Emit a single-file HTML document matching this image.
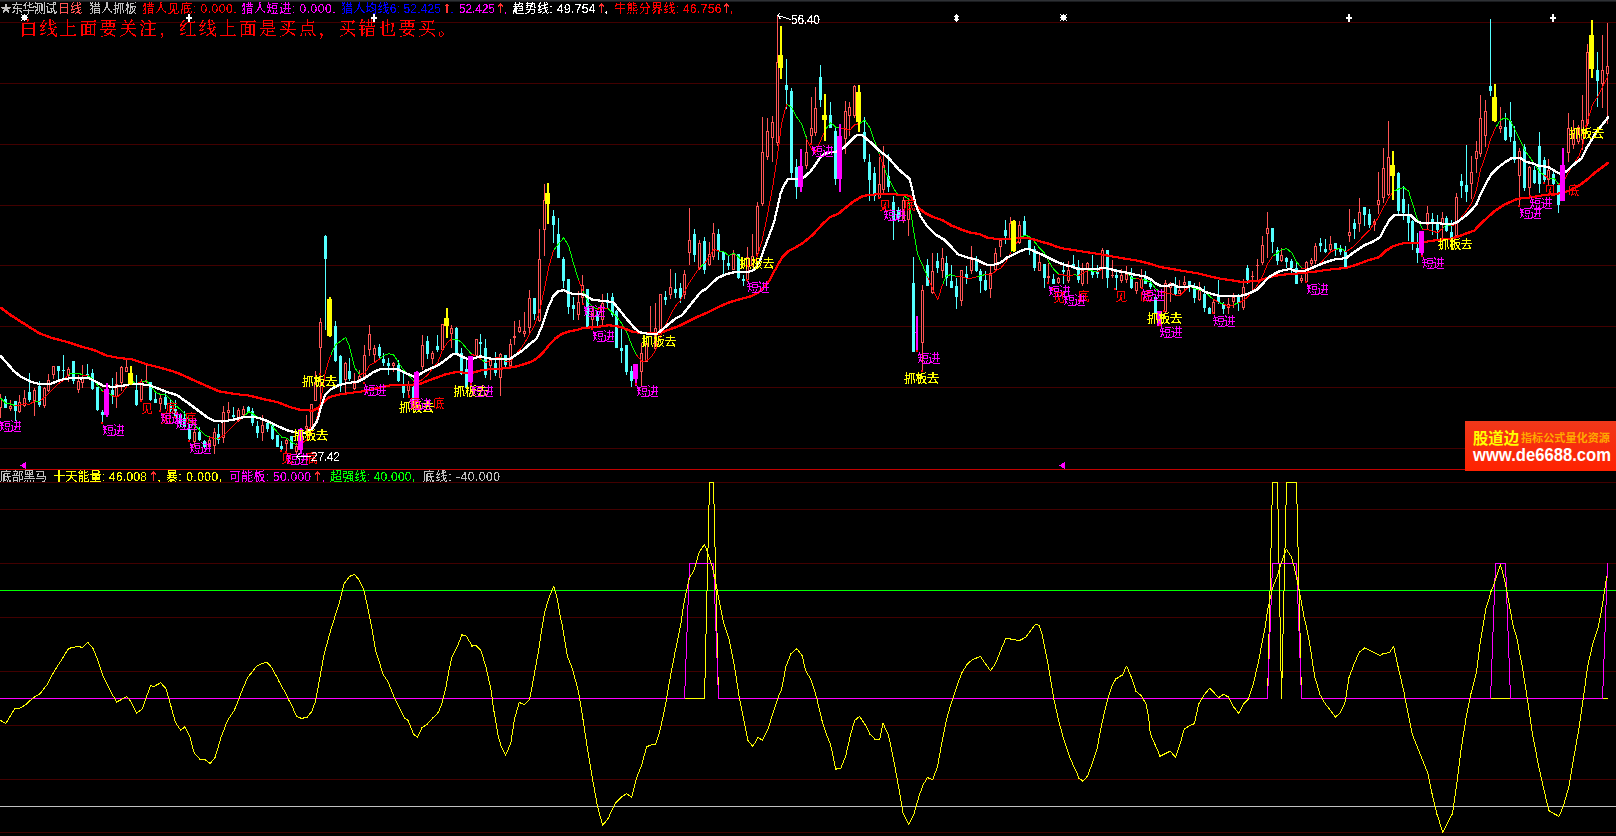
<!DOCTYPE html>
<html lang="zh"><head><meta charset="utf-8"><title>猎人抓板</title>
<style>html,body{margin:0;padding:0;background:#000;overflow:hidden}svg{display:block}</style></head>
<body><svg width="1616" height="836" viewBox="0 0 1616 836">
<rect x="0" y="0" width="1616" height="836" fill="#000"/>
<rect x="0" y="0" width="1616" height="1" fill="#2e3135"/><rect x="0" y="1" width="1616" height="1" fill="#1a1c1f"/>
<g fill="#420000" shape-rendering="crispEdges"><rect x="0" y="22" width="1616" height="1"/><rect x="0" y="83" width="1616" height="1"/><rect x="0" y="144" width="1616" height="1"/><rect x="0" y="205" width="1616" height="1"/><rect x="0" y="265" width="1616" height="1"/><rect x="0" y="326" width="1616" height="1"/><rect x="0" y="387" width="1616" height="1"/><rect x="0" y="448" width="1616" height="1"/><rect x="0" y="482" width="1616" height="1"/><rect x="0" y="509" width="1616" height="1"/><rect x="0" y="563" width="1616" height="1"/><rect x="0" y="617" width="1616" height="1"/><rect x="0" y="671" width="1616" height="1"/><rect x="0" y="725" width="1616" height="1"/><rect x="0" y="779" width="1616" height="1"/><rect x="0" y="832" width="1616" height="1"/></g>
<rect x="0" y="469" width="1616" height="1" fill="#c00000" shape-rendering="crispEdges"/>
<g shape-rendering="crispEdges"><rect x="0" y="394" width="1" height="24" fill="#ff5454"/><rect x="-1" y="398" width="3" height="10" fill="#ff5454"/><rect x="0" y="399" width="1" height="8" fill="#000"/><rect x="5" y="396" width="1" height="12" fill="#54ffff"/><rect x="4" y="399" width="3" height="9" fill="#54ffff"/><rect x="10" y="400" width="1" height="11" fill="#ff5454"/><rect x="9" y="406" width="3" height="3" fill="#ff5454"/><rect x="10" y="407" width="1" height="1" fill="#000"/><rect x="15" y="401" width="1" height="20" fill="#54ffff"/><rect x="14" y="401" width="3" height="10" fill="#54ffff"/><rect x="19" y="395" width="1" height="18" fill="#ff5454"/><rect x="18" y="402" width="3" height="10" fill="#ff5454"/><rect x="19" y="403" width="1" height="8" fill="#000"/><rect x="24" y="390" width="1" height="17" fill="#ff5454"/><rect x="23" y="398" width="3" height="8" fill="#ff5454"/><rect x="24" y="399" width="1" height="6" fill="#000"/><rect x="29" y="373" width="1" height="29" fill="#54ffff"/><rect x="28" y="392" width="3" height="8" fill="#54ffff"/><rect x="34" y="388" width="1" height="28" fill="#ff5454"/><rect x="33" y="390" width="3" height="11" fill="#ff5454"/><rect x="34" y="391" width="1" height="9" fill="#000"/><rect x="39" y="381" width="1" height="26" fill="#54ffff"/><rect x="38" y="386" width="3" height="19" fill="#54ffff"/><rect x="44" y="387" width="1" height="21" fill="#ff5454"/><rect x="43" y="388" width="3" height="18" fill="#ff5454"/><rect x="44" y="389" width="1" height="16" fill="#000"/><rect x="48" y="374" width="1" height="18" fill="#ff5454"/><rect x="47" y="380" width="3" height="11" fill="#ff5454"/><rect x="48" y="381" width="1" height="9" fill="#000"/><rect x="53" y="366" width="1" height="13" fill="#ff5454"/><rect x="52" y="366" width="3" height="9" fill="#ff5454"/><rect x="53" y="367" width="1" height="7" fill="#000"/><rect x="58" y="366" width="1" height="13" fill="#54ffff"/><rect x="57" y="366" width="3" height="5" fill="#54ffff"/><rect x="63" y="355" width="1" height="24" fill="#54ffff"/><rect x="62" y="370" width="3" height="1" fill="#54ffff"/><rect x="68" y="367" width="1" height="15" fill="#ff5454"/><rect x="67" y="369" width="3" height="7" fill="#ff5454"/><rect x="68" y="370" width="1" height="5" fill="#000"/><rect x="73" y="361" width="1" height="23" fill="#54ffff"/><rect x="72" y="361" width="3" height="20" fill="#54ffff"/><rect x="78" y="375" width="1" height="18" fill="#ff5454"/><rect x="77" y="381" width="3" height="9" fill="#ff5454"/><rect x="78" y="382" width="1" height="7" fill="#000"/><rect x="82" y="365" width="1" height="23" fill="#ff5454"/><rect x="81" y="377" width="3" height="6" fill="#ff5454"/><rect x="82" y="378" width="1" height="4" fill="#000"/><rect x="87" y="364" width="1" height="13" fill="#54ffff"/><rect x="86" y="374" width="3" height="1" fill="#54ffff"/><rect x="92" y="369" width="1" height="21" fill="#54ffff"/><rect x="91" y="373" width="3" height="16" fill="#54ffff"/><rect x="97" y="387" width="1" height="24" fill="#54ffff"/><rect x="96" y="387" width="3" height="23" fill="#54ffff"/><rect x="102" y="410" width="1" height="14" fill="#54ffff"/><rect x="101" y="412" width="3" height="3" fill="#54ffff"/><rect x="112" y="378" width="1" height="26" fill="#54ffff"/><rect x="111" y="390" width="3" height="6" fill="#54ffff"/><rect x="116" y="372" width="1" height="36" fill="#ff5454"/><rect x="115" y="384" width="3" height="13" fill="#ff5454"/><rect x="116" y="385" width="1" height="11" fill="#000"/><rect x="121" y="366" width="1" height="25" fill="#ff5454"/><rect x="120" y="367" width="3" height="16" fill="#ff5454"/><rect x="121" y="368" width="1" height="14" fill="#000"/><rect x="126" y="359" width="1" height="13" fill="#ff5454"/><rect x="125" y="367" width="3" height="5" fill="#ff5454"/><rect x="126" y="368" width="1" height="3" fill="#000"/><rect x="136" y="375" width="1" height="31" fill="#54ffff"/><rect x="135" y="390" width="3" height="15" fill="#54ffff"/><rect x="141" y="379" width="1" height="22" fill="#ff5454"/><rect x="140" y="381" width="3" height="19" fill="#ff5454"/><rect x="141" y="382" width="1" height="17" fill="#000"/><rect x="146" y="365" width="1" height="18" fill="#ff5454"/><rect x="145" y="381" width="3" height="1" fill="#ff5454"/><rect x="150" y="382" width="1" height="19" fill="#54ffff"/><rect x="149" y="382" width="3" height="18" fill="#54ffff"/><rect x="155" y="393" width="1" height="10" fill="#54ffff"/><rect x="154" y="399" width="3" height="4" fill="#54ffff"/><rect x="160" y="394" width="1" height="17" fill="#ff5454"/><rect x="159" y="398" width="3" height="6" fill="#ff5454"/><rect x="160" y="399" width="1" height="4" fill="#000"/><rect x="165" y="393" width="1" height="16" fill="#54ffff"/><rect x="164" y="397" width="3" height="8" fill="#54ffff"/><rect x="170" y="400" width="1" height="12" fill="#54ffff"/><rect x="169" y="406" width="3" height="4" fill="#54ffff"/><rect x="175" y="400" width="1" height="18" fill="#54ffff"/><rect x="174" y="409" width="3" height="9" fill="#54ffff"/><rect x="180" y="413" width="1" height="14" fill="#54ffff"/><rect x="179" y="415" width="3" height="9" fill="#54ffff"/><rect x="184" y="411" width="1" height="18" fill="#54ffff"/><rect x="183" y="418" width="3" height="9" fill="#54ffff"/><rect x="189" y="424" width="1" height="18" fill="#54ffff"/><rect x="188" y="429" width="3" height="10" fill="#54ffff"/><rect x="194" y="427" width="1" height="20" fill="#ff5454"/><rect x="193" y="432" width="3" height="10" fill="#ff5454"/><rect x="194" y="433" width="1" height="8" fill="#000"/><rect x="199" y="427" width="1" height="14" fill="#54ffff"/><rect x="198" y="432" width="3" height="8" fill="#54ffff"/><rect x="204" y="440" width="1" height="9" fill="#54ffff"/><rect x="203" y="441" width="3" height="6" fill="#54ffff"/><rect x="209" y="436" width="1" height="16" fill="#ff5454"/><rect x="208" y="440" width="3" height="7" fill="#ff5454"/><rect x="209" y="441" width="1" height="5" fill="#000"/><rect x="214" y="428" width="1" height="26" fill="#ff5454"/><rect x="213" y="432" width="3" height="14" fill="#ff5454"/><rect x="214" y="433" width="1" height="12" fill="#000"/><rect x="218" y="424" width="1" height="20" fill="#54ffff"/><rect x="217" y="434" width="3" height="6" fill="#54ffff"/><rect x="223" y="406" width="1" height="37" fill="#ff5454"/><rect x="222" y="412" width="3" height="26" fill="#ff5454"/><rect x="223" y="413" width="1" height="24" fill="#000"/><rect x="228" y="402" width="1" height="19" fill="#ff5454"/><rect x="227" y="410" width="3" height="3" fill="#ff5454"/><rect x="228" y="411" width="1" height="1" fill="#000"/><rect x="233" y="407" width="1" height="11" fill="#54ffff"/><rect x="232" y="415" width="3" height="2" fill="#54ffff"/><rect x="238" y="408" width="1" height="14" fill="#ff5454"/><rect x="237" y="410" width="3" height="11" fill="#ff5454"/><rect x="238" y="411" width="1" height="9" fill="#000"/><rect x="243" y="406" width="1" height="12" fill="#ff5454"/><rect x="242" y="409" width="3" height="6" fill="#ff5454"/><rect x="243" y="410" width="1" height="4" fill="#000"/><rect x="248" y="406" width="1" height="7" fill="#54ffff"/><rect x="247" y="407" width="3" height="5" fill="#54ffff"/><rect x="252" y="408" width="1" height="18" fill="#54ffff"/><rect x="251" y="411" width="3" height="12" fill="#54ffff"/><rect x="257" y="421" width="1" height="17" fill="#54ffff"/><rect x="256" y="426" width="3" height="7" fill="#54ffff"/><rect x="262" y="415" width="1" height="26" fill="#ff5454"/><rect x="261" y="425" width="3" height="8" fill="#ff5454"/><rect x="262" y="426" width="1" height="6" fill="#000"/><rect x="267" y="423" width="1" height="9" fill="#54ffff"/><rect x="266" y="423" width="3" height="6" fill="#54ffff"/><rect x="272" y="425" width="1" height="15" fill="#54ffff"/><rect x="271" y="425" width="3" height="14" fill="#54ffff"/><rect x="277" y="435" width="1" height="12" fill="#54ffff"/><rect x="276" y="435" width="3" height="12" fill="#54ffff"/><rect x="281" y="441" width="1" height="11" fill="#54ffff"/><rect x="280" y="446" width="3" height="3" fill="#54ffff"/><rect x="286" y="438" width="1" height="16" fill="#ff5454"/><rect x="285" y="440" width="3" height="4" fill="#ff5454"/><rect x="286" y="441" width="1" height="2" fill="#000"/><rect x="291" y="436" width="1" height="13" fill="#54ffff"/><rect x="290" y="436" width="3" height="13" fill="#54ffff"/><rect x="296" y="443" width="1" height="12" fill="#ff5454"/><rect x="295" y="446" width="3" height="6" fill="#ff5454"/><rect x="296" y="447" width="1" height="4" fill="#000"/><rect x="306" y="415" width="1" height="18" fill="#ff5454"/><rect x="305" y="426" width="3" height="3" fill="#ff5454"/><rect x="306" y="427" width="1" height="1" fill="#000"/><rect x="311" y="404" width="1" height="25" fill="#ff5454"/><rect x="310" y="404" width="3" height="25" fill="#ff5454"/><rect x="311" y="405" width="1" height="23" fill="#000"/><rect x="315" y="371" width="1" height="30" fill="#ff5454"/><rect x="314" y="384" width="3" height="17" fill="#ff5454"/><rect x="315" y="385" width="1" height="15" fill="#000"/><rect x="320" y="318" width="1" height="88" fill="#ff5454"/><rect x="319" y="322" width="3" height="26" fill="#ff5454"/><rect x="320" y="323" width="1" height="24" fill="#000"/><rect x="325" y="235" width="1" height="95" fill="#54ffff"/><rect x="324" y="236" width="3" height="23" fill="#54ffff"/><rect x="335" y="321" width="1" height="41" fill="#54ffff"/><rect x="334" y="326" width="3" height="35" fill="#54ffff"/><rect x="340" y="355" width="1" height="37" fill="#54ffff"/><rect x="339" y="356" width="3" height="28" fill="#54ffff"/><rect x="345" y="362" width="1" height="32" fill="#ff5454"/><rect x="344" y="363" width="3" height="17" fill="#ff5454"/><rect x="345" y="364" width="1" height="15" fill="#000"/><rect x="349" y="358" width="1" height="23" fill="#54ffff"/><rect x="348" y="371" width="3" height="8" fill="#54ffff"/><rect x="354" y="373" width="1" height="17" fill="#ff5454"/><rect x="353" y="383" width="3" height="6" fill="#ff5454"/><rect x="354" y="384" width="1" height="4" fill="#000"/><rect x="359" y="370" width="1" height="11" fill="#ff5454"/><rect x="358" y="376" width="3" height="4" fill="#ff5454"/><rect x="359" y="377" width="1" height="2" fill="#000"/><rect x="364" y="345" width="1" height="34" fill="#ff5454"/><rect x="363" y="355" width="3" height="22" fill="#ff5454"/><rect x="364" y="356" width="1" height="20" fill="#000"/><rect x="369" y="325" width="1" height="31" fill="#ff5454"/><rect x="368" y="334" width="3" height="16" fill="#ff5454"/><rect x="369" y="335" width="1" height="14" fill="#000"/><rect x="374" y="345" width="1" height="18" fill="#ff5454"/><rect x="373" y="348" width="3" height="7" fill="#ff5454"/><rect x="374" y="349" width="1" height="5" fill="#000"/><rect x="379" y="344" width="1" height="15" fill="#54ffff"/><rect x="378" y="347" width="3" height="9" fill="#54ffff"/><rect x="383" y="353" width="1" height="13" fill="#54ffff"/><rect x="382" y="359" width="3" height="4" fill="#54ffff"/><rect x="388" y="358" width="1" height="17" fill="#54ffff"/><rect x="387" y="363" width="3" height="3" fill="#54ffff"/><rect x="393" y="362" width="1" height="10" fill="#ff5454"/><rect x="392" y="363" width="3" height="3" fill="#ff5454"/><rect x="393" y="364" width="1" height="1" fill="#000"/><rect x="398" y="360" width="1" height="22" fill="#54ffff"/><rect x="397" y="365" width="3" height="16" fill="#54ffff"/><rect x="403" y="373" width="1" height="25" fill="#54ffff"/><rect x="402" y="385" width="3" height="8" fill="#54ffff"/><rect x="408" y="381" width="1" height="16" fill="#ff5454"/><rect x="407" y="384" width="3" height="7" fill="#ff5454"/><rect x="408" y="385" width="1" height="5" fill="#000"/><rect x="413" y="385" width="1" height="19" fill="#54ffff"/><rect x="412" y="387" width="3" height="13" fill="#54ffff"/><rect x="422" y="335" width="1" height="35" fill="#ff5454"/><rect x="421" y="345" width="3" height="22" fill="#ff5454"/><rect x="422" y="346" width="1" height="20" fill="#000"/><rect x="427" y="336" width="1" height="23" fill="#54ffff"/><rect x="426" y="341" width="3" height="13" fill="#54ffff"/><rect x="432" y="351" width="1" height="13" fill="#ff5454"/><rect x="431" y="353" width="3" height="6" fill="#ff5454"/><rect x="432" y="354" width="1" height="4" fill="#000"/><rect x="437" y="335" width="1" height="17" fill="#54ffff"/><rect x="436" y="346" width="3" height="4" fill="#54ffff"/><rect x="442" y="324" width="1" height="27" fill="#ff5454"/><rect x="441" y="324" width="3" height="26" fill="#ff5454"/><rect x="442" y="325" width="1" height="24" fill="#000"/><rect x="451" y="325" width="1" height="23" fill="#ff5454"/><rect x="450" y="328" width="3" height="6" fill="#ff5454"/><rect x="451" y="329" width="1" height="4" fill="#000"/><rect x="456" y="327" width="1" height="27" fill="#54ffff"/><rect x="455" y="328" width="3" height="25" fill="#54ffff"/><rect x="461" y="348" width="1" height="27" fill="#54ffff"/><rect x="460" y="353" width="3" height="21" fill="#54ffff"/><rect x="466" y="360" width="1" height="29" fill="#54ffff"/><rect x="465" y="369" width="3" height="19" fill="#54ffff"/><rect x="476" y="339" width="1" height="17" fill="#ff5454"/><rect x="475" y="339" width="3" height="17" fill="#ff5454"/><rect x="476" y="340" width="1" height="15" fill="#000"/><rect x="480" y="334" width="1" height="21" fill="#54ffff"/><rect x="479" y="342" width="3" height="2" fill="#54ffff"/><rect x="485" y="339" width="1" height="39" fill="#54ffff"/><rect x="484" y="348" width="3" height="27" fill="#54ffff"/><rect x="490" y="357" width="1" height="23" fill="#ff5454"/><rect x="489" y="359" width="3" height="7" fill="#ff5454"/><rect x="490" y="360" width="1" height="5" fill="#000"/><rect x="495" y="352" width="1" height="24" fill="#54ffff"/><rect x="494" y="363" width="3" height="10" fill="#54ffff"/><rect x="500" y="353" width="1" height="43" fill="#ff5454"/><rect x="499" y="354" width="3" height="24" fill="#ff5454"/><rect x="500" y="355" width="1" height="22" fill="#000"/><rect x="505" y="355" width="1" height="13" fill="#54ffff"/><rect x="504" y="355" width="3" height="10" fill="#54ffff"/><rect x="510" y="339" width="1" height="28" fill="#ff5454"/><rect x="509" y="344" width="3" height="22" fill="#ff5454"/><rect x="510" y="345" width="1" height="20" fill="#000"/><rect x="514" y="321" width="1" height="24" fill="#ff5454"/><rect x="513" y="336" width="3" height="2" fill="#ff5454"/><rect x="519" y="320" width="1" height="13" fill="#ff5454"/><rect x="518" y="327" width="3" height="5" fill="#ff5454"/><rect x="519" y="328" width="1" height="3" fill="#000"/><rect x="524" y="312" width="1" height="25" fill="#ff5454"/><rect x="523" y="331" width="3" height="3" fill="#ff5454"/><rect x="524" y="332" width="1" height="1" fill="#000"/><rect x="529" y="290" width="1" height="43" fill="#ff5454"/><rect x="528" y="298" width="3" height="30" fill="#ff5454"/><rect x="529" y="299" width="1" height="28" fill="#000"/><rect x="534" y="298" width="1" height="22" fill="#54ffff"/><rect x="533" y="298" width="3" height="16" fill="#54ffff"/><rect x="539" y="229" width="1" height="93" fill="#ff5454"/><rect x="538" y="259" width="3" height="62" fill="#ff5454"/><rect x="539" y="260" width="1" height="60" fill="#000"/><rect x="544" y="184" width="1" height="72" fill="#ff5454"/><rect x="543" y="200" width="3" height="30" fill="#ff5454"/><rect x="544" y="201" width="1" height="28" fill="#000"/><rect x="553" y="210" width="1" height="33" fill="#54ffff"/><rect x="552" y="216" width="3" height="9" fill="#54ffff"/><rect x="558" y="218" width="1" height="40" fill="#54ffff"/><rect x="557" y="234" width="3" height="24" fill="#54ffff"/><rect x="563" y="257" width="1" height="31" fill="#54ffff"/><rect x="562" y="259" width="3" height="22" fill="#54ffff"/><rect x="568" y="279" width="1" height="35" fill="#54ffff"/><rect x="567" y="279" width="3" height="28" fill="#54ffff"/><rect x="573" y="297" width="1" height="23" fill="#54ffff"/><rect x="572" y="305" width="3" height="4" fill="#54ffff"/><rect x="578" y="291" width="1" height="29" fill="#ff5454"/><rect x="577" y="302" width="3" height="13" fill="#ff5454"/><rect x="578" y="303" width="1" height="11" fill="#000"/><rect x="582" y="275" width="1" height="28" fill="#ff5454"/><rect x="581" y="285" width="3" height="13" fill="#ff5454"/><rect x="582" y="286" width="1" height="11" fill="#000"/><rect x="587" y="289" width="1" height="38" fill="#54ffff"/><rect x="586" y="289" width="3" height="38" fill="#54ffff"/><rect x="592" y="306" width="1" height="21" fill="#ff5454"/><rect x="591" y="311" width="3" height="9" fill="#ff5454"/><rect x="592" y="312" width="1" height="7" fill="#000"/><rect x="597" y="311" width="1" height="15" fill="#54ffff"/><rect x="596" y="314" width="3" height="7" fill="#54ffff"/><rect x="602" y="294" width="1" height="31" fill="#ff5454"/><rect x="601" y="303" width="3" height="17" fill="#ff5454"/><rect x="602" y="304" width="1" height="15" fill="#000"/><rect x="607" y="293" width="1" height="15" fill="#54ffff"/><rect x="606" y="301" width="3" height="2" fill="#54ffff"/><rect x="612" y="293" width="1" height="24" fill="#54ffff"/><rect x="611" y="297" width="3" height="18" fill="#54ffff"/><rect x="616" y="310" width="1" height="38" fill="#54ffff"/><rect x="615" y="311" width="3" height="37" fill="#54ffff"/><rect x="621" y="329" width="1" height="34" fill="#54ffff"/><rect x="620" y="348" width="3" height="3" fill="#54ffff"/><rect x="626" y="345" width="1" height="30" fill="#54ffff"/><rect x="625" y="345" width="3" height="27" fill="#54ffff"/><rect x="631" y="366" width="1" height="21" fill="#54ffff"/><rect x="630" y="371" width="3" height="10" fill="#54ffff"/><rect x="641" y="343" width="1" height="44" fill="#ff5454"/><rect x="640" y="353" width="3" height="19" fill="#ff5454"/><rect x="641" y="354" width="1" height="17" fill="#000"/><rect x="646" y="341" width="1" height="21" fill="#ff5454"/><rect x="645" y="343" width="3" height="19" fill="#ff5454"/><rect x="646" y="344" width="1" height="17" fill="#000"/><rect x="650" y="306" width="1" height="29" fill="#ff5454"/><rect x="649" y="332" width="3" height="2" fill="#ff5454"/><rect x="655" y="303" width="1" height="48" fill="#ff5454"/><rect x="654" y="328" width="3" height="21" fill="#ff5454"/><rect x="655" y="329" width="1" height="19" fill="#000"/><rect x="660" y="294" width="1" height="38" fill="#ff5454"/><rect x="659" y="294" width="3" height="37" fill="#ff5454"/><rect x="660" y="295" width="1" height="35" fill="#000"/><rect x="665" y="291" width="1" height="14" fill="#54ffff"/><rect x="664" y="297" width="3" height="3" fill="#54ffff"/><rect x="670" y="269" width="1" height="30" fill="#ff5454"/><rect x="669" y="287" width="3" height="8" fill="#ff5454"/><rect x="670" y="288" width="1" height="6" fill="#000"/><rect x="675" y="273" width="1" height="25" fill="#54ffff"/><rect x="674" y="289" width="3" height="4" fill="#54ffff"/><rect x="680" y="283" width="1" height="20" fill="#54ffff"/><rect x="679" y="288" width="3" height="10" fill="#54ffff"/><rect x="684" y="270" width="1" height="29" fill="#ff5454"/><rect x="683" y="274" width="3" height="21" fill="#ff5454"/><rect x="684" y="275" width="1" height="19" fill="#000"/><rect x="689" y="208" width="1" height="57" fill="#ff5454"/><rect x="688" y="240" width="3" height="13" fill="#ff5454"/><rect x="689" y="241" width="1" height="11" fill="#000"/><rect x="694" y="229" width="1" height="33" fill="#54ffff"/><rect x="693" y="234" width="3" height="21" fill="#54ffff"/><rect x="699" y="240" width="1" height="30" fill="#ff5454"/><rect x="698" y="243" width="3" height="26" fill="#ff5454"/><rect x="699" y="244" width="1" height="24" fill="#000"/><rect x="704" y="237" width="1" height="37" fill="#54ffff"/><rect x="703" y="241" width="3" height="29" fill="#54ffff"/><rect x="709" y="242" width="1" height="24" fill="#ff5454"/><rect x="708" y="254" width="3" height="11" fill="#ff5454"/><rect x="709" y="255" width="1" height="9" fill="#000"/><rect x="713" y="223" width="1" height="37" fill="#ff5454"/><rect x="712" y="233" width="3" height="24" fill="#ff5454"/><rect x="713" y="234" width="1" height="22" fill="#000"/><rect x="718" y="229" width="1" height="31" fill="#54ffff"/><rect x="717" y="234" width="3" height="17" fill="#54ffff"/><rect x="723" y="252" width="1" height="23" fill="#54ffff"/><rect x="722" y="252" width="3" height="8" fill="#54ffff"/><rect x="728" y="256" width="1" height="14" fill="#54ffff"/><rect x="727" y="263" width="3" height="3" fill="#54ffff"/><rect x="733" y="250" width="1" height="20" fill="#ff5454"/><rect x="732" y="254" width="3" height="16" fill="#ff5454"/><rect x="733" y="255" width="1" height="14" fill="#000"/><rect x="738" y="254" width="1" height="25" fill="#54ffff"/><rect x="737" y="254" width="3" height="24" fill="#54ffff"/><rect x="743" y="275" width="1" height="11" fill="#54ffff"/><rect x="742" y="279" width="3" height="2" fill="#54ffff"/><rect x="747" y="247" width="1" height="35" fill="#ff5454"/><rect x="746" y="257" width="3" height="23" fill="#ff5454"/><rect x="747" y="258" width="1" height="21" fill="#000"/><rect x="752" y="234" width="1" height="33" fill="#ff5454"/><rect x="751" y="256" width="3" height="10" fill="#ff5454"/><rect x="752" y="257" width="1" height="8" fill="#000"/><rect x="757" y="202" width="1" height="54" fill="#ff5454"/><rect x="756" y="206" width="3" height="48" fill="#ff5454"/><rect x="757" y="207" width="1" height="46" fill="#000"/><rect x="762" y="117" width="1" height="89" fill="#ff5454"/><rect x="761" y="152" width="3" height="52" fill="#ff5454"/><rect x="762" y="153" width="1" height="50" fill="#000"/><rect x="767" y="118" width="1" height="42" fill="#ff5454"/><rect x="766" y="131" width="3" height="26" fill="#ff5454"/><rect x="767" y="132" width="1" height="24" fill="#000"/><rect x="772" y="116" width="1" height="46" fill="#ff5454"/><rect x="771" y="122" width="3" height="16" fill="#ff5454"/><rect x="772" y="123" width="1" height="14" fill="#000"/><rect x="777" y="15" width="1" height="131" fill="#ff5454"/><rect x="776" y="62" width="3" height="81" fill="#ff5454"/><rect x="777" y="63" width="1" height="79" fill="#000"/><rect x="786" y="59" width="1" height="50" fill="#54ffff"/><rect x="785" y="85" width="3" height="5" fill="#54ffff"/><rect x="791" y="88" width="1" height="91" fill="#54ffff"/><rect x="790" y="91" width="3" height="82" fill="#54ffff"/><rect x="796" y="159" width="1" height="40" fill="#54ffff"/><rect x="795" y="167" width="3" height="20" fill="#54ffff"/><rect x="806" y="136" width="1" height="33" fill="#ff5454"/><rect x="805" y="152" width="3" height="14" fill="#ff5454"/><rect x="806" y="153" width="1" height="12" fill="#000"/><rect x="811" y="97" width="1" height="47" fill="#ff5454"/><rect x="810" y="128" width="3" height="8" fill="#ff5454"/><rect x="811" y="129" width="1" height="6" fill="#000"/><rect x="815" y="87" width="1" height="49" fill="#ff5454"/><rect x="814" y="108" width="3" height="25" fill="#ff5454"/><rect x="815" y="109" width="1" height="23" fill="#000"/><rect x="820" y="65" width="1" height="42" fill="#54ffff"/><rect x="819" y="77" width="3" height="23" fill="#54ffff"/><rect x="830" y="102" width="1" height="26" fill="#54ffff"/><rect x="829" y="115" width="3" height="13" fill="#54ffff"/><rect x="835" y="128" width="1" height="57" fill="#54ffff"/><rect x="834" y="131" width="3" height="48" fill="#54ffff"/><rect x="845" y="101" width="1" height="53" fill="#ff5454"/><rect x="844" y="111" width="3" height="28" fill="#ff5454"/><rect x="845" y="112" width="1" height="26" fill="#000"/><rect x="849" y="102" width="1" height="34" fill="#ff5454"/><rect x="848" y="107" width="3" height="9" fill="#ff5454"/><rect x="849" y="108" width="1" height="7" fill="#000"/><rect x="854" y="85" width="1" height="33" fill="#ff5454"/><rect x="853" y="86" width="3" height="30" fill="#ff5454"/><rect x="854" y="87" width="1" height="28" fill="#000"/><rect x="864" y="117" width="1" height="45" fill="#54ffff"/><rect x="863" y="132" width="3" height="27" fill="#54ffff"/><rect x="869" y="154" width="1" height="47" fill="#54ffff"/><rect x="868" y="162" width="3" height="18" fill="#54ffff"/><rect x="874" y="167" width="1" height="34" fill="#54ffff"/><rect x="873" y="173" width="3" height="23" fill="#54ffff"/><rect x="879" y="157" width="1" height="41" fill="#ff5454"/><rect x="878" y="184" width="3" height="14" fill="#ff5454"/><rect x="879" y="185" width="1" height="12" fill="#000"/><rect x="883" y="146" width="1" height="47" fill="#ff5454"/><rect x="882" y="165" width="3" height="25" fill="#ff5454"/><rect x="883" y="166" width="1" height="23" fill="#000"/><rect x="888" y="154" width="1" height="38" fill="#54ffff"/><rect x="887" y="176" width="3" height="11" fill="#54ffff"/><rect x="893" y="196" width="1" height="44" fill="#54ffff"/><rect x="892" y="202" width="3" height="19" fill="#54ffff"/><rect x="898" y="207" width="1" height="15" fill="#54ffff"/><rect x="897" y="210" width="3" height="8" fill="#54ffff"/><rect x="903" y="197" width="1" height="26" fill="#ff5454"/><rect x="902" y="200" width="3" height="21" fill="#ff5454"/><rect x="903" y="201" width="1" height="19" fill="#000"/><rect x="908" y="199" width="1" height="37" fill="#ff5454"/><rect x="907" y="203" width="3" height="17" fill="#ff5454"/><rect x="908" y="204" width="1" height="15" fill="#000"/><rect x="913" y="257" width="1" height="95" fill="#54ffff"/><rect x="912" y="283" width="3" height="69" fill="#54ffff"/><rect x="922" y="285" width="1" height="86" fill="#ff5454"/><rect x="921" y="290" width="3" height="53" fill="#ff5454"/><rect x="922" y="291" width="1" height="51" fill="#000"/><rect x="927" y="259" width="1" height="27" fill="#54ffff"/><rect x="926" y="265" width="3" height="21" fill="#54ffff"/><rect x="932" y="253" width="1" height="41" fill="#ff5454"/><rect x="931" y="271" width="3" height="22" fill="#ff5454"/><rect x="932" y="272" width="1" height="20" fill="#000"/><rect x="937" y="253" width="1" height="20" fill="#54ffff"/><rect x="936" y="261" width="3" height="7" fill="#54ffff"/><rect x="942" y="248" width="1" height="30" fill="#ff5454"/><rect x="941" y="258" width="3" height="13" fill="#ff5454"/><rect x="942" y="259" width="1" height="11" fill="#000"/><rect x="946" y="256" width="1" height="30" fill="#54ffff"/><rect x="945" y="263" width="3" height="15" fill="#54ffff"/><rect x="951" y="265" width="1" height="23" fill="#54ffff"/><rect x="950" y="281" width="3" height="7" fill="#54ffff"/><rect x="956" y="278" width="1" height="31" fill="#54ffff"/><rect x="955" y="286" width="3" height="11" fill="#54ffff"/><rect x="961" y="270" width="1" height="36" fill="#ff5454"/><rect x="960" y="270" width="3" height="31" fill="#ff5454"/><rect x="961" y="271" width="1" height="29" fill="#000"/><rect x="966" y="266" width="1" height="18" fill="#54ffff"/><rect x="965" y="274" width="3" height="4" fill="#54ffff"/><rect x="971" y="246" width="1" height="28" fill="#ff5454"/><rect x="970" y="257" width="3" height="14" fill="#ff5454"/><rect x="971" y="258" width="1" height="12" fill="#000"/><rect x="976" y="256" width="1" height="16" fill="#54ffff"/><rect x="975" y="261" width="3" height="10" fill="#54ffff"/><rect x="980" y="269" width="1" height="24" fill="#54ffff"/><rect x="979" y="271" width="3" height="10" fill="#54ffff"/><rect x="985" y="271" width="1" height="20" fill="#54ffff"/><rect x="984" y="280" width="3" height="10" fill="#54ffff"/><rect x="990" y="264" width="1" height="34" fill="#ff5454"/><rect x="989" y="273" width="3" height="16" fill="#ff5454"/><rect x="990" y="274" width="1" height="14" fill="#000"/><rect x="995" y="248" width="1" height="23" fill="#ff5454"/><rect x="994" y="253" width="3" height="17" fill="#ff5454"/><rect x="995" y="254" width="1" height="15" fill="#000"/><rect x="1000" y="240" width="1" height="17" fill="#ff5454"/><rect x="999" y="240" width="3" height="7" fill="#ff5454"/><rect x="1000" y="241" width="1" height="5" fill="#000"/><rect x="1005" y="220" width="1" height="24" fill="#54ffff"/><rect x="1004" y="230" width="3" height="6" fill="#54ffff"/><rect x="1010" y="217" width="1" height="23" fill="#ff5454"/><rect x="1009" y="223" width="3" height="17" fill="#ff5454"/><rect x="1010" y="224" width="1" height="15" fill="#000"/><rect x="1019" y="221" width="1" height="23" fill="#ff5454"/><rect x="1018" y="225" width="3" height="18" fill="#ff5454"/><rect x="1019" y="226" width="1" height="16" fill="#000"/><rect x="1024" y="216" width="1" height="20" fill="#54ffff"/><rect x="1023" y="221" width="3" height="15" fill="#54ffff"/><rect x="1029" y="237" width="1" height="18" fill="#54ffff"/><rect x="1028" y="240" width="3" height="9" fill="#54ffff"/><rect x="1034" y="246" width="1" height="25" fill="#54ffff"/><rect x="1033" y="249" width="3" height="19" fill="#54ffff"/><rect x="1039" y="252" width="1" height="19" fill="#ff5454"/><rect x="1038" y="262" width="3" height="9" fill="#ff5454"/><rect x="1039" y="263" width="1" height="7" fill="#000"/><rect x="1044" y="264" width="1" height="24" fill="#54ffff"/><rect x="1043" y="264" width="3" height="14" fill="#54ffff"/><rect x="1048" y="263" width="1" height="21" fill="#ff5454"/><rect x="1047" y="276" width="3" height="2" fill="#ff5454"/><rect x="1053" y="274" width="1" height="10" fill="#54ffff"/><rect x="1052" y="279" width="3" height="5" fill="#54ffff"/><rect x="1058" y="277" width="1" height="7" fill="#ff5454"/><rect x="1057" y="278" width="3" height="5" fill="#ff5454"/><rect x="1058" y="279" width="1" height="3" fill="#000"/><rect x="1063" y="262" width="1" height="22" fill="#54ffff"/><rect x="1062" y="270" width="3" height="2" fill="#54ffff"/><rect x="1068" y="261" width="1" height="22" fill="#ff5454"/><rect x="1067" y="270" width="3" height="11" fill="#ff5454"/><rect x="1068" y="271" width="1" height="9" fill="#000"/><rect x="1073" y="255" width="1" height="14" fill="#54ffff"/><rect x="1072" y="264" width="3" height="4" fill="#54ffff"/><rect x="1078" y="260" width="1" height="23" fill="#54ffff"/><rect x="1077" y="267" width="3" height="13" fill="#54ffff"/><rect x="1082" y="263" width="1" height="23" fill="#ff5454"/><rect x="1081" y="270" width="3" height="14" fill="#ff5454"/><rect x="1082" y="271" width="1" height="12" fill="#000"/><rect x="1087" y="262" width="1" height="22" fill="#ff5454"/><rect x="1086" y="263" width="3" height="7" fill="#ff5454"/><rect x="1087" y="264" width="1" height="5" fill="#000"/><rect x="1092" y="255" width="1" height="23" fill="#54ffff"/><rect x="1091" y="271" width="3" height="4" fill="#54ffff"/><rect x="1097" y="265" width="1" height="13" fill="#54ffff"/><rect x="1096" y="272" width="3" height="2" fill="#54ffff"/><rect x="1102" y="248" width="1" height="31" fill="#ff5454"/><rect x="1101" y="250" width="3" height="19" fill="#ff5454"/><rect x="1102" y="251" width="1" height="17" fill="#000"/><rect x="1107" y="250" width="1" height="38" fill="#54ffff"/><rect x="1106" y="250" width="3" height="28" fill="#54ffff"/><rect x="1112" y="260" width="1" height="18" fill="#ff5454"/><rect x="1111" y="275" width="3" height="1" fill="#ff5454"/><rect x="1116" y="269" width="1" height="21" fill="#54ffff"/><rect x="1115" y="275" width="3" height="3" fill="#54ffff"/><rect x="1121" y="269" width="1" height="14" fill="#ff5454"/><rect x="1120" y="275" width="3" height="6" fill="#ff5454"/><rect x="1121" y="276" width="1" height="4" fill="#000"/><rect x="1126" y="266" width="1" height="17" fill="#ff5454"/><rect x="1125" y="274" width="3" height="6" fill="#ff5454"/><rect x="1126" y="275" width="1" height="4" fill="#000"/><rect x="1131" y="268" width="1" height="21" fill="#54ffff"/><rect x="1130" y="276" width="3" height="12" fill="#54ffff"/><rect x="1136" y="282" width="1" height="12" fill="#ff5454"/><rect x="1135" y="282" width="3" height="9" fill="#ff5454"/><rect x="1136" y="283" width="1" height="7" fill="#000"/><rect x="1141" y="269" width="1" height="19" fill="#ff5454"/><rect x="1140" y="279" width="3" height="9" fill="#ff5454"/><rect x="1141" y="280" width="1" height="7" fill="#000"/><rect x="1145" y="271" width="1" height="13" fill="#54ffff"/><rect x="1144" y="278" width="3" height="6" fill="#54ffff"/><rect x="1150" y="280" width="1" height="9" fill="#54ffff"/><rect x="1149" y="283" width="3" height="4" fill="#54ffff"/><rect x="1155" y="294" width="1" height="20" fill="#54ffff"/><rect x="1154" y="297" width="3" height="16" fill="#54ffff"/><rect x="1165" y="280" width="1" height="33" fill="#ff5454"/><rect x="1164" y="283" width="3" height="29" fill="#ff5454"/><rect x="1165" y="284" width="1" height="27" fill="#000"/><rect x="1170" y="282" width="1" height="20" fill="#ff5454"/><rect x="1169" y="283" width="3" height="5" fill="#ff5454"/><rect x="1170" y="284" width="1" height="3" fill="#000"/><rect x="1175" y="277" width="1" height="19" fill="#54ffff"/><rect x="1174" y="286" width="3" height="8" fill="#54ffff"/><rect x="1179" y="280" width="1" height="14" fill="#ff5454"/><rect x="1178" y="290" width="3" height="4" fill="#ff5454"/><rect x="1179" y="291" width="1" height="2" fill="#000"/><rect x="1184" y="276" width="1" height="15" fill="#ff5454"/><rect x="1183" y="282" width="3" height="3" fill="#ff5454"/><rect x="1184" y="283" width="1" height="1" fill="#000"/><rect x="1189" y="281" width="1" height="11" fill="#54ffff"/><rect x="1188" y="281" width="3" height="4" fill="#54ffff"/><rect x="1194" y="283" width="1" height="20" fill="#54ffff"/><rect x="1193" y="288" width="3" height="10" fill="#54ffff"/><rect x="1199" y="282" width="1" height="19" fill="#ff5454"/><rect x="1198" y="290" width="3" height="10" fill="#ff5454"/><rect x="1199" y="291" width="1" height="8" fill="#000"/><rect x="1204" y="286" width="1" height="26" fill="#54ffff"/><rect x="1203" y="294" width="3" height="14" fill="#54ffff"/><rect x="1209" y="307" width="1" height="7" fill="#54ffff"/><rect x="1208" y="308" width="3" height="6" fill="#54ffff"/><rect x="1213" y="299" width="1" height="15" fill="#ff5454"/><rect x="1212" y="302" width="3" height="12" fill="#ff5454"/><rect x="1213" y="303" width="1" height="10" fill="#000"/><rect x="1218" y="280" width="1" height="24" fill="#54ffff"/><rect x="1217" y="296" width="3" height="6" fill="#54ffff"/><rect x="1223" y="302" width="1" height="12" fill="#54ffff"/><rect x="1222" y="304" width="3" height="5" fill="#54ffff"/><rect x="1228" y="298" width="1" height="16" fill="#ff5454"/><rect x="1227" y="304" width="3" height="4" fill="#ff5454"/><rect x="1228" y="305" width="1" height="2" fill="#000"/><rect x="1233" y="293" width="1" height="15" fill="#ff5454"/><rect x="1232" y="297" width="3" height="5" fill="#ff5454"/><rect x="1233" y="298" width="1" height="3" fill="#000"/><rect x="1238" y="294" width="1" height="17" fill="#54ffff"/><rect x="1237" y="295" width="3" height="8" fill="#54ffff"/><rect x="1243" y="279" width="1" height="31" fill="#ff5454"/><rect x="1242" y="287" width="3" height="21" fill="#ff5454"/><rect x="1243" y="288" width="1" height="19" fill="#000"/><rect x="1247" y="265" width="1" height="19" fill="#54ffff"/><rect x="1246" y="268" width="3" height="12" fill="#54ffff"/><rect x="1252" y="271" width="1" height="19" fill="#ff5454"/><rect x="1251" y="276" width="3" height="1" fill="#ff5454"/><rect x="1257" y="259" width="1" height="21" fill="#ff5454"/><rect x="1256" y="265" width="3" height="1" fill="#ff5454"/><rect x="1262" y="236" width="1" height="29" fill="#ff5454"/><rect x="1261" y="245" width="3" height="18" fill="#ff5454"/><rect x="1262" y="246" width="1" height="16" fill="#000"/><rect x="1267" y="212" width="1" height="46" fill="#ff5454"/><rect x="1266" y="228" width="3" height="6" fill="#ff5454"/><rect x="1267" y="229" width="1" height="4" fill="#000"/><rect x="1272" y="228" width="1" height="25" fill="#54ffff"/><rect x="1271" y="228" width="3" height="14" fill="#54ffff"/><rect x="1277" y="247" width="1" height="18" fill="#54ffff"/><rect x="1276" y="250" width="3" height="11" fill="#54ffff"/><rect x="1281" y="248" width="1" height="14" fill="#ff5454"/><rect x="1280" y="255" width="3" height="6" fill="#ff5454"/><rect x="1281" y="256" width="1" height="4" fill="#000"/><rect x="1286" y="257" width="1" height="11" fill="#54ffff"/><rect x="1285" y="258" width="3" height="4" fill="#54ffff"/><rect x="1291" y="259" width="1" height="14" fill="#54ffff"/><rect x="1290" y="261" width="3" height="7" fill="#54ffff"/><rect x="1296" y="263" width="1" height="21" fill="#54ffff"/><rect x="1295" y="268" width="3" height="16" fill="#54ffff"/><rect x="1301" y="275" width="1" height="8" fill="#ff5454"/><rect x="1300" y="278" width="3" height="3" fill="#ff5454"/><rect x="1301" y="279" width="1" height="1" fill="#000"/><rect x="1306" y="261" width="1" height="21" fill="#ff5454"/><rect x="1305" y="262" width="3" height="20" fill="#ff5454"/><rect x="1306" y="263" width="1" height="18" fill="#000"/><rect x="1311" y="258" width="1" height="8" fill="#ff5454"/><rect x="1310" y="260" width="3" height="4" fill="#ff5454"/><rect x="1311" y="261" width="1" height="2" fill="#000"/><rect x="1315" y="243" width="1" height="21" fill="#ff5454"/><rect x="1314" y="246" width="3" height="15" fill="#ff5454"/><rect x="1315" y="247" width="1" height="13" fill="#000"/><rect x="1320" y="238" width="1" height="14" fill="#54ffff"/><rect x="1319" y="243" width="3" height="3" fill="#54ffff"/><rect x="1325" y="239" width="1" height="14" fill="#54ffff"/><rect x="1324" y="249" width="3" height="3" fill="#54ffff"/><rect x="1330" y="236" width="1" height="15" fill="#ff5454"/><rect x="1329" y="244" width="3" height="6" fill="#ff5454"/><rect x="1330" y="245" width="1" height="4" fill="#000"/><rect x="1335" y="243" width="1" height="13" fill="#54ffff"/><rect x="1334" y="243" width="3" height="6" fill="#54ffff"/><rect x="1340" y="245" width="1" height="10" fill="#54ffff"/><rect x="1339" y="249" width="3" height="3" fill="#54ffff"/><rect x="1345" y="246" width="1" height="21" fill="#54ffff"/><rect x="1344" y="251" width="3" height="16" fill="#54ffff"/><rect x="1349" y="209" width="1" height="33" fill="#ff5454"/><rect x="1348" y="232" width="3" height="4" fill="#ff5454"/><rect x="1349" y="233" width="1" height="2" fill="#000"/><rect x="1354" y="219" width="1" height="20" fill="#54ffff"/><rect x="1353" y="223" width="3" height="6" fill="#54ffff"/><rect x="1359" y="198" width="1" height="34" fill="#ff5454"/><rect x="1358" y="212" width="3" height="12" fill="#ff5454"/><rect x="1359" y="213" width="1" height="10" fill="#000"/><rect x="1364" y="207" width="1" height="19" fill="#54ffff"/><rect x="1363" y="207" width="3" height="8" fill="#54ffff"/><rect x="1369" y="209" width="1" height="19" fill="#54ffff"/><rect x="1368" y="214" width="3" height="11" fill="#54ffff"/><rect x="1374" y="219" width="1" height="12" fill="#ff5454"/><rect x="1373" y="221" width="3" height="4" fill="#ff5454"/><rect x="1374" y="222" width="1" height="2" fill="#000"/><rect x="1378" y="172" width="1" height="42" fill="#ff5454"/><rect x="1377" y="200" width="3" height="5" fill="#ff5454"/><rect x="1378" y="201" width="1" height="3" fill="#000"/><rect x="1383" y="148" width="1" height="55" fill="#ff5454"/><rect x="1382" y="168" width="3" height="30" fill="#ff5454"/><rect x="1383" y="169" width="1" height="28" fill="#000"/><rect x="1388" y="121" width="1" height="75" fill="#ff5454"/><rect x="1387" y="157" width="3" height="38" fill="#ff5454"/><rect x="1388" y="158" width="1" height="36" fill="#000"/><rect x="1398" y="172" width="1" height="42" fill="#54ffff"/><rect x="1397" y="173" width="3" height="38" fill="#54ffff"/><rect x="1403" y="186" width="1" height="34" fill="#54ffff"/><rect x="1402" y="199" width="3" height="14" fill="#54ffff"/><rect x="1408" y="204" width="1" height="37" fill="#54ffff"/><rect x="1407" y="215" width="3" height="8" fill="#54ffff"/><rect x="1412" y="220" width="1" height="30" fill="#54ffff"/><rect x="1411" y="221" width="3" height="23" fill="#54ffff"/><rect x="1417" y="233" width="1" height="30" fill="#54ffff"/><rect x="1416" y="248" width="3" height="5" fill="#54ffff"/><rect x="1427" y="206" width="1" height="23" fill="#ff5454"/><rect x="1426" y="213" width="3" height="12" fill="#ff5454"/><rect x="1427" y="214" width="1" height="10" fill="#000"/><rect x="1432" y="213" width="1" height="22" fill="#54ffff"/><rect x="1431" y="219" width="3" height="5" fill="#54ffff"/><rect x="1437" y="215" width="1" height="24" fill="#54ffff"/><rect x="1436" y="224" width="3" height="6" fill="#54ffff"/><rect x="1442" y="212" width="1" height="27" fill="#ff5454"/><rect x="1441" y="218" width="3" height="6" fill="#ff5454"/><rect x="1442" y="219" width="1" height="4" fill="#000"/><rect x="1446" y="216" width="1" height="16" fill="#54ffff"/><rect x="1445" y="218" width="3" height="13" fill="#54ffff"/><rect x="1451" y="220" width="1" height="19" fill="#54ffff"/><rect x="1450" y="232" width="3" height="7" fill="#54ffff"/><rect x="1456" y="193" width="1" height="44" fill="#ff5454"/><rect x="1455" y="197" width="3" height="39" fill="#ff5454"/><rect x="1456" y="198" width="1" height="37" fill="#000"/><rect x="1461" y="174" width="1" height="24" fill="#54ffff"/><rect x="1460" y="181" width="3" height="5" fill="#54ffff"/><rect x="1466" y="145" width="1" height="57" fill="#54ffff"/><rect x="1465" y="185" width="3" height="7" fill="#54ffff"/><rect x="1471" y="156" width="1" height="43" fill="#ff5454"/><rect x="1470" y="172" width="3" height="12" fill="#ff5454"/><rect x="1471" y="173" width="1" height="10" fill="#000"/><rect x="1476" y="141" width="1" height="32" fill="#ff5454"/><rect x="1475" y="151" width="3" height="8" fill="#ff5454"/><rect x="1476" y="152" width="1" height="6" fill="#000"/><rect x="1480" y="95" width="1" height="62" fill="#ff5454"/><rect x="1479" y="118" width="3" height="36" fill="#ff5454"/><rect x="1480" y="119" width="1" height="34" fill="#000"/><rect x="1485" y="100" width="1" height="47" fill="#ff5454"/><rect x="1484" y="111" width="3" height="25" fill="#ff5454"/><rect x="1485" y="112" width="1" height="23" fill="#000"/><rect x="1490" y="19" width="1" height="77" fill="#54ffff"/><rect x="1489" y="86" width="3" height="5" fill="#54ffff"/><rect x="1500" y="107" width="1" height="26" fill="#ff5454"/><rect x="1499" y="126" width="3" height="3" fill="#ff5454"/><rect x="1500" y="127" width="1" height="1" fill="#000"/><rect x="1505" y="113" width="1" height="28" fill="#54ffff"/><rect x="1504" y="127" width="3" height="13" fill="#54ffff"/><rect x="1510" y="102" width="1" height="40" fill="#54ffff"/><rect x="1509" y="121" width="3" height="16" fill="#54ffff"/><rect x="1514" y="126" width="1" height="37" fill="#54ffff"/><rect x="1513" y="141" width="3" height="19" fill="#54ffff"/><rect x="1519" y="148" width="1" height="58" fill="#ff5454"/><rect x="1518" y="151" width="3" height="25" fill="#ff5454"/><rect x="1519" y="152" width="1" height="23" fill="#000"/><rect x="1524" y="144" width="1" height="47" fill="#54ffff"/><rect x="1523" y="147" width="3" height="41" fill="#54ffff"/><rect x="1529" y="166" width="1" height="30" fill="#ff5454"/><rect x="1528" y="167" width="3" height="21" fill="#ff5454"/><rect x="1529" y="168" width="1" height="19" fill="#000"/><rect x="1534" y="166" width="1" height="18" fill="#54ffff"/><rect x="1533" y="170" width="3" height="13" fill="#54ffff"/><rect x="1539" y="132" width="1" height="61" fill="#54ffff"/><rect x="1538" y="146" width="3" height="38" fill="#54ffff"/><rect x="1544" y="157" width="1" height="27" fill="#54ffff"/><rect x="1543" y="160" width="3" height="20" fill="#54ffff"/><rect x="1548" y="159" width="1" height="26" fill="#ff5454"/><rect x="1547" y="170" width="3" height="10" fill="#ff5454"/><rect x="1548" y="171" width="1" height="8" fill="#000"/><rect x="1553" y="172" width="1" height="13" fill="#54ffff"/><rect x="1552" y="174" width="3" height="10" fill="#54ffff"/><rect x="1558" y="184" width="1" height="29" fill="#54ffff"/><rect x="1557" y="185" width="3" height="20" fill="#54ffff"/><rect x="1568" y="113" width="1" height="49" fill="#ff5454"/><rect x="1567" y="128" width="3" height="25" fill="#ff5454"/><rect x="1568" y="129" width="1" height="23" fill="#000"/><rect x="1573" y="120" width="1" height="29" fill="#ff5454"/><rect x="1572" y="130" width="3" height="15" fill="#ff5454"/><rect x="1573" y="131" width="1" height="13" fill="#000"/><rect x="1578" y="125" width="1" height="19" fill="#ff5454"/><rect x="1577" y="127" width="3" height="15" fill="#ff5454"/><rect x="1578" y="128" width="1" height="13" fill="#000"/><rect x="1582" y="95" width="1" height="55" fill="#ff5454"/><rect x="1581" y="120" width="3" height="20" fill="#ff5454"/><rect x="1582" y="121" width="1" height="18" fill="#000"/><rect x="1587" y="44" width="1" height="82" fill="#ff5454"/><rect x="1586" y="52" width="3" height="72" fill="#ff5454"/><rect x="1587" y="53" width="1" height="70" fill="#000"/><rect x="1597" y="52" width="1" height="55" fill="#54ffff"/><rect x="1596" y="70" width="3" height="11" fill="#54ffff"/><rect x="1602" y="35" width="1" height="73" fill="#ff5454"/><rect x="1601" y="70" width="3" height="14" fill="#ff5454"/><rect x="1602" y="71" width="1" height="12" fill="#000"/><rect x="1607" y="23" width="1" height="101" fill="#ff5454"/><rect x="1606" y="66" width="3" height="8" fill="#ff5454"/><rect x="1607" y="67" width="1" height="6" fill="#000"/></g>
<g shape-rendering="crispEdges"><path fill="#00ff00" d="M0 398h1v1h-1zM1 398h1v2h-1zM2 399h1v2h-1zM3 400h1v2h-1zM4 401h1v2h-1zM5 402h1v2h-1zM6 403h1v1h-1zM7 403h1v1h-1zM8 403h1v1h-1zM9 403h1v1h-1zM10 403h1v2h-1zM11 404h1v1h-1zM12 404h1v1h-1zM13 404h1v2h-1zM14 405h1v1h-1zM15 405h1v1h-1zM34 401h1v1h-1zM35 401h1v1h-1zM36 401h1v1h-1zM37 401h1v1h-1zM38 401h1v1h-1zM39 401h1v1h-1zM68 374h1v1h-1zM69 373h1v2h-1zM70 373h1v1h-1zM71 373h1v1h-1zM72 373h1v1h-1zM73 373h1v1h-1zM74 373h1v1h-1zM75 373h1v1h-1zM76 373h1v1h-1zM77 373h1v1h-1zM78 373h1v1h-1zM79 373h1v1h-1zM80 373h1v2h-1zM81 374h1v1h-1zM82 374h1v2h-1zM87 375h1v1h-1zM88 375h1v2h-1zM89 376h1v1h-1zM90 377h1v1h-1zM91 377h1v2h-1zM92 378h1v1h-1zM93 379h1v2h-1zM94 380h1v2h-1zM95 382h1v1h-1zM96 383h1v2h-1zM97 384h1v2h-1zM98 386h1v1h-1zM99 387h1v1h-1zM100 388h1v1h-1zM101 389h1v2h-1zM102 390h1v2h-1zM107 392h1v1h-1zM108 392h1v2h-1zM109 393h1v1h-1zM110 394h1v1h-1zM111 394h1v2h-1zM112 395h1v1h-1zM126 386h1v1h-1zM127 385h1v1h-1zM128 384h1v1h-1zM129 383h1v1h-1zM130 382h1v1h-1zM131 381h1v1h-1zM132 381h1v1h-1zM133 381h1v2h-1zM134 382h1v1h-1zM135 383h1v1h-1zM136 383h1v1h-1zM141 381h1v1h-1zM142 381h1v1h-1zM143 381h1v1h-1zM144 381h1v1h-1zM145 380h1v1h-1zM146 380h1v1h-1zM147 381h1v2h-1zM148 382h1v2h-1zM149 384h1v1h-1zM150 385h1v2h-1zM151 386h1v2h-1zM152 388h1v1h-1zM153 389h1v1h-1zM154 390h1v2h-1zM155 391h1v2h-1zM156 392h1v1h-1zM157 393h1v1h-1zM158 393h1v1h-1zM159 393h1v2h-1zM160 394h1v1h-1zM161 394h1v1h-1zM162 394h1v1h-1zM163 394h1v1h-1zM164 394h1v1h-1zM165 394h1v1h-1zM166 395h1v1h-1zM167 396h1v1h-1zM168 397h1v1h-1zM169 398h1v1h-1zM170 399h1v1h-1zM171 400h1v1h-1zM172 401h1v1h-1zM173 402h1v2h-1zM174 403h1v2h-1zM175 405h1v1h-1zM176 406h1v1h-1zM177 406h1v2h-1zM178 407h1v2h-1zM179 408h1v1h-1zM180 409h1v1h-1zM181 410h1v1h-1zM182 411h1v1h-1zM183 412h1v1h-1zM184 413h1v1h-1zM185 414h1v2h-1zM186 415h1v2h-1zM187 417h1v1h-1zM188 418h1v2h-1zM189 419h1v2h-1zM190 420h1v2h-1zM191 421h1v2h-1zM192 422h1v2h-1zM193 423h1v2h-1zM194 424h1v2h-1zM195 425h1v2h-1zM196 426h1v2h-1zM197 427h1v2h-1zM198 428h1v2h-1zM199 429h1v2h-1zM200 430h1v1h-1zM201 431h1v1h-1zM202 432h1v1h-1zM203 433h1v1h-1zM204 434h1v1h-1zM205 435h1v1h-1zM206 435h1v1h-1zM207 436h1v1h-1zM208 436h1v1h-1zM209 437h1v1h-1zM214 438h1v1h-1zM215 438h1v1h-1zM216 438h1v1h-1zM217 438h1v1h-1zM218 438h1v1h-1zM243 416h1v1h-1zM244 415h1v1h-1zM245 414h1v1h-1zM246 413h1v2h-1zM247 412h1v2h-1zM248 411h1v2h-1zM249 411h1v2h-1zM250 412h1v1h-1zM251 412h1v2h-1zM252 413h1v1h-1zM253 413h1v2h-1zM254 414h1v2h-1zM255 415h1v1h-1zM256 416h1v1h-1zM257 416h1v2h-1zM258 417h1v1h-1zM259 417h1v1h-1zM260 418h1v1h-1zM261 418h1v1h-1zM262 418h1v1h-1zM263 418h1v2h-1zM264 419h1v1h-1zM265 420h1v1h-1zM266 420h1v2h-1zM267 421h1v1h-1zM268 422h1v1h-1zM269 423h1v1h-1zM270 424h1v1h-1zM271 425h1v1h-1zM272 426h1v1h-1zM273 427h1v2h-1zM274 428h1v2h-1zM275 429h1v2h-1zM276 430h1v2h-1zM277 432h1v1h-1zM278 433h1v1h-1zM279 434h1v1h-1zM280 435h1v1h-1zM281 436h1v2h-1zM282 437h1v1h-1zM283 437h1v1h-1zM284 437h1v1h-1zM285 437h1v1h-1zM286 438h1v1h-1zM287 438h1v1h-1zM288 439h1v1h-1zM289 440h1v1h-1zM290 440h1v2h-1zM291 441h1v2h-1zM292 442h1v1h-1zM293 443h1v1h-1zM294 443h1v1h-1zM295 444h1v1h-1zM296 444h1v2h-1zM330 355h1v1h-1zM331 352h1v3h-1zM332 350h1v2h-1zM333 348h1v2h-1zM334 346h1v2h-1zM335 344h1v2h-1zM336 343h1v2h-1zM337 343h1v1h-1zM338 342h1v1h-1zM339 341h1v2h-1zM340 341h1v1h-1zM341 340h1v1h-1zM342 339h1v1h-1zM343 338h1v2h-1zM344 338h1v1h-1zM345 337h1v1h-1zM346 338h1v3h-1zM347 341h1v2h-1zM348 343h1v2h-1zM349 345h1v4h-1zM350 349h1v4h-1zM351 353h1v4h-1zM352 357h1v4h-1zM353 361h1v4h-1zM354 365h1v3h-1zM355 368h1v2h-1zM356 369h1v2h-1zM357 371h1v1h-1zM358 372h1v2h-1zM359 373h1v2h-1zM379 358h1v1h-1zM380 357h1v2h-1zM381 357h1v1h-1zM382 356h1v1h-1zM383 355h1v1h-1zM384 355h1v1h-1zM385 354h1v1h-1zM386 354h1v1h-1zM387 354h1v1h-1zM388 353h1v1h-1zM389 353h1v1h-1zM390 354h1v1h-1zM391 354h1v1h-1zM392 354h1v1h-1zM393 354h1v2h-1zM394 355h1v2h-1zM395 357h1v2h-1zM396 358h1v2h-1zM397 360h1v2h-1zM398 362h1v1h-1zM399 363h1v2h-1zM400 365h1v1h-1zM401 366h1v2h-1zM402 368h1v1h-1zM403 369h1v2h-1zM404 370h1v2h-1zM405 371h1v2h-1zM406 372h1v2h-1zM407 373h1v2h-1zM408 374h1v2h-1zM409 375h1v2h-1zM410 376h1v2h-1zM411 378h1v1h-1zM412 379h1v1h-1zM413 380h1v2h-1zM451 339h1v1h-1zM452 339h1v1h-1zM453 339h1v1h-1zM454 339h1v1h-1zM455 339h1v1h-1zM456 339h1v1h-1zM457 339h1v1h-1zM458 340h1v1h-1zM459 340h1v2h-1zM460 341h1v1h-1zM461 342h1v1h-1zM462 343h1v1h-1zM463 344h1v2h-1zM464 345h1v2h-1zM465 346h1v2h-1zM466 348h1v1h-1zM467 349h1v1h-1zM468 350h1v1h-1zM469 351h1v2h-1zM470 352h1v2h-1zM471 353h1v2h-1zM480 359h1v1h-1zM481 359h1v1h-1zM482 360h1v1h-1zM483 360h1v2h-1zM484 361h1v1h-1zM485 362h1v1h-1zM490 360h1v1h-1zM491 359h1v1h-1zM492 359h1v1h-1zM493 358h1v1h-1zM494 358h1v1h-1zM495 357h1v1h-1zM500 357h1v1h-1zM501 357h1v2h-1zM502 358h1v2h-1zM503 359h1v1h-1zM504 360h1v1h-1zM505 361h1v1h-1zM553 250h1v1h-1zM554 248h1v2h-1zM555 247h1v2h-1zM556 246h1v1h-1zM557 244h1v2h-1zM558 243h1v2h-1zM559 242h1v1h-1zM560 241h1v1h-1zM561 240h1v1h-1zM562 238h1v2h-1zM563 237h1v2h-1zM564 238h1v2h-1zM565 240h1v2h-1zM566 241h1v2h-1zM567 243h1v2h-1zM568 245h1v2h-1zM569 247h1v4h-1zM570 251h1v3h-1zM571 254h1v4h-1zM572 258h1v4h-1zM573 262h1v3h-1zM574 265h1v3h-1zM575 268h1v4h-1zM576 272h1v3h-1zM577 275h1v3h-1zM578 278h1v3h-1zM582 290h1v1h-1zM583 291h1v2h-1zM584 293h1v3h-1zM585 296h1v2h-1zM586 298h1v2h-1zM587 300h1v2h-1zM588 302h1v1h-1zM589 303h1v1h-1zM590 304h1v1h-1zM591 305h1v1h-1zM592 306h1v1h-1zM593 307h1v1h-1zM594 307h1v1h-1zM595 308h1v1h-1zM596 308h1v1h-1zM597 308h1v2h-1zM607 308h1v1h-1zM608 308h1v2h-1zM609 309h1v2h-1zM610 310h1v2h-1zM611 311h1v2h-1zM612 312h1v2h-1zM613 313h1v2h-1zM614 314h1v2h-1zM615 315h1v1h-1zM616 316h1v1h-1zM617 317h1v2h-1zM618 318h1v2h-1zM619 320h1v1h-1zM620 321h1v2h-1zM621 322h1v2h-1zM622 324h1v2h-1zM623 326h1v1h-1zM624 327h1v2h-1zM625 329h1v2h-1zM626 331h1v2h-1zM627 333h1v2h-1zM628 335h1v3h-1zM629 338h1v3h-1zM630 341h1v2h-1zM631 343h1v3h-1zM632 346h1v2h-1zM633 348h1v2h-1zM634 350h1v2h-1zM635 352h1v2h-1zM636 354h1v2h-1zM699 267h1v1h-1zM700 266h1v1h-1zM701 265h1v2h-1zM702 264h1v2h-1zM703 264h1v1h-1zM704 263h1v1h-1zM718 251h1v1h-1zM719 251h1v1h-1zM720 251h1v1h-1zM721 251h1v1h-1zM722 251h1v1h-1zM723 251h1v1h-1zM724 252h1v1h-1zM725 252h1v2h-1zM726 253h1v2h-1zM727 254h1v1h-1zM728 255h1v1h-1zM729 255h1v1h-1zM730 254h1v1h-1zM731 254h1v1h-1zM732 253h1v1h-1zM733 253h1v1h-1zM734 253h1v1h-1zM735 254h1v1h-1zM736 255h1v1h-1zM737 255h1v2h-1zM738 256h1v2h-1zM739 257h1v2h-1zM740 259h1v2h-1zM741 261h1v1h-1zM742 262h1v2h-1zM743 264h1v2h-1zM786 104h1v1h-1zM787 104h1v1h-1zM788 105h1v1h-1zM789 105h1v2h-1zM790 106h1v1h-1zM791 107h1v1h-1zM792 108h1v2h-1zM793 110h1v2h-1zM794 112h1v2h-1zM795 114h1v2h-1zM796 116h1v2h-1zM797 117h1v2h-1zM798 119h1v1h-1zM799 120h1v2h-1zM800 122h1v1h-1zM801 123h1v2h-1zM802 125h1v3h-1zM803 128h1v3h-1zM804 131h1v3h-1zM805 134h1v3h-1zM806 137h1v3h-1zM825 129h1v1h-1zM826 127h1v2h-1zM827 126h1v2h-1zM828 125h1v1h-1zM829 123h1v2h-1zM830 122h1v2h-1zM831 123h1v1h-1zM832 124h1v1h-1zM833 124h1v2h-1zM834 125h1v2h-1zM835 126h1v2h-1zM836 127h1v1h-1zM837 127h1v1h-1zM838 127h1v1h-1zM839 128h1v1h-1zM840 128h1v1h-1zM859 123h1v1h-1zM860 122h1v2h-1zM861 122h1v1h-1zM862 121h1v1h-1zM863 120h1v2h-1zM864 120h1v1h-1zM865 120h1v2h-1zM866 122h1v2h-1zM867 123h1v2h-1zM868 125h1v2h-1zM869 126h1v2h-1zM870 128h1v3h-1zM871 131h1v3h-1zM872 134h1v3h-1zM873 137h1v3h-1zM874 140h1v2h-1zM875 142h1v3h-1zM876 145h1v3h-1zM877 148h1v2h-1zM878 150h1v3h-1zM879 153h1v2h-1zM883 167h1v1h-1zM884 168h1v2h-1zM885 170h1v3h-1zM886 173h1v2h-1zM887 175h1v2h-1zM888 177h1v2h-1zM889 179h1v2h-1zM890 181h1v2h-1zM891 183h1v2h-1zM892 185h1v2h-1zM893 187h1v2h-1zM894 189h1v2h-1zM895 190h1v2h-1zM896 192h1v1h-1zM897 193h1v1h-1zM898 194h1v2h-1zM899 195h1v1h-1zM900 195h1v1h-1zM901 195h1v1h-1zM902 195h1v1h-1zM903 195h1v1h-1zM904 196h1v1h-1zM905 196h1v2h-1zM906 197h1v1h-1zM907 198h1v1h-1zM908 198h1v4h-1zM909 202h1v6h-1zM910 208h1v6h-1zM911 214h1v6h-1zM912 220h1v7h-1zM913 227h1v6h-1zM914 233h1v6h-1zM915 239h1v6h-1zM916 245h1v6h-1zM917 251h1v4h-1zM918 255h1v2h-1zM919 257h1v3h-1zM920 260h1v2h-1zM921 262h1v2h-1zM922 264h1v2h-1zM923 266h1v3h-1zM924 269h1v2h-1zM925 271h1v2h-1zM926 273h1v3h-1zM927 276h1v2h-1zM942 284h1v1h-1zM943 281h1v3h-1zM944 279h1v2h-1zM945 277h1v2h-1zM946 275h1v2h-1zM947 275h1v1h-1zM948 275h1v1h-1zM949 274h1v2h-1zM950 274h1v1h-1zM951 274h1v1h-1zM952 275h1v1h-1zM953 275h1v1h-1zM954 275h1v1h-1zM955 276h1v1h-1zM956 276h1v1h-1zM976 276h1v1h-1zM977 276h1v1h-1zM978 276h1v1h-1zM979 275h1v2h-1zM980 275h1v1h-1zM981 275h1v1h-1zM982 275h1v1h-1zM983 274h1v2h-1zM984 274h1v1h-1zM985 274h1v1h-1zM1010 252h1v1h-1zM1011 250h1v2h-1zM1012 249h1v2h-1zM1013 247h1v2h-1zM1014 246h1v1h-1zM1019 238h1v1h-1zM1020 237h1v1h-1zM1021 236h1v2h-1zM1022 236h1v1h-1zM1023 235h1v2h-1zM1024 235h1v1h-1zM1025 235h1v1h-1zM1026 235h1v1h-1zM1027 235h1v2h-1zM1028 236h1v1h-1zM1029 236h1v1h-1zM1030 237h1v1h-1zM1031 238h1v1h-1zM1032 239h1v1h-1zM1033 240h1v1h-1zM1034 241h1v2h-1zM1035 242h1v2h-1zM1036 243h1v2h-1zM1037 245h1v1h-1zM1038 246h1v2h-1zM1039 247h1v2h-1zM1040 248h1v2h-1zM1041 249h1v2h-1zM1042 250h1v2h-1zM1043 251h1v2h-1zM1044 252h1v2h-1zM1045 254h1v2h-1zM1046 256h1v2h-1zM1047 258h1v2h-1zM1048 260h1v2h-1zM1049 262h1v2h-1zM1050 263h1v2h-1zM1051 265h1v2h-1zM1052 267h1v1h-1zM1053 268h1v2h-1zM1054 269h1v2h-1zM1055 270h1v2h-1zM1056 271h1v2h-1zM1057 272h1v2h-1zM1058 273h1v2h-1zM1073 274h1v1h-1zM1074 274h1v1h-1zM1075 274h1v1h-1zM1076 275h1v1h-1zM1077 275h1v1h-1zM1078 275h1v1h-1zM1087 270h1v1h-1zM1088 270h1v1h-1zM1089 270h1v1h-1zM1090 270h1v1h-1zM1091 270h1v1h-1zM1092 270h1v2h-1zM1093 271h1v1h-1zM1094 271h1v1h-1zM1095 271h1v1h-1zM1096 271h1v1h-1zM1097 271h1v1h-1zM1102 268h1v1h-1zM1103 268h1v1h-1zM1104 268h1v1h-1zM1105 268h1v1h-1zM1106 268h1v1h-1zM1107 268h1v1h-1zM1108 268h1v1h-1zM1109 268h1v1h-1zM1110 268h1v1h-1zM1111 268h1v2h-1zM1112 269h1v1h-1zM1113 269h1v1h-1zM1114 270h1v1h-1zM1115 270h1v2h-1zM1116 271h1v1h-1zM1117 271h1v1h-1zM1118 271h1v1h-1zM1119 271h1v1h-1zM1120 271h1v1h-1zM1121 271h1v1h-1zM1122 271h1v1h-1zM1123 271h1v1h-1zM1124 271h1v1h-1zM1125 271h1v1h-1zM1126 271h1v1h-1zM1127 272h1v1h-1zM1128 273h1v2h-1zM1129 274h1v2h-1zM1130 276h1v1h-1zM1131 277h1v2h-1zM1132 278h1v1h-1zM1133 278h1v1h-1zM1134 278h1v1h-1zM1135 278h1v1h-1zM1136 278h1v1h-1zM1141 279h1v1h-1zM1142 279h1v1h-1zM1143 279h1v1h-1zM1144 279h1v2h-1zM1145 280h1v1h-1zM1146 280h1v1h-1zM1147 280h1v2h-1zM1148 281h1v1h-1zM1149 281h1v1h-1zM1150 282h1v1h-1zM1151 282h1v2h-1zM1152 284h1v1h-1zM1153 285h1v2h-1zM1154 286h1v2h-1zM1155 288h1v1h-1zM1156 289h1v1h-1zM1157 289h1v2h-1zM1158 290h1v2h-1zM1159 291h1v1h-1zM1160 292h1v1h-1zM1189 286h1v1h-1zM1190 286h1v1h-1zM1191 286h1v2h-1zM1192 287h1v1h-1zM1193 287h1v2h-1zM1194 288h1v1h-1zM1195 288h1v1h-1zM1196 289h1v1h-1zM1197 289h1v1h-1zM1198 289h1v1h-1zM1199 289h1v1h-1zM1200 290h1v1h-1zM1201 290h1v1h-1zM1202 291h1v1h-1zM1203 291h1v1h-1zM1204 291h1v2h-1zM1205 292h1v1h-1zM1206 293h1v1h-1zM1207 294h1v1h-1zM1208 294h1v2h-1zM1209 295h1v2h-1zM1210 296h1v2h-1zM1211 297h1v1h-1zM1212 298h1v1h-1zM1213 299h1v1h-1zM1218 302h1v1h-1zM1219 302h1v1h-1zM1220 302h1v2h-1zM1221 303h1v1h-1zM1222 303h1v1h-1zM1223 303h1v2h-1zM1233 304h1v1h-1zM1234 304h1v1h-1zM1235 303h1v2h-1zM1236 303h1v1h-1zM1237 303h1v1h-1zM1238 302h1v2h-1zM1272 256h1v1h-1zM1273 255h1v1h-1zM1274 254h1v2h-1zM1275 254h1v1h-1zM1276 253h1v1h-1zM1277 252h1v2h-1zM1278 251h1v2h-1zM1279 251h1v1h-1zM1280 250h1v1h-1zM1281 249h1v1h-1zM1282 249h1v1h-1zM1283 249h1v1h-1zM1284 249h1v1h-1zM1285 248h1v1h-1zM1286 248h1v1h-1zM1287 249h1v1h-1zM1288 249h1v2h-1zM1289 250h1v2h-1zM1290 251h1v1h-1zM1291 252h1v1h-1zM1292 253h1v2h-1zM1293 255h1v2h-1zM1294 257h1v2h-1zM1295 259h1v2h-1zM1296 261h1v2h-1zM1297 262h1v2h-1zM1298 263h1v2h-1zM1299 265h1v1h-1zM1300 266h1v1h-1zM1301 267h1v2h-1zM1335 249h1v1h-1zM1336 249h1v1h-1zM1337 248h1v2h-1zM1338 248h1v1h-1zM1339 248h1v1h-1zM1340 248h1v1h-1zM1341 248h1v1h-1zM1342 249h1v1h-1zM1343 249h1v2h-1zM1344 250h1v1h-1zM1345 251h1v1h-1zM1393 191h1v1h-1zM1394 190h1v1h-1zM1395 190h1v1h-1zM1396 189h1v2h-1zM1397 189h1v1h-1zM1398 188h1v2h-1zM1399 188h1v1h-1zM1400 188h1v1h-1zM1401 188h1v1h-1zM1402 187h1v1h-1zM1403 187h1v1h-1zM1404 187h1v2h-1zM1405 188h1v2h-1zM1406 189h1v1h-1zM1407 190h1v1h-1zM1408 190h1v2h-1zM1409 192h1v4h-1zM1410 196h1v3h-1zM1411 199h1v3h-1zM1412 202h1v3h-1zM1413 205h1v3h-1zM1414 208h1v4h-1zM1415 212h1v3h-1zM1416 215h1v3h-1zM1417 218h1v3h-1zM1418 220h1v2h-1zM1419 222h1v2h-1zM1420 224h1v2h-1zM1421 226h1v2h-1zM1422 228h1v2h-1zM1442 228h1v1h-1zM1443 227h1v1h-1zM1444 226h1v1h-1zM1445 225h1v1h-1zM1446 224h1v1h-1zM1447 224h1v1h-1zM1448 224h1v2h-1zM1449 225h1v1h-1zM1450 225h1v1h-1zM1451 225h1v1h-1zM1495 127h1v1h-1zM1496 125h1v2h-1zM1497 124h1v2h-1zM1498 122h1v2h-1zM1499 121h1v1h-1zM1500 119h1v2h-1zM1501 119h1v1h-1zM1502 118h1v2h-1zM1503 118h1v1h-1zM1504 118h1v1h-1zM1505 117h1v2h-1zM1506 118h1v1h-1zM1507 118h1v2h-1zM1508 119h1v1h-1zM1509 120h1v1h-1zM1510 120h1v2h-1zM1511 122h1v2h-1zM1512 124h1v2h-1zM1513 126h1v2h-1zM1514 128h1v2h-1zM1515 130h1v2h-1zM1516 132h1v2h-1zM1517 134h1v2h-1zM1518 136h1v2h-1zM1519 138h1v2h-1zM1520 140h1v2h-1zM1521 142h1v2h-1zM1522 144h1v2h-1zM1523 146h1v3h-1zM1524 149h1v2h-1zM1525 151h1v1h-1zM1526 152h1v2h-1zM1527 153h1v2h-1zM1528 155h1v1h-1zM1529 156h1v2h-1zM1530 157h1v2h-1zM1531 159h1v2h-1zM1532 160h1v2h-1zM1533 162h1v1h-1zM1534 163h1v2h-1zM1535 165h1v1h-1zM1536 166h1v2h-1zM1537 168h1v2h-1zM1538 169h1v2h-1zM1539 171h1v2h-1zM1540 172h1v1h-1zM1541 173h1v1h-1zM1542 173h1v2h-1zM1543 174h1v1h-1zM1544 175h1v1h-1zM1548 178h1v1h-1zM1549 178h1v1h-1zM1550 178h1v1h-1zM1551 178h1v1h-1zM1552 178h1v1h-1zM1553 178h1v1h-1zM1554 178h1v2h-1zM1555 179h1v2h-1zM1556 181h1v1h-1zM1557 182h1v2h-1zM1558 183h1v2h-1z"/><path fill="#ff0000" d="M15 405h1v1h-1zM16 405h1v1h-1zM17 405h1v1h-1zM18 405h1v1h-1zM19 405h1v1h-1zM20 404h1v1h-1zM21 404h1v1h-1zM22 404h1v1h-1zM23 404h1v1h-1zM24 403h1v1h-1zM25 403h1v1h-1zM26 403h1v1h-1zM27 404h1v1h-1zM28 404h1v1h-1zM29 404h1v1h-1zM30 403h1v1h-1zM31 402h1v2h-1zM32 402h1v1h-1zM33 401h1v2h-1zM34 401h1v1h-1zM39 401h1v1h-1zM40 400h1v1h-1zM41 399h1v1h-1zM42 398h1v2h-1zM43 397h1v2h-1zM44 397h1v1h-1zM45 396h1v1h-1zM46 395h1v1h-1zM47 394h1v1h-1zM48 393h1v1h-1zM49 392h1v1h-1zM50 391h1v1h-1zM51 390h1v1h-1zM52 389h1v1h-1zM53 388h1v1h-1zM54 387h1v1h-1zM55 386h1v1h-1zM56 385h1v1h-1zM57 384h1v1h-1zM58 383h1v1h-1zM59 382h1v2h-1zM60 382h1v1h-1zM61 381h1v1h-1zM62 380h1v2h-1zM63 380h1v1h-1zM64 378h1v2h-1zM65 377h1v2h-1zM66 376h1v2h-1zM67 375h1v1h-1zM68 374h1v1h-1zM82 375h1v1h-1zM83 375h1v1h-1zM84 375h1v1h-1zM85 375h1v1h-1zM86 375h1v1h-1zM87 375h1v1h-1zM102 391h1v1h-1zM103 391h1v1h-1zM104 391h1v1h-1zM105 391h1v1h-1zM106 392h1v1h-1zM107 392h1v1h-1zM112 395h1v1h-1zM113 395h1v2h-1zM114 396h1v1h-1zM115 396h1v1h-1zM116 396h1v2h-1zM117 396h1v1h-1zM118 395h1v2h-1zM119 394h1v2h-1zM120 394h1v1h-1zM121 393h1v1h-1zM122 392h1v1h-1zM123 390h1v2h-1zM124 389h1v1h-1zM125 387h1v2h-1zM126 386h1v2h-1zM136 383h1v1h-1zM137 383h1v1h-1zM138 382h1v2h-1zM139 382h1v1h-1zM140 381h1v2h-1zM141 381h1v1h-1zM209 437h1v1h-1zM210 437h1v1h-1zM211 437h1v1h-1zM212 437h1v2h-1zM213 438h1v1h-1zM214 438h1v1h-1zM218 438h1v1h-1zM219 437h1v2h-1zM220 437h1v1h-1zM221 436h1v1h-1zM222 435h1v2h-1zM223 435h1v1h-1zM224 434h1v1h-1zM225 433h1v1h-1zM226 432h1v1h-1zM227 431h1v1h-1zM228 430h1v1h-1zM229 429h1v1h-1zM230 428h1v1h-1zM231 427h1v1h-1zM232 426h1v1h-1zM233 425h1v1h-1zM234 424h1v1h-1zM235 423h1v1h-1zM236 422h1v1h-1zM237 421h1v1h-1zM238 420h1v1h-1zM239 419h1v1h-1zM240 418h1v2h-1zM241 417h1v2h-1zM242 417h1v1h-1zM243 416h1v1h-1zM296 445h1v1h-1zM297 444h1v1h-1zM298 444h1v1h-1zM299 444h1v1h-1zM300 443h1v1h-1zM301 443h1v1h-1zM302 442h1v1h-1zM303 441h1v2h-1zM304 441h1v1h-1zM305 440h1v1h-1zM306 439h1v2h-1zM307 438h1v2h-1zM308 436h1v2h-1zM309 435h1v2h-1zM310 433h1v2h-1zM311 432h1v2h-1zM312 429h1v3h-1zM313 427h1v2h-1zM314 425h1v2h-1zM315 421h1v4h-1zM316 417h1v4h-1zM317 413h1v4h-1zM318 409h1v4h-1zM319 404h1v5h-1zM320 399h1v5h-1zM321 393h1v6h-1zM322 387h1v6h-1zM323 381h1v6h-1zM324 374h1v7h-1zM325 370h1v4h-1zM326 367h1v3h-1zM327 363h1v4h-1zM328 360h1v3h-1zM329 357h1v3h-1zM330 355h1v2h-1zM359 374h1v1h-1zM360 374h1v1h-1zM361 373h1v2h-1zM362 373h1v1h-1zM363 373h1v1h-1zM364 373h1v1h-1zM365 371h1v2h-1zM366 370h1v1h-1zM367 368h1v2h-1zM368 366h1v2h-1zM369 365h1v1h-1zM370 364h1v1h-1zM371 364h1v1h-1zM372 363h1v1h-1zM373 363h1v1h-1zM374 362h1v1h-1zM375 361h1v2h-1zM376 360h1v2h-1zM377 360h1v1h-1zM378 359h1v1h-1zM379 358h1v2h-1zM413 381h1v1h-1zM414 381h1v1h-1zM415 381h1v1h-1zM416 381h1v1h-1zM417 382h1v1h-1zM418 381h1v1h-1zM419 380h1v2h-1zM420 380h1v1h-1zM421 379h1v2h-1zM422 379h1v1h-1zM423 378h1v1h-1zM424 377h1v1h-1zM425 376h1v1h-1zM426 375h1v2h-1zM427 374h1v2h-1zM428 373h1v2h-1zM429 372h1v1h-1zM430 370h1v2h-1zM431 369h1v2h-1zM432 368h1v1h-1zM433 366h1v2h-1zM434 365h1v2h-1zM435 364h1v2h-1zM436 363h1v2h-1zM437 362h1v1h-1zM438 359h1v3h-1zM439 357h1v2h-1zM440 354h1v3h-1zM441 351h1v3h-1zM442 349h1v2h-1zM443 348h1v1h-1zM444 346h1v2h-1zM445 345h1v1h-1zM446 343h1v2h-1zM447 342h1v1h-1zM448 341h1v1h-1zM449 340h1v1h-1zM450 339h1v2h-1zM451 339h1v1h-1zM471 354h1v1h-1zM472 354h1v1h-1zM473 354h1v2h-1zM474 355h1v1h-1zM475 355h1v1h-1zM476 356h1v1h-1zM477 356h1v2h-1zM478 357h1v1h-1zM479 358h1v1h-1zM480 358h1v2h-1zM485 362h1v1h-1zM486 362h1v1h-1zM487 361h1v1h-1zM488 361h1v1h-1zM489 360h1v1h-1zM490 360h1v1h-1zM495 357h1v1h-1zM496 357h1v1h-1zM497 357h1v1h-1zM498 357h1v1h-1zM499 357h1v1h-1zM500 357h1v1h-1zM505 361h1v1h-1zM506 361h1v1h-1zM507 361h1v1h-1zM508 361h1v1h-1zM509 361h1v1h-1zM510 361h1v1h-1zM511 360h1v1h-1zM512 358h1v2h-1zM513 356h1v2h-1zM514 355h1v1h-1zM515 354h1v1h-1zM516 353h1v1h-1zM517 351h1v2h-1zM518 350h1v2h-1zM519 349h1v2h-1zM520 348h1v2h-1zM521 347h1v1h-1zM522 345h1v2h-1zM523 344h1v1h-1zM524 342h1v2h-1zM525 340h1v2h-1zM526 339h1v2h-1zM527 337h1v2h-1zM528 335h1v2h-1zM529 333h1v2h-1zM530 331h1v2h-1zM531 330h1v1h-1zM532 328h1v2h-1zM533 326h1v2h-1zM534 324h1v2h-1zM535 321h1v3h-1zM536 318h1v3h-1zM537 316h1v2h-1zM538 313h1v3h-1zM539 309h1v4h-1zM540 305h1v4h-1zM541 300h1v5h-1zM542 295h1v5h-1zM543 291h1v4h-1zM544 286h1v5h-1zM545 281h1v5h-1zM546 276h1v5h-1zM547 271h1v5h-1zM548 266h1v5h-1zM549 263h1v3h-1zM550 259h1v4h-1zM551 256h1v3h-1zM552 252h1v4h-1zM553 250h1v2h-1zM578 280h1v1h-1zM579 281h1v3h-1zM580 284h1v2h-1zM581 286h1v3h-1zM582 289h1v2h-1zM597 309h1v1h-1zM598 308h1v2h-1zM599 308h1v1h-1zM600 308h1v1h-1zM601 308h1v1h-1zM602 308h1v1h-1zM603 308h1v1h-1zM604 308h1v1h-1zM605 308h1v1h-1zM606 308h1v1h-1zM607 308h1v1h-1zM636 355h1v1h-1zM637 355h1v2h-1zM638 357h1v1h-1zM639 358h1v1h-1zM640 359h1v2h-1zM641 360h1v2h-1zM642 361h1v1h-1zM643 361h1v1h-1zM644 361h1v1h-1zM645 360h1v1h-1zM646 360h1v1h-1zM647 359h1v2h-1zM648 359h1v1h-1zM649 358h1v1h-1zM650 357h1v1h-1zM651 356h1v1h-1zM652 354h1v2h-1zM653 353h1v1h-1zM654 351h1v2h-1zM655 349h1v2h-1zM656 346h1v3h-1zM657 343h1v3h-1zM658 341h1v2h-1zM659 338h1v3h-1zM660 335h1v3h-1zM661 333h1v2h-1zM662 331h1v2h-1zM663 329h1v2h-1zM664 327h1v2h-1zM665 324h1v3h-1zM666 322h1v2h-1zM667 320h1v2h-1zM668 318h1v2h-1zM669 316h1v2h-1zM670 314h1v2h-1zM671 312h1v2h-1zM672 310h1v2h-1zM673 309h1v1h-1zM674 307h1v2h-1zM675 305h1v2h-1zM676 304h1v2h-1zM677 303h1v1h-1zM678 302h1v1h-1zM679 301h1v1h-1zM680 299h1v2h-1zM681 297h1v2h-1zM682 295h1v2h-1zM683 293h1v2h-1zM684 291h1v2h-1zM685 289h1v2h-1zM686 287h1v2h-1zM687 285h1v2h-1zM688 283h1v2h-1zM689 282h1v1h-1zM690 280h1v2h-1zM691 279h1v1h-1zM692 277h1v2h-1zM693 276h1v1h-1zM694 274h1v2h-1zM695 273h1v1h-1zM696 271h1v2h-1zM697 270h1v1h-1zM698 268h1v2h-1zM699 267h1v1h-1zM704 263h1v1h-1zM705 261h1v2h-1zM706 260h1v2h-1zM707 258h1v2h-1zM708 257h1v2h-1zM709 256h1v1h-1zM710 254h1v2h-1zM711 252h1v2h-1zM712 250h1v2h-1zM713 249h1v2h-1zM714 249h1v1h-1zM715 249h1v1h-1zM716 250h1v1h-1zM717 250h1v1h-1zM718 250h1v2h-1zM743 265h1v1h-1zM744 265h1v1h-1zM745 265h1v1h-1zM746 265h1v1h-1zM747 265h1v2h-1zM748 265h1v1h-1zM749 265h1v1h-1zM750 265h1v1h-1zM751 265h1v1h-1zM752 265h1v1h-1zM753 263h1v2h-1zM754 261h1v2h-1zM755 259h1v2h-1zM756 257h1v2h-1zM757 254h1v3h-1zM758 251h1v3h-1zM759 247h1v4h-1zM760 244h1v3h-1zM761 241h1v3h-1zM762 236h1v5h-1zM763 231h1v5h-1zM764 227h1v4h-1zM765 222h1v5h-1zM766 217h1v5h-1zM767 212h1v5h-1zM768 206h1v6h-1zM769 201h1v5h-1zM770 196h1v5h-1zM771 190h1v6h-1zM772 185h1v5h-1zM773 178h1v7h-1zM774 172h1v6h-1zM775 165h1v7h-1zM776 159h1v6h-1zM777 151h1v8h-1zM778 144h1v7h-1zM779 136h1v8h-1zM780 128h1v8h-1zM781 122h1v6h-1zM782 118h1v4h-1zM783 114h1v4h-1zM784 110h1v4h-1zM785 107h1v3h-1zM786 104h1v3h-1zM806 139h1v1h-1zM807 140h1v2h-1zM808 142h1v2h-1zM809 144h1v2h-1zM810 146h1v2h-1zM811 148h1v2h-1zM812 149h1v2h-1zM813 150h1v1h-1zM814 151h1v1h-1zM815 151h1v2h-1zM816 149h1v3h-1zM817 147h1v2h-1zM818 144h1v3h-1zM819 142h1v2h-1zM820 140h1v2h-1zM821 137h1v3h-1zM822 135h1v2h-1zM823 133h1v2h-1zM824 131h1v2h-1zM825 129h1v2h-1zM840 128h1v1h-1zM841 128h1v1h-1zM842 128h1v1h-1zM843 128h1v1h-1zM844 128h1v1h-1zM845 128h1v2h-1zM846 129h1v1h-1zM847 129h1v1h-1zM848 129h1v1h-1zM849 130h1v1h-1zM850 129h1v1h-1zM851 127h1v2h-1zM852 126h1v2h-1zM853 125h1v2h-1zM854 124h1v2h-1zM855 124h1v1h-1zM856 124h1v1h-1zM857 123h1v2h-1zM858 123h1v1h-1zM859 123h1v1h-1zM879 154h1v2h-1zM880 156h1v3h-1zM881 159h1v3h-1zM882 162h1v4h-1zM883 166h1v2h-1zM927 277h1v1h-1zM928 278h1v2h-1zM929 280h1v3h-1zM930 283h1v2h-1zM931 285h1v2h-1zM932 287h1v3h-1zM933 290h1v2h-1zM934 292h1v2h-1zM935 294h1v2h-1zM936 296h1v2h-1zM937 298h1v2h-1zM938 296h1v3h-1zM939 293h1v3h-1zM940 289h1v4h-1zM941 286h1v3h-1zM942 284h1v2h-1zM956 276h1v1h-1zM957 276h1v1h-1zM958 276h1v1h-1zM959 276h1v1h-1zM960 276h1v1h-1zM961 276h1v1h-1zM962 276h1v1h-1zM963 277h1v1h-1zM964 277h1v1h-1zM965 277h1v1h-1zM966 278h1v1h-1zM967 278h1v1h-1zM968 278h1v1h-1zM969 278h1v1h-1zM970 278h1v1h-1zM971 278h1v1h-1zM972 277h1v1h-1zM973 277h1v1h-1zM974 277h1v1h-1zM975 277h1v1h-1zM976 276h1v1h-1zM985 274h1v1h-1zM986 274h1v1h-1zM987 274h1v1h-1zM988 274h1v1h-1zM989 274h1v1h-1zM990 274h1v2h-1zM991 274h1v1h-1zM992 273h1v1h-1zM993 272h1v1h-1zM994 271h1v2h-1zM995 270h1v2h-1zM996 270h1v1h-1zM997 269h1v1h-1zM998 269h1v1h-1zM999 268h1v1h-1zM1000 268h1v1h-1zM1001 266h1v2h-1zM1002 265h1v2h-1zM1003 264h1v2h-1zM1004 263h1v1h-1zM1005 262h1v1h-1zM1006 260h1v2h-1zM1007 258h1v2h-1zM1008 256h1v2h-1zM1009 254h1v2h-1zM1010 252h1v2h-1zM1014 246h1v1h-1zM1015 244h1v2h-1zM1016 242h1v2h-1zM1017 241h1v2h-1zM1018 239h1v2h-1zM1019 238h1v1h-1zM1058 274h1v1h-1zM1059 274h1v1h-1zM1060 274h1v1h-1zM1061 274h1v1h-1zM1062 274h1v1h-1zM1063 274h1v2h-1zM1064 275h1v1h-1zM1065 275h1v1h-1zM1066 275h1v1h-1zM1067 275h1v2h-1zM1068 276h1v1h-1zM1069 276h1v1h-1zM1070 275h1v1h-1zM1071 275h1v1h-1zM1072 275h1v1h-1zM1073 274h1v1h-1zM1078 275h1v1h-1zM1079 274h1v2h-1zM1080 274h1v1h-1zM1081 273h1v1h-1zM1082 273h1v1h-1zM1083 272h1v1h-1zM1084 272h1v1h-1zM1085 271h1v1h-1zM1086 271h1v1h-1zM1087 270h1v1h-1zM1097 271h1v1h-1zM1098 271h1v1h-1zM1099 270h1v1h-1zM1100 269h1v2h-1zM1101 269h1v1h-1zM1102 268h1v1h-1zM1136 278h1v1h-1zM1137 278h1v1h-1zM1138 278h1v1h-1zM1139 279h1v1h-1zM1140 279h1v1h-1zM1141 279h1v1h-1zM1160 292h1v1h-1zM1161 292h1v1h-1zM1162 292h1v1h-1zM1163 292h1v1h-1zM1164 292h1v1h-1zM1165 292h1v1h-1zM1166 292h1v1h-1zM1167 293h1v1h-1zM1168 293h1v1h-1zM1169 293h1v1h-1zM1170 293h1v1h-1zM1171 293h1v1h-1zM1172 294h1v1h-1zM1173 294h1v1h-1zM1174 294h1v1h-1zM1175 295h1v1h-1zM1176 295h1v1h-1zM1177 295h1v1h-1zM1178 295h1v1h-1zM1179 295h1v1h-1zM1180 294h1v2h-1zM1181 293h1v2h-1zM1182 292h1v2h-1zM1183 291h1v2h-1zM1184 290h1v2h-1zM1185 289h1v2h-1zM1186 288h1v2h-1zM1187 287h1v2h-1zM1188 287h1v1h-1zM1189 286h1v1h-1zM1213 299h1v1h-1zM1214 299h1v2h-1zM1215 300h1v1h-1zM1216 300h1v2h-1zM1217 301h1v1h-1zM1218 302h1v1h-1zM1223 304h1v1h-1zM1224 304h1v1h-1zM1225 304h1v2h-1zM1226 305h1v1h-1zM1227 305h1v2h-1zM1228 306h1v1h-1zM1229 306h1v1h-1zM1230 305h1v1h-1zM1231 305h1v1h-1zM1232 305h1v1h-1zM1233 304h1v1h-1zM1238 302h1v1h-1zM1239 302h1v1h-1zM1240 301h1v2h-1zM1241 301h1v1h-1zM1242 300h1v2h-1zM1243 300h1v1h-1zM1244 299h1v1h-1zM1245 298h1v1h-1zM1246 297h1v2h-1zM1247 296h1v2h-1zM1248 295h1v2h-1zM1249 294h1v2h-1zM1250 293h1v1h-1zM1251 292h1v1h-1zM1252 291h1v1h-1zM1253 289h1v2h-1zM1254 288h1v2h-1zM1255 287h1v1h-1zM1256 285h1v2h-1zM1257 284h1v2h-1zM1258 282h1v2h-1zM1259 281h1v2h-1zM1260 279h1v2h-1zM1261 277h1v2h-1zM1262 275h1v2h-1zM1263 273h1v2h-1zM1264 270h1v3h-1zM1265 268h1v2h-1zM1266 265h1v3h-1zM1267 263h1v2h-1zM1268 262h1v1h-1zM1269 260h1v2h-1zM1270 259h1v1h-1zM1271 257h1v2h-1zM1272 256h1v1h-1zM1301 268h1v1h-1zM1302 268h1v1h-1zM1303 268h1v1h-1zM1304 268h1v1h-1zM1305 268h1v1h-1zM1306 268h1v1h-1zM1307 268h1v1h-1zM1308 268h1v1h-1zM1309 268h1v1h-1zM1310 268h1v1h-1zM1311 268h1v2h-1zM1312 268h1v1h-1zM1313 267h1v2h-1zM1314 267h1v1h-1zM1315 266h1v1h-1zM1316 265h1v1h-1zM1317 264h1v2h-1zM1318 264h1v1h-1zM1319 263h1v1h-1zM1320 262h1v2h-1zM1321 261h1v2h-1zM1322 260h1v2h-1zM1323 259h1v2h-1zM1324 258h1v1h-1zM1325 257h1v1h-1zM1326 256h1v1h-1zM1327 255h1v1h-1zM1328 253h1v2h-1zM1329 252h1v2h-1zM1330 251h1v2h-1zM1331 251h1v1h-1zM1332 250h1v2h-1zM1333 250h1v1h-1zM1334 249h1v2h-1zM1335 249h1v1h-1zM1345 251h1v1h-1zM1346 251h1v1h-1zM1347 250h1v1h-1zM1348 249h1v2h-1zM1349 249h1v1h-1zM1350 248h1v1h-1zM1351 247h1v2h-1zM1352 247h1v1h-1zM1353 246h1v1h-1zM1354 245h1v1h-1zM1355 244h1v1h-1zM1356 243h1v1h-1zM1357 242h1v1h-1zM1358 241h1v1h-1zM1359 240h1v1h-1zM1360 239h1v1h-1zM1361 237h1v2h-1zM1362 236h1v2h-1zM1363 235h1v2h-1zM1364 234h1v2h-1zM1365 233h1v2h-1zM1366 232h1v2h-1zM1367 231h1v2h-1zM1368 230h1v2h-1zM1369 230h1v1h-1zM1370 228h1v2h-1zM1371 226h1v2h-1zM1372 225h1v2h-1zM1373 223h1v2h-1zM1374 222h1v2h-1zM1375 221h1v1h-1zM1376 219h1v2h-1zM1377 218h1v2h-1zM1378 216h1v2h-1zM1379 214h1v2h-1zM1380 212h1v2h-1zM1381 210h1v2h-1zM1382 208h1v2h-1zM1383 206h1v2h-1zM1384 205h1v1h-1zM1385 203h1v2h-1zM1386 201h1v2h-1zM1387 199h1v2h-1zM1388 197h1v2h-1zM1389 196h1v2h-1zM1390 195h1v1h-1zM1391 193h1v2h-1zM1392 192h1v2h-1zM1393 191h1v1h-1zM1422 229h1v1h-1zM1423 229h1v1h-1zM1424 229h1v1h-1zM1425 229h1v1h-1zM1426 229h1v1h-1zM1427 229h1v1h-1zM1428 229h1v1h-1zM1429 230h1v1h-1zM1430 230h1v1h-1zM1431 230h1v1h-1zM1432 231h1v1h-1zM1433 231h1v1h-1zM1434 231h1v1h-1zM1435 231h1v2h-1zM1436 232h1v1h-1zM1437 232h1v1h-1zM1438 231h1v2h-1zM1439 230h1v2h-1zM1440 229h1v2h-1zM1441 229h1v1h-1zM1442 228h1v1h-1zM1451 225h1v1h-1zM1452 225h1v1h-1zM1453 224h1v2h-1zM1454 224h1v1h-1zM1455 223h1v1h-1zM1456 223h1v1h-1zM1457 221h1v2h-1zM1458 220h1v2h-1zM1459 219h1v2h-1zM1460 218h1v1h-1zM1461 216h1v2h-1zM1462 215h1v2h-1zM1463 214h1v1h-1zM1464 213h1v1h-1zM1465 211h1v2h-1zM1466 210h1v2h-1zM1467 208h1v2h-1zM1468 207h1v2h-1zM1469 205h1v2h-1zM1470 204h1v2h-1zM1471 202h1v2h-1zM1472 199h1v3h-1zM1473 197h1v2h-1zM1474 194h1v3h-1zM1475 191h1v3h-1zM1476 187h1v4h-1zM1477 182h1v5h-1zM1478 177h1v5h-1zM1479 172h1v5h-1zM1480 168h1v4h-1zM1481 166h1v2h-1zM1482 163h1v3h-1zM1483 160h1v3h-1zM1484 157h1v3h-1zM1485 154h1v3h-1zM1486 151h1v3h-1zM1487 148h1v3h-1zM1488 144h1v4h-1zM1489 141h1v3h-1zM1490 138h1v3h-1zM1491 136h1v2h-1zM1492 134h1v2h-1zM1493 131h1v3h-1zM1494 129h1v2h-1zM1495 127h1v2h-1zM1544 175h1v1h-1zM1545 175h1v2h-1zM1546 176h1v2h-1zM1547 177h1v1h-1zM1548 178h1v1h-1zM1558 184h1v1h-1zM1559 183h1v2h-1zM1560 183h1v1h-1zM1561 182h1v1h-1zM1562 181h1v2h-1zM1563 181h1v1h-1zM1564 179h1v2h-1zM1565 177h1v2h-1zM1566 175h1v2h-1zM1567 173h1v2h-1zM1568 172h1v1h-1zM1569 170h1v2h-1zM1570 168h1v2h-1zM1571 167h1v1h-1zM1572 165h1v2h-1zM1573 163h1v2h-1zM1574 162h1v1h-1zM1575 160h1v2h-1zM1576 159h1v2h-1zM1577 157h1v2h-1zM1578 156h1v2h-1zM1579 153h1v3h-1zM1580 150h1v3h-1zM1581 148h1v2h-1zM1582 144h1v4h-1zM1583 139h1v5h-1zM1584 134h1v5h-1zM1585 128h1v6h-1zM1586 123h1v5h-1zM1587 119h1v4h-1zM1588 116h1v3h-1zM1589 113h1v3h-1zM1590 110h1v3h-1zM1591 106h1v4h-1zM1592 104h1v2h-1zM1593 102h1v2h-1zM1594 101h1v1h-1zM1595 99h1v2h-1zM1596 98h1v1h-1zM1597 96h1v2h-1zM1598 94h1v2h-1zM1599 92h1v2h-1zM1600 90h1v2h-1zM1601 88h1v2h-1zM1602 86h1v2h-1zM1603 84h1v2h-1zM1604 82h1v2h-1zM1605 80h1v2h-1zM1606 78h1v2h-1zM1607 76h1v2h-1z"/></g>
<g shape-rendering="crispEdges"><path fill="#ff0000" d="M0 307h2v2h-2zM1 307h2v3h-2zM2 308h2v3h-2zM3 309h2v2h-2zM4 310h2v2h-2zM5 310h2v3h-2zM6 311h2v3h-2zM7 312h2v2h-2zM8 313h2v2h-2zM9 313h2v3h-2zM10 314h2v3h-2zM11 315h2v2h-2zM12 315h2v3h-2zM13 316h2v2h-2zM14 317h2v2h-2zM15 317h2v3h-2zM16 318h2v2h-2zM17 319h2v2h-2zM18 319h2v3h-2zM19 320h2v2h-2zM20 321h2v2h-2zM21 321h2v3h-2zM22 322h2v2h-2zM23 322h2v3h-2zM24 323h2v2h-2zM25 324h2v2h-2zM26 324h2v3h-2zM27 325h2v2h-2zM28 326h2v2h-2zM29 326h2v3h-2zM30 327h2v2h-2zM31 328h2v2h-2zM32 328h2v2h-2zM33 329h2v2h-2zM34 329h2v3h-2zM35 330h2v2h-2zM36 331h2v2h-2zM37 331h2v3h-2zM38 332h2v2h-2zM39 332h2v3h-2zM40 333h2v2h-2zM41 333h2v2h-2zM42 334h2v2h-2zM43 334h2v2h-2zM44 334h2v2h-2zM45 335h2v2h-2zM46 335h2v2h-2zM47 335h2v3h-2zM48 336h2v2h-2zM49 336h2v2h-2zM50 337h2v2h-2zM51 337h2v2h-2zM52 337h2v2h-2zM53 337h2v3h-2zM54 338h2v2h-2zM55 338h2v2h-2zM56 338h2v2h-2zM57 338h2v3h-2zM58 339h2v2h-2zM59 339h2v2h-2zM60 339h2v2h-2zM61 340h2v2h-2zM62 340h2v2h-2zM63 340h2v2h-2zM64 340h2v2h-2zM65 341h2v2h-2zM66 341h2v2h-2zM67 341h2v2h-2zM68 341h2v3h-2zM69 342h2v2h-2zM70 342h2v2h-2zM71 342h2v3h-2zM72 343h2v2h-2zM73 343h2v2h-2zM74 343h2v3h-2zM75 344h2v2h-2zM76 344h2v2h-2zM77 344h2v3h-2zM78 345h2v2h-2zM79 345h2v2h-2zM80 345h2v3h-2zM81 346h2v2h-2zM82 346h2v2h-2zM83 346h2v2h-2zM84 347h2v2h-2zM85 347h2v2h-2zM86 347h2v2h-2zM87 347h2v2h-2zM88 348h2v2h-2zM89 348h2v2h-2zM90 348h2v2h-2zM91 348h2v3h-2zM92 349h2v2h-2zM93 349h2v2h-2zM94 349h2v3h-2zM95 350h2v2h-2zM96 350h2v2h-2zM97 351h2v2h-2zM98 351h2v2h-2zM99 352h2v2h-2zM100 352h2v2h-2zM101 352h2v3h-2zM102 353h2v2h-2zM103 353h2v3h-2zM104 354h2v2h-2zM105 354h2v2h-2zM106 355h2v2h-2zM107 355h2v2h-2zM108 355h2v2h-2zM109 355h2v2h-2zM110 355h2v2h-2zM111 356h2v2h-2zM112 356h2v2h-2zM113 356h2v2h-2zM114 356h2v2h-2zM115 356h2v2h-2zM116 357h2v2h-2zM117 357h2v2h-2zM118 357h2v2h-2zM119 357h2v2h-2zM120 357h2v2h-2zM121 357h2v2h-2zM122 357h2v2h-2zM123 357h2v3h-2zM124 358h2v2h-2zM125 358h2v2h-2zM126 358h2v2h-2zM127 358h2v2h-2zM128 358h2v2h-2zM129 358h2v2h-2zM130 358h2v2h-2zM131 358h2v2h-2zM132 359h2v2h-2zM133 359h2v2h-2zM134 359h2v2h-2zM135 360h2v2h-2zM136 360h2v2h-2zM137 360h2v2h-2zM138 361h2v2h-2zM139 361h2v2h-2zM140 361h2v2h-2zM141 362h2v2h-2zM142 362h2v2h-2zM143 362h2v2h-2zM144 363h2v2h-2zM145 363h2v2h-2zM146 363h2v2h-2zM147 364h2v2h-2zM148 364h2v2h-2zM149 364h2v2h-2zM150 364h2v2h-2zM151 365h2v2h-2zM152 365h2v2h-2zM153 365h2v2h-2zM154 365h2v2h-2zM155 366h2v2h-2zM156 366h2v2h-2zM157 366h2v2h-2zM158 366h2v2h-2zM159 367h2v2h-2zM160 367h2v2h-2zM161 367h2v2h-2zM162 367h2v3h-2zM163 368h2v2h-2zM164 368h2v2h-2zM165 368h2v2h-2zM166 369h2v2h-2zM167 369h2v2h-2zM168 369h2v2h-2zM169 369h2v3h-2zM170 370h2v2h-2zM171 370h2v2h-2zM172 370h2v2h-2zM173 371h2v2h-2zM174 371h2v2h-2zM175 371h2v3h-2zM176 372h2v2h-2zM177 372h2v2h-2zM178 372h2v3h-2zM179 373h2v2h-2zM180 373h2v3h-2zM181 374h2v2h-2zM182 374h2v2h-2zM183 375h2v2h-2zM184 375h2v2h-2zM185 376h2v2h-2zM186 376h2v2h-2zM187 376h2v3h-2zM188 377h2v2h-2zM189 377h2v3h-2zM190 378h2v2h-2zM191 378h2v3h-2zM192 379h2v2h-2zM193 379h2v2h-2zM194 380h2v2h-2zM195 380h2v2h-2zM196 381h2v2h-2zM197 381h2v2h-2zM198 381h2v3h-2zM199 382h2v2h-2zM200 382h2v3h-2zM201 383h2v2h-2zM202 383h2v2h-2zM203 384h2v2h-2zM204 384h2v2h-2zM205 385h2v2h-2zM206 385h2v2h-2zM207 385h2v3h-2zM208 386h2v2h-2zM209 386h2v3h-2zM210 387h2v2h-2zM211 387h2v2h-2zM212 388h2v2h-2zM213 388h2v2h-2zM214 388h2v3h-2zM215 389h2v2h-2zM216 389h2v3h-2zM217 390h2v2h-2zM218 390h2v2h-2zM219 390h2v3h-2zM220 391h2v2h-2zM221 391h2v2h-2zM222 391h2v2h-2zM223 391h2v2h-2zM224 391h2v2h-2zM225 391h2v3h-2zM226 392h2v2h-2zM227 392h2v2h-2zM228 392h2v2h-2zM229 392h2v2h-2zM230 392h2v2h-2zM231 392h2v3h-2zM232 393h2v2h-2zM233 393h2v2h-2zM234 393h2v2h-2zM235 393h2v2h-2zM236 393h2v2h-2zM237 393h2v2h-2zM238 393h2v2h-2zM239 394h2v2h-2zM240 394h2v2h-2zM241 394h2v2h-2zM242 394h2v2h-2zM243 394h2v2h-2zM244 394h2v2h-2zM245 394h2v2h-2zM246 394h2v2h-2zM247 394h2v2h-2zM248 395h2v2h-2zM249 395h2v2h-2zM250 395h2v2h-2zM251 395h2v2h-2zM252 395h2v3h-2zM253 396h2v2h-2zM254 396h2v2h-2zM255 396h2v2h-2zM256 396h2v3h-2zM257 397h2v2h-2zM258 397h2v2h-2zM259 397h2v2h-2zM260 397h2v3h-2zM261 398h2v2h-2zM262 398h2v2h-2zM263 398h2v2h-2zM264 398h2v3h-2zM265 399h2v2h-2zM266 399h2v2h-2zM267 399h2v2h-2zM268 399h2v2h-2zM269 399h2v3h-2zM270 400h2v2h-2zM271 400h2v2h-2zM272 400h2v2h-2zM273 400h2v2h-2zM274 401h2v2h-2zM275 401h2v2h-2zM276 401h2v2h-2zM277 401h2v2h-2zM278 402h2v2h-2zM279 402h2v2h-2zM280 402h2v3h-2zM281 403h2v2h-2zM282 403h2v2h-2zM283 404h2v2h-2zM284 404h2v2h-2zM285 404h2v3h-2zM286 405h2v2h-2zM287 405h2v2h-2zM288 406h2v2h-2zM289 406h2v2h-2zM290 406h2v2h-2zM291 407h2v2h-2zM292 407h2v2h-2zM293 407h2v2h-2zM294 407h2v2h-2zM295 408h2v2h-2zM296 408h2v2h-2zM297 408h2v2h-2zM298 408h2v3h-2zM299 409h2v2h-2zM300 409h2v2h-2zM301 409h2v2h-2zM302 409h2v2h-2zM303 409h2v2h-2zM304 409h2v2h-2zM305 409h2v2h-2zM306 409h2v2h-2zM307 409h2v2h-2zM308 409h2v2h-2zM309 409h2v3h-2zM310 410h2v2h-2zM311 410h2v2h-2zM312 409h2v3h-2zM313 409h2v2h-2zM314 408h2v3h-2zM315 408h2v2h-2zM316 407h2v3h-2zM317 407h2v2h-2zM318 406h2v3h-2zM319 405h2v3h-2zM320 404h2v3h-2zM321 403h2v2h-2zM322 402h2v2h-2zM323 400h2v3h-2zM324 399h2v3h-2zM325 399h2v2h-2zM326 398h2v2h-2zM327 397h2v2h-2zM328 396h2v3h-2zM329 396h2v2h-2zM330 396h2v2h-2zM331 395h2v2h-2zM332 395h2v2h-2zM333 395h2v2h-2zM334 395h2v2h-2zM335 394h2v2h-2zM336 394h2v2h-2zM337 394h2v2h-2zM338 394h2v2h-2zM339 393h2v2h-2zM340 393h2v2h-2zM341 393h2v2h-2zM342 393h2v2h-2zM343 393h2v2h-2zM344 393h2v2h-2zM345 393h2v2h-2zM346 392h2v2h-2zM347 392h2v2h-2zM348 392h2v2h-2zM349 392h2v2h-2zM350 392h2v2h-2zM351 392h2v2h-2zM352 392h2v2h-2zM353 391h2v2h-2zM354 391h2v2h-2zM355 391h2v2h-2zM356 391h2v2h-2zM357 391h2v2h-2zM358 391h2v2h-2zM359 391h2v2h-2zM360 391h2v2h-2zM361 390h2v2h-2zM362 390h2v2h-2zM363 390h2v2h-2zM364 390h2v2h-2zM365 390h2v2h-2zM366 390h2v2h-2zM367 389h2v2h-2zM368 389h2v2h-2zM369 389h2v2h-2zM370 389h2v2h-2zM371 388h2v2h-2zM372 388h2v2h-2zM373 388h2v2h-2zM374 388h2v2h-2zM375 387h2v2h-2zM376 387h2v2h-2zM377 387h2v2h-2zM378 387h2v2h-2zM379 386h2v3h-2zM380 386h2v2h-2zM381 386h2v2h-2zM382 386h2v2h-2zM383 386h2v2h-2zM384 385h2v3h-2zM385 385h2v2h-2zM386 385h2v2h-2zM387 385h2v2h-2zM388 385h2v2h-2zM389 384h2v2h-2zM390 384h2v2h-2zM391 384h2v2h-2zM392 384h2v2h-2zM393 384h2v2h-2zM394 384h2v2h-2zM395 384h2v2h-2zM396 384h2v2h-2zM397 384h2v2h-2zM398 384h2v2h-2zM399 384h2v2h-2zM400 384h2v2h-2zM401 384h2v2h-2zM402 384h2v2h-2zM403 384h2v2h-2zM404 384h2v2h-2zM405 384h2v2h-2zM406 384h2v2h-2zM407 384h2v2h-2zM408 384h2v2h-2zM409 384h2v2h-2zM410 384h2v2h-2zM411 384h2v2h-2zM412 384h2v2h-2zM413 383h2v3h-2zM414 383h2v2h-2zM415 383h2v2h-2zM416 383h2v2h-2zM417 383h2v2h-2zM418 383h2v2h-2zM419 383h2v2h-2zM420 382h2v3h-2zM421 382h2v2h-2zM422 382h2v2h-2zM423 381h2v2h-2zM424 381h2v2h-2zM425 380h2v3h-2zM426 380h2v2h-2zM427 380h2v2h-2zM428 379h2v2h-2zM429 379h2v2h-2zM430 379h2v2h-2zM431 378h2v2h-2zM432 378h2v2h-2zM433 377h2v3h-2zM434 377h2v2h-2zM435 377h2v2h-2zM436 376h2v3h-2zM437 376h2v2h-2zM438 376h2v2h-2zM439 375h2v2h-2zM440 375h2v2h-2zM441 375h2v2h-2zM442 374h2v2h-2zM443 374h2v2h-2zM444 373h2v3h-2zM445 373h2v2h-2zM446 373h2v2h-2zM447 373h2v2h-2zM448 373h2v2h-2zM449 372h2v2h-2zM450 372h2v2h-2zM451 372h2v2h-2zM452 372h2v2h-2zM453 371h2v3h-2zM454 371h2v2h-2zM455 371h2v2h-2zM456 371h2v2h-2zM457 371h2v2h-2zM458 371h2v2h-2zM459 371h2v2h-2zM460 371h2v2h-2zM461 371h2v2h-2zM462 372h2v2h-2zM463 372h2v2h-2zM464 372h2v2h-2zM465 372h2v2h-2zM466 372h2v2h-2zM467 372h2v2h-2zM468 372h2v2h-2zM469 372h2v2h-2zM470 372h2v2h-2zM471 372h2v2h-2zM472 372h2v2h-2zM473 371h2v2h-2zM474 371h2v2h-2zM475 371h2v2h-2zM476 370h2v3h-2zM477 370h2v2h-2zM478 370h2v2h-2zM479 370h2v2h-2zM480 369h2v2h-2zM481 369h2v2h-2zM482 369h2v2h-2zM483 369h2v2h-2zM484 369h2v2h-2zM485 369h2v2h-2zM486 369h2v2h-2zM487 368h2v2h-2zM488 368h2v2h-2zM489 368h2v2h-2zM490 368h2v2h-2zM491 368h2v2h-2zM492 368h2v2h-2zM493 368h2v2h-2zM494 368h2v2h-2zM495 368h2v2h-2zM496 368h2v2h-2zM497 368h2v2h-2zM498 368h2v2h-2zM499 368h2v2h-2zM500 368h2v2h-2zM501 367h2v3h-2zM502 367h2v2h-2zM503 367h2v2h-2zM504 367h2v2h-2zM505 367h2v2h-2zM506 367h2v2h-2zM507 367h2v2h-2zM508 367h2v2h-2zM509 366h2v3h-2zM510 366h2v2h-2zM511 366h2v2h-2zM512 366h2v2h-2zM513 366h2v2h-2zM514 366h2v2h-2zM515 365h2v3h-2zM516 365h2v2h-2zM517 365h2v2h-2zM518 365h2v2h-2zM519 364h2v2h-2zM520 364h2v2h-2zM521 364h2v2h-2zM522 363h2v3h-2zM523 363h2v2h-2zM524 363h2v2h-2zM525 362h2v3h-2zM526 362h2v2h-2zM527 362h2v2h-2zM528 361h2v3h-2zM529 361h2v2h-2zM530 361h2v2h-2zM531 360h2v2h-2zM532 360h2v2h-2zM533 359h2v2h-2zM534 358h2v3h-2zM535 358h2v2h-2zM536 357h2v2h-2zM537 356h2v2h-2zM538 355h2v3h-2zM539 354h2v3h-2zM540 353h2v3h-2zM541 352h2v3h-2zM542 351h2v3h-2zM543 350h2v3h-2zM544 349h2v2h-2zM545 348h2v2h-2zM546 346h2v3h-2zM547 345h2v3h-2zM548 344h2v2h-2zM549 343h2v2h-2zM550 342h2v2h-2zM551 341h2v2h-2zM552 340h2v2h-2zM553 339h2v2h-2zM554 337h2v3h-2zM555 337h2v2h-2zM556 336h2v3h-2zM557 335h2v3h-2zM558 335h2v2h-2zM559 334h2v2h-2zM560 333h2v3h-2zM561 333h2v2h-2zM562 332h2v3h-2zM563 332h2v2h-2zM564 332h2v2h-2zM565 331h2v3h-2zM566 331h2v2h-2zM567 331h2v2h-2zM568 330h2v3h-2zM569 330h2v2h-2zM570 330h2v2h-2zM571 330h2v2h-2zM572 330h2v2h-2zM573 329h2v3h-2zM574 329h2v2h-2zM575 329h2v2h-2zM576 329h2v2h-2zM577 329h2v2h-2zM578 328h2v2h-2zM579 328h2v2h-2zM580 328h2v2h-2zM581 327h2v2h-2zM582 327h2v2h-2zM583 327h2v2h-2zM584 327h2v2h-2zM585 327h2v2h-2zM586 327h2v2h-2zM587 327h2v2h-2zM588 326h2v3h-2zM589 326h2v2h-2zM590 326h2v2h-2zM591 326h2v2h-2zM592 326h2v2h-2zM593 326h2v2h-2zM594 326h2v2h-2zM595 326h2v2h-2zM596 326h2v2h-2zM597 326h2v2h-2zM598 326h2v2h-2zM599 325h2v3h-2zM600 325h2v2h-2zM601 325h2v2h-2zM602 325h2v2h-2zM603 325h2v2h-2zM604 325h2v2h-2zM605 325h2v2h-2zM606 324h2v3h-2zM607 324h2v2h-2zM608 324h2v2h-2zM609 324h2v2h-2zM610 324h2v3h-2zM611 325h2v2h-2zM612 325h2v2h-2zM613 325h2v2h-2zM614 325h2v2h-2zM615 325h2v2h-2zM616 325h2v2h-2zM617 325h2v3h-2zM618 326h2v2h-2zM619 326h2v2h-2zM620 326h2v2h-2zM621 326h2v3h-2zM622 327h2v2h-2zM623 327h2v2h-2zM624 328h2v2h-2zM625 328h2v2h-2zM626 328h2v3h-2zM627 329h2v2h-2zM628 329h2v2h-2zM629 330h2v2h-2zM630 330h2v2h-2zM631 330h2v3h-2zM632 331h2v2h-2zM633 331h2v2h-2zM634 331h2v2h-2zM635 331h2v2h-2zM636 331h2v2h-2zM637 331h2v3h-2zM638 332h2v2h-2zM639 332h2v2h-2zM640 332h2v2h-2zM641 332h2v2h-2zM642 332h2v2h-2zM643 332h2v2h-2zM644 332h2v2h-2zM645 332h2v2h-2zM646 332h2v2h-2zM647 332h2v2h-2zM648 332h2v2h-2zM649 332h2v2h-2zM650 332h2v2h-2zM651 332h2v2h-2zM652 332h2v2h-2zM653 332h2v2h-2zM654 332h2v2h-2zM655 332h2v2h-2zM656 332h2v2h-2zM657 332h2v2h-2zM658 332h2v2h-2zM659 332h2v2h-2zM660 332h2v2h-2zM661 331h2v2h-2zM662 331h2v2h-2zM663 330h2v3h-2zM664 330h2v2h-2zM665 330h2v2h-2zM666 329h2v2h-2zM667 329h2v2h-2zM668 329h2v2h-2zM669 328h2v2h-2zM670 328h2v2h-2zM671 327h2v3h-2zM672 327h2v2h-2zM673 327h2v2h-2zM674 326h2v3h-2zM675 326h2v2h-2zM676 326h2v2h-2zM677 325h2v2h-2zM678 325h2v2h-2zM679 324h2v3h-2zM680 324h2v2h-2zM681 323h2v3h-2zM682 323h2v2h-2zM683 322h2v3h-2zM684 322h2v2h-2zM685 321h2v3h-2zM686 321h2v2h-2zM687 320h2v3h-2zM688 320h2v2h-2zM689 319h2v3h-2zM690 319h2v2h-2zM691 318h2v3h-2zM692 318h2v2h-2zM693 317h2v3h-2zM694 317h2v2h-2zM695 316h2v3h-2zM696 316h2v2h-2zM697 315h2v3h-2zM698 315h2v2h-2zM699 315h2v2h-2zM700 314h2v2h-2zM701 314h2v2h-2zM702 313h2v3h-2zM703 313h2v2h-2zM704 312h2v3h-2zM705 312h2v2h-2zM706 312h2v2h-2zM707 311h2v2h-2zM708 311h2v2h-2zM709 310h2v2h-2zM710 310h2v2h-2zM711 309h2v2h-2zM712 309h2v2h-2zM713 308h2v2h-2zM714 308h2v2h-2zM715 307h2v2h-2zM716 307h2v2h-2zM717 306h2v2h-2zM718 306h2v2h-2zM719 305h2v2h-2zM720 305h2v2h-2zM721 304h2v3h-2zM722 304h2v2h-2zM723 303h2v3h-2zM724 303h2v2h-2zM725 303h2v2h-2zM726 302h2v2h-2zM727 302h2v2h-2zM728 301h2v3h-2zM729 301h2v2h-2zM730 301h2v2h-2zM731 300h2v3h-2zM732 300h2v2h-2zM733 300h2v2h-2zM734 300h2v2h-2zM735 299h2v2h-2zM736 299h2v2h-2zM737 299h2v2h-2zM738 298h2v3h-2zM739 298h2v2h-2zM740 298h2v2h-2zM741 298h2v2h-2zM742 297h2v2h-2zM743 297h2v2h-2zM744 297h2v2h-2zM745 297h2v2h-2zM746 296h2v2h-2zM747 296h2v2h-2zM748 296h2v2h-2zM749 295h2v3h-2zM750 295h2v2h-2zM751 295h2v2h-2zM752 294h2v2h-2zM753 294h2v2h-2zM754 293h2v2h-2zM755 293h2v2h-2zM756 292h2v2h-2zM757 292h2v2h-2zM758 291h2v2h-2zM759 290h2v2h-2zM760 289h2v2h-2zM761 288h2v2h-2zM762 287h2v2h-2zM763 286h2v2h-2zM764 285h2v2h-2zM765 284h2v2h-2zM766 282h2v3h-2zM767 281h2v3h-2zM768 280h2v2h-2zM769 278h2v3h-2zM770 276h2v3h-2zM771 274h2v3h-2zM772 272h2v3h-2zM773 270h2v3h-2zM774 269h2v2h-2zM775 267h2v3h-2zM776 265h2v3h-2zM777 263h2v3h-2zM778 261h2v3h-2zM779 260h2v3h-2zM780 258h2v3h-2zM781 256h2v3h-2zM782 255h2v3h-2zM783 254h2v3h-2zM784 253h2v3h-2zM785 252h2v3h-2zM786 251h2v3h-2zM787 250h2v3h-2zM788 250h2v2h-2zM789 249h2v2h-2zM790 249h2v2h-2zM791 248h2v2h-2zM792 248h2v2h-2zM793 247h2v2h-2zM794 247h2v2h-2zM795 246h2v2h-2zM796 245h2v3h-2zM797 245h2v2h-2zM798 244h2v2h-2zM799 244h2v2h-2zM800 243h2v2h-2zM801 242h2v3h-2zM802 242h2v2h-2zM803 241h2v2h-2zM804 240h2v2h-2zM805 239h2v3h-2zM806 238h2v3h-2zM807 238h2v2h-2zM808 237h2v2h-2zM809 236h2v2h-2zM810 235h2v2h-2zM811 234h2v3h-2zM812 233h2v3h-2zM813 232h2v3h-2zM814 231h2v3h-2zM815 230h2v2h-2zM816 229h2v2h-2zM817 228h2v2h-2zM818 227h2v2h-2zM819 226h2v2h-2zM820 224h2v3h-2zM821 223h2v3h-2zM822 222h2v3h-2zM823 221h2v3h-2zM824 221h2v2h-2zM825 220h2v2h-2zM826 219h2v2h-2zM827 218h2v2h-2zM828 217h2v2h-2zM829 216h2v2h-2zM830 216h2v2h-2zM831 215h2v2h-2zM832 215h2v2h-2zM833 214h2v3h-2zM834 214h2v2h-2zM835 214h2v2h-2zM836 213h2v2h-2zM837 213h2v2h-2zM838 212h2v2h-2zM839 211h2v3h-2zM840 210h2v3h-2zM841 209h2v3h-2zM842 209h2v2h-2zM843 208h2v2h-2zM844 207h2v2h-2zM845 206h2v3h-2zM846 205h2v3h-2zM847 205h2v2h-2zM848 204h2v2h-2zM849 203h2v2h-2zM850 202h2v3h-2zM851 201h2v3h-2zM852 201h2v2h-2zM853 200h2v2h-2zM854 199h2v3h-2zM855 199h2v2h-2zM856 198h2v3h-2zM857 198h2v2h-2zM858 197h2v2h-2zM859 196h2v3h-2zM860 196h2v2h-2zM861 195h2v3h-2zM862 195h2v2h-2zM863 195h2v2h-2zM864 195h2v2h-2zM865 194h2v3h-2zM866 194h2v2h-2zM867 194h2v2h-2zM868 194h2v2h-2zM869 194h2v2h-2zM870 194h2v2h-2zM871 194h2v2h-2zM872 194h2v2h-2zM873 194h2v2h-2zM874 193h2v2h-2zM875 193h2v2h-2zM876 193h2v2h-2zM877 193h2v2h-2zM878 193h2v2h-2zM879 193h2v2h-2zM880 193h2v2h-2zM881 193h2v2h-2zM882 193h2v2h-2zM883 193h2v2h-2zM884 193h2v2h-2zM885 193h2v2h-2zM886 193h2v2h-2zM887 193h2v2h-2zM888 193h2v2h-2zM889 193h2v2h-2zM890 193h2v2h-2zM891 193h2v2h-2zM892 193h2v2h-2zM893 193h2v2h-2zM894 193h2v2h-2zM895 193h2v2h-2zM896 194h2v2h-2zM897 194h2v2h-2zM898 194h2v2h-2zM899 194h2v2h-2zM900 194h2v2h-2zM901 194h2v2h-2zM902 194h2v2h-2zM903 194h2v2h-2zM904 194h2v2h-2zM905 194h2v2h-2zM906 194h2v2h-2zM907 195h2v2h-2zM908 195h2v2h-2zM909 195h2v2h-2zM910 196h2v2h-2zM911 197h2v3h-2zM912 198h2v3h-2zM913 199h2v3h-2zM914 201h2v3h-2zM915 203h2v3h-2zM916 205h2v3h-2zM917 206h2v3h-2zM918 207h2v2h-2zM919 208h2v2h-2zM920 209h2v2h-2zM921 209h2v3h-2zM922 210h2v3h-2zM923 211h2v2h-2zM924 212h2v2h-2zM925 212h2v3h-2zM926 213h2v2h-2zM927 213h2v3h-2zM928 214h2v2h-2zM929 214h2v3h-2zM930 215h2v2h-2zM931 215h2v3h-2zM932 216h2v2h-2zM933 216h2v2h-2zM934 217h2v2h-2zM935 217h2v2h-2zM936 217h2v2h-2zM937 218h2v2h-2zM938 218h2v2h-2zM939 218h2v2h-2zM940 219h2v2h-2zM941 219h2v2h-2zM942 219h2v3h-2zM943 220h2v2h-2zM944 221h2v2h-2zM945 221h2v2h-2zM946 222h2v2h-2zM947 222h2v3h-2zM948 223h2v2h-2zM949 223h2v3h-2zM950 224h2v3h-2zM951 225h2v2h-2zM952 225h2v2h-2zM953 225h2v3h-2zM954 226h2v2h-2zM955 226h2v2h-2zM956 227h2v2h-2zM957 227h2v2h-2zM958 227h2v3h-2zM959 228h2v2h-2zM960 228h2v3h-2zM961 229h2v2h-2zM962 229h2v2h-2zM963 229h2v3h-2zM964 230h2v2h-2zM965 230h2v2h-2zM966 230h2v3h-2zM967 231h2v2h-2zM968 231h2v2h-2zM969 231h2v3h-2zM970 232h2v2h-2zM971 232h2v2h-2zM972 232h2v2h-2zM973 232h2v2h-2zM974 232h2v2h-2zM975 232h2v3h-2zM976 233h2v2h-2zM977 233h2v2h-2zM978 233h2v2h-2zM979 233h2v2h-2zM980 234h2v2h-2zM981 234h2v2h-2zM982 235h2v2h-2zM983 235h2v2h-2zM984 235h2v3h-2zM985 236h2v2h-2zM986 236h2v3h-2zM987 237h2v2h-2zM988 237h2v2h-2zM989 237h2v2h-2zM990 237h2v2h-2zM991 237h2v2h-2zM992 237h2v2h-2zM993 238h2v2h-2zM994 238h2v2h-2zM995 238h2v2h-2zM996 238h2v2h-2zM997 238h2v2h-2zM998 238h2v2h-2zM999 238h2v2h-2zM1000 238h2v2h-2zM1001 238h2v2h-2zM1002 238h2v2h-2zM1003 238h2v2h-2zM1004 238h2v2h-2zM1005 238h2v2h-2zM1006 238h2v2h-2zM1007 238h2v2h-2zM1008 238h2v2h-2zM1009 238h2v2h-2zM1010 238h2v2h-2zM1011 238h2v2h-2zM1012 238h2v2h-2zM1013 237h2v3h-2zM1014 237h2v2h-2zM1015 237h2v2h-2zM1016 237h2v2h-2zM1017 237h2v2h-2zM1018 237h2v2h-2zM1019 237h2v2h-2zM1020 237h2v2h-2zM1021 237h2v2h-2zM1022 237h2v2h-2zM1023 237h2v2h-2zM1024 237h2v2h-2zM1025 237h2v2h-2zM1026 237h2v2h-2zM1027 237h2v2h-2zM1028 237h2v2h-2zM1029 238h2v2h-2zM1030 238h2v2h-2zM1031 238h2v2h-2zM1032 238h2v2h-2zM1033 238h2v3h-2zM1034 239h2v2h-2zM1035 239h2v2h-2zM1036 239h2v2h-2zM1037 240h2v2h-2zM1038 240h2v2h-2zM1039 240h2v2h-2zM1040 241h2v2h-2zM1041 241h2v2h-2zM1042 241h2v2h-2zM1043 241h2v3h-2zM1044 242h2v2h-2zM1045 242h2v2h-2zM1046 242h2v2h-2zM1047 242h2v3h-2zM1048 243h2v2h-2zM1049 243h2v2h-2zM1050 243h2v3h-2zM1051 244h2v2h-2zM1052 244h2v2h-2zM1053 245h2v2h-2zM1054 245h2v2h-2zM1055 245h2v3h-2zM1056 246h2v2h-2zM1057 246h2v2h-2zM1058 246h2v2h-2zM1059 247h2v2h-2zM1060 247h2v2h-2zM1061 247h2v2h-2zM1062 247h2v2h-2zM1063 248h2v2h-2zM1064 248h2v2h-2zM1065 248h2v2h-2zM1066 248h2v2h-2zM1067 248h2v2h-2zM1068 248h2v2h-2zM1069 248h2v3h-2zM1070 249h2v2h-2zM1071 249h2v2h-2zM1072 249h2v2h-2zM1073 249h2v2h-2zM1074 249h2v2h-2zM1075 249h2v2h-2zM1076 250h2v2h-2zM1077 250h2v2h-2zM1078 250h2v2h-2zM1079 250h2v2h-2zM1080 250h2v2h-2zM1081 250h2v2h-2zM1082 251h2v2h-2zM1083 251h2v2h-2zM1084 251h2v2h-2zM1085 251h2v2h-2zM1086 251h2v2h-2zM1087 251h2v2h-2zM1088 251h2v3h-2zM1089 252h2v2h-2zM1090 252h2v2h-2zM1091 252h2v2h-2zM1092 252h2v2h-2zM1093 252h2v2h-2zM1094 252h2v2h-2zM1095 253h2v2h-2zM1096 253h2v2h-2zM1097 253h2v2h-2zM1098 253h2v2h-2zM1099 253h2v2h-2zM1100 253h2v2h-2zM1101 254h2v2h-2zM1102 254h2v2h-2zM1103 254h2v2h-2zM1104 254h2v2h-2zM1105 254h2v2h-2zM1106 254h2v3h-2zM1107 255h2v2h-2zM1108 255h2v2h-2zM1109 255h2v2h-2zM1110 255h2v2h-2zM1111 255h2v2h-2zM1112 256h2v2h-2zM1113 256h2v2h-2zM1114 256h2v2h-2zM1115 256h2v2h-2zM1116 256h2v2h-2zM1117 256h2v2h-2zM1118 257h2v2h-2zM1119 257h2v2h-2zM1120 257h2v2h-2zM1121 257h2v2h-2zM1122 257h2v2h-2zM1123 257h2v3h-2zM1124 258h2v2h-2zM1125 258h2v2h-2zM1126 258h2v2h-2zM1127 258h2v2h-2zM1128 258h2v2h-2zM1129 258h2v2h-2zM1130 259h2v2h-2zM1131 259h2v2h-2zM1132 259h2v2h-2zM1133 259h2v2h-2zM1134 259h2v2h-2zM1135 259h2v2h-2zM1136 260h2v2h-2zM1137 260h2v2h-2zM1138 260h2v2h-2zM1139 260h2v2h-2zM1140 260h2v3h-2zM1141 261h2v2h-2zM1142 261h2v2h-2zM1143 261h2v2h-2zM1144 261h2v3h-2zM1145 262h2v2h-2zM1146 262h2v2h-2zM1147 262h2v2h-2zM1148 262h2v3h-2zM1149 263h2v2h-2zM1150 263h2v2h-2zM1151 263h2v2h-2zM1152 264h2v2h-2zM1153 264h2v2h-2zM1154 264h2v2h-2zM1155 265h2v2h-2zM1156 265h2v2h-2zM1157 265h2v2h-2zM1158 266h2v2h-2zM1159 266h2v2h-2zM1160 266h2v2h-2zM1161 266h2v2h-2zM1162 266h2v3h-2zM1163 267h2v2h-2zM1164 267h2v2h-2zM1165 267h2v2h-2zM1166 267h2v2h-2zM1167 267h2v2h-2zM1168 267h2v3h-2zM1169 268h2v2h-2zM1170 268h2v2h-2zM1171 268h2v2h-2zM1172 268h2v2h-2zM1173 268h2v2h-2zM1174 268h2v3h-2zM1175 269h2v2h-2zM1176 269h2v2h-2zM1177 269h2v2h-2zM1178 269h2v2h-2zM1179 269h2v2h-2zM1180 270h2v2h-2zM1181 270h2v2h-2zM1182 270h2v2h-2zM1183 270h2v2h-2zM1184 270h2v2h-2zM1185 270h2v2h-2zM1186 271h2v2h-2zM1187 271h2v2h-2zM1188 271h2v2h-2zM1189 271h2v2h-2zM1190 271h2v2h-2zM1191 271h2v2h-2zM1192 272h2v2h-2zM1193 272h2v2h-2zM1194 272h2v2h-2zM1195 272h2v2h-2zM1196 272h2v2h-2zM1197 272h2v2h-2zM1198 273h2v2h-2zM1199 273h2v2h-2zM1200 273h2v2h-2zM1201 273h2v2h-2zM1202 274h2v2h-2zM1203 274h2v2h-2zM1204 274h2v2h-2zM1205 274h2v2h-2zM1206 275h2v2h-2zM1207 275h2v2h-2zM1208 275h2v2h-2zM1209 275h2v2h-2zM1210 276h2v2h-2zM1211 276h2v2h-2zM1212 276h2v2h-2zM1213 276h2v2h-2zM1214 276h2v3h-2zM1215 277h2v2h-2zM1216 277h2v2h-2zM1217 277h2v2h-2zM1218 277h2v2h-2zM1219 278h2v2h-2zM1220 278h2v2h-2zM1221 278h2v2h-2zM1222 278h2v2h-2zM1223 278h2v2h-2zM1224 278h2v2h-2zM1225 278h2v3h-2zM1226 279h2v2h-2zM1227 279h2v2h-2zM1228 279h2v2h-2zM1229 279h2v2h-2zM1230 279h2v2h-2zM1231 279h2v2h-2zM1232 279h2v3h-2zM1233 280h2v2h-2zM1234 280h2v2h-2zM1235 280h2v2h-2zM1236 280h2v2h-2zM1237 280h2v2h-2zM1238 280h2v3h-2zM1239 281h2v2h-2zM1240 281h2v2h-2zM1241 281h2v2h-2zM1242 281h2v2h-2zM1243 281h2v2h-2zM1244 281h2v2h-2zM1245 281h2v2h-2zM1246 281h2v2h-2zM1247 281h2v2h-2zM1248 280h2v3h-2zM1249 280h2v2h-2zM1250 280h2v2h-2zM1251 280h2v2h-2zM1252 280h2v2h-2zM1253 280h2v2h-2zM1254 280h2v2h-2zM1255 280h2v2h-2zM1256 280h2v2h-2zM1257 280h2v2h-2zM1258 280h2v2h-2zM1259 279h2v3h-2zM1260 279h2v2h-2zM1261 279h2v2h-2zM1262 278h2v2h-2zM1263 278h2v2h-2zM1264 278h2v2h-2zM1265 277h2v2h-2zM1266 277h2v2h-2zM1267 277h2v2h-2zM1268 276h2v3h-2zM1269 276h2v2h-2zM1270 276h2v2h-2zM1271 275h2v3h-2zM1272 275h2v2h-2zM1273 275h2v2h-2zM1274 275h2v2h-2zM1275 275h2v2h-2zM1276 274h2v3h-2zM1277 274h2v2h-2zM1278 274h2v2h-2zM1279 274h2v2h-2zM1280 274h2v2h-2zM1281 274h2v2h-2zM1282 274h2v2h-2zM1283 274h2v2h-2zM1284 273h2v3h-2zM1285 273h2v2h-2zM1286 273h2v2h-2zM1287 273h2v2h-2zM1288 273h2v2h-2zM1289 273h2v2h-2zM1290 273h2v2h-2zM1291 273h2v2h-2zM1292 273h2v2h-2zM1293 273h2v2h-2zM1294 273h2v2h-2zM1295 273h2v2h-2zM1296 273h2v2h-2zM1297 272h2v2h-2zM1298 272h2v2h-2zM1299 272h2v2h-2zM1300 272h2v2h-2zM1301 272h2v2h-2zM1302 272h2v2h-2zM1303 272h2v2h-2zM1304 272h2v2h-2zM1305 272h2v2h-2zM1306 272h2v2h-2zM1307 271h2v2h-2zM1308 271h2v2h-2zM1309 271h2v2h-2zM1310 271h2v2h-2zM1311 271h2v2h-2zM1312 271h2v2h-2zM1313 271h2v2h-2zM1314 271h2v2h-2zM1315 270h2v3h-2zM1316 270h2v2h-2zM1317 270h2v2h-2zM1318 270h2v2h-2zM1319 270h2v2h-2zM1320 270h2v2h-2zM1321 270h2v2h-2zM1322 269h2v2h-2zM1323 269h2v2h-2zM1324 269h2v2h-2zM1325 269h2v2h-2zM1326 269h2v2h-2zM1327 269h2v2h-2zM1328 269h2v2h-2zM1329 269h2v2h-2zM1330 268h2v2h-2zM1331 268h2v2h-2zM1332 268h2v2h-2zM1333 268h2v2h-2zM1334 268h2v2h-2zM1335 268h2v2h-2zM1336 268h2v2h-2zM1337 268h2v2h-2zM1338 268h2v2h-2zM1339 267h2v3h-2zM1340 267h2v2h-2zM1341 267h2v2h-2zM1342 267h2v2h-2zM1343 267h2v2h-2zM1344 267h2v2h-2zM1345 267h2v2h-2zM1346 267h2v2h-2zM1347 266h2v2h-2zM1348 266h2v2h-2zM1349 266h2v2h-2zM1350 265h2v2h-2zM1351 265h2v2h-2zM1352 265h2v2h-2zM1353 264h2v3h-2zM1354 264h2v2h-2zM1355 264h2v2h-2zM1356 263h2v3h-2zM1357 263h2v2h-2zM1358 263h2v2h-2zM1359 262h2v2h-2zM1360 262h2v2h-2zM1361 262h2v2h-2zM1362 261h2v2h-2zM1363 261h2v2h-2zM1364 260h2v3h-2zM1365 260h2v2h-2zM1366 260h2v2h-2zM1367 259h2v2h-2zM1368 259h2v2h-2zM1369 259h2v2h-2zM1370 258h2v3h-2zM1371 258h2v2h-2zM1372 258h2v2h-2zM1373 258h2v2h-2zM1374 257h2v2h-2zM1375 257h2v2h-2zM1376 257h2v2h-2zM1377 256h2v3h-2zM1378 256h2v2h-2zM1379 255h2v2h-2zM1380 254h2v3h-2zM1381 253h2v3h-2zM1382 252h2v3h-2zM1383 251h2v3h-2zM1384 250h2v3h-2zM1385 249h2v3h-2zM1386 249h2v2h-2zM1387 248h2v3h-2zM1388 248h2v2h-2zM1389 247h2v2h-2zM1390 246h2v3h-2zM1391 246h2v2h-2zM1392 245h2v2h-2zM1393 245h2v2h-2zM1394 245h2v2h-2zM1395 244h2v2h-2zM1396 244h2v2h-2zM1397 244h2v2h-2zM1398 243h2v2h-2zM1399 243h2v2h-2zM1400 243h2v2h-2zM1401 243h2v2h-2zM1402 242h2v2h-2zM1403 242h2v2h-2zM1404 242h2v2h-2zM1405 242h2v2h-2zM1406 242h2v2h-2zM1407 242h2v2h-2zM1408 242h2v2h-2zM1409 242h2v2h-2zM1410 242h2v2h-2zM1411 242h2v2h-2zM1412 242h2v2h-2zM1413 242h2v2h-2zM1414 242h2v2h-2zM1415 242h2v2h-2zM1416 242h2v2h-2zM1417 242h2v2h-2zM1418 242h2v2h-2zM1419 242h2v2h-2zM1420 242h2v2h-2zM1421 242h2v2h-2zM1422 241h2v2h-2zM1423 241h2v2h-2zM1424 241h2v2h-2zM1425 241h2v2h-2zM1426 241h2v2h-2zM1427 240h2v2h-2zM1428 240h2v2h-2zM1429 240h2v2h-2zM1430 240h2v2h-2zM1431 240h2v2h-2zM1432 240h2v2h-2zM1433 239h2v3h-2zM1434 239h2v2h-2zM1435 239h2v2h-2zM1436 239h2v2h-2zM1437 239h2v2h-2zM1438 239h2v2h-2zM1439 239h2v2h-2zM1440 239h2v2h-2zM1441 238h2v2h-2zM1442 238h2v2h-2zM1443 238h2v2h-2zM1444 238h2v2h-2zM1445 238h2v2h-2zM1446 238h2v2h-2zM1447 238h2v2h-2zM1448 238h2v2h-2zM1449 238h2v2h-2zM1450 238h2v2h-2zM1451 237h2v3h-2zM1452 237h2v2h-2zM1453 237h2v2h-2zM1454 236h2v3h-2zM1455 236h2v2h-2zM1456 236h2v2h-2zM1457 235h2v3h-2zM1458 235h2v2h-2zM1459 235h2v2h-2zM1460 234h2v3h-2zM1461 234h2v2h-2zM1462 234h2v2h-2zM1463 233h2v2h-2zM1464 233h2v2h-2zM1465 232h2v3h-2zM1466 232h2v2h-2zM1467 232h2v2h-2zM1468 231h2v3h-2zM1469 231h2v2h-2zM1470 231h2v2h-2zM1471 230h2v2h-2zM1472 230h2v2h-2zM1473 230h2v2h-2zM1474 229h2v2h-2zM1475 227h2v3h-2zM1476 226h2v3h-2zM1477 225h2v3h-2zM1478 224h2v3h-2zM1479 223h2v3h-2zM1480 222h2v3h-2zM1481 221h2v3h-2zM1482 220h2v3h-2zM1483 219h2v3h-2zM1484 219h2v2h-2zM1485 218h2v2h-2zM1486 217h2v2h-2zM1487 216h2v2h-2zM1488 215h2v2h-2zM1489 214h2v2h-2zM1490 213h2v3h-2zM1491 212h2v3h-2zM1492 211h2v3h-2zM1493 210h2v3h-2zM1494 210h2v2h-2zM1495 209h2v2h-2zM1496 208h2v3h-2zM1497 208h2v2h-2zM1498 207h2v2h-2zM1499 206h2v3h-2zM1500 206h2v2h-2zM1501 205h2v2h-2zM1502 204h2v3h-2zM1503 204h2v2h-2zM1504 203h2v2h-2zM1505 203h2v2h-2zM1506 202h2v3h-2zM1507 202h2v2h-2zM1508 201h2v3h-2zM1509 201h2v2h-2zM1510 201h2v2h-2zM1511 200h2v2h-2zM1512 200h2v2h-2zM1513 199h2v2h-2zM1514 199h2v2h-2zM1515 198h2v3h-2zM1516 198h2v2h-2zM1517 198h2v2h-2zM1518 198h2v2h-2zM1519 197h2v3h-2zM1520 197h2v2h-2zM1521 197h2v2h-2zM1522 197h2v2h-2zM1523 197h2v2h-2zM1524 197h2v2h-2zM1525 197h2v2h-2zM1526 197h2v2h-2zM1527 197h2v2h-2zM1528 197h2v2h-2zM1529 196h2v2h-2zM1530 196h2v2h-2zM1531 196h2v2h-2zM1532 196h2v2h-2zM1533 196h2v2h-2zM1534 196h2v2h-2zM1535 195h2v3h-2zM1536 195h2v2h-2zM1537 195h2v2h-2zM1538 195h2v2h-2zM1539 195h2v2h-2zM1540 195h2v2h-2zM1541 194h2v2h-2zM1542 194h2v2h-2zM1543 194h2v2h-2zM1544 194h2v2h-2zM1545 194h2v2h-2zM1546 194h2v2h-2zM1547 194h2v2h-2zM1548 194h2v2h-2zM1549 193h2v2h-2zM1550 193h2v2h-2zM1551 193h2v2h-2zM1552 193h2v2h-2zM1553 193h2v2h-2zM1554 193h2v2h-2zM1555 193h2v2h-2zM1556 193h2v2h-2zM1557 193h2v2h-2zM1558 192h2v2h-2zM1559 192h2v2h-2zM1560 192h2v2h-2zM1561 192h2v2h-2zM1562 191h2v2h-2zM1563 191h2v2h-2zM1564 191h2v2h-2zM1565 191h2v2h-2zM1566 190h2v2h-2zM1567 190h2v2h-2zM1568 190h2v2h-2zM1569 189h2v2h-2zM1570 189h2v2h-2zM1571 188h2v2h-2zM1572 188h2v2h-2zM1573 187h2v2h-2zM1574 187h2v2h-2zM1575 186h2v2h-2zM1576 186h2v2h-2zM1577 185h2v2h-2zM1578 184h2v3h-2zM1579 184h2v2h-2zM1580 183h2v2h-2zM1581 182h2v3h-2zM1582 181h2v3h-2zM1583 181h2v2h-2zM1584 180h2v2h-2zM1585 179h2v3h-2zM1586 178h2v3h-2zM1587 178h2v2h-2zM1588 177h2v2h-2zM1589 176h2v2h-2zM1590 175h2v2h-2zM1591 174h2v2h-2zM1592 173h2v3h-2zM1593 172h2v3h-2zM1594 171h2v3h-2zM1595 171h2v2h-2zM1596 170h2v2h-2zM1597 169h2v3h-2zM1598 168h2v3h-2zM1599 168h2v2h-2zM1600 167h2v2h-2zM1601 166h2v3h-2zM1602 165h2v3h-2zM1603 165h2v2h-2zM1604 164h2v2h-2zM1605 163h2v3h-2zM1606 162h2v3h-2zM1607 162h2v2h-2z"/><path fill="#ffffff" d="M0 355h2v3h-2zM1 356h2v3h-2zM2 357h2v3h-2zM3 359h2v2h-2zM4 360h2v2h-2zM5 361h2v2h-2zM6 362h2v2h-2zM7 363h2v3h-2zM8 364h2v3h-2zM9 365h2v3h-2zM10 366h2v3h-2zM11 368h2v2h-2zM12 369h2v3h-2zM13 370h2v2h-2zM14 371h2v2h-2zM15 372h2v2h-2zM16 372h2v3h-2zM17 373h2v3h-2zM18 374h2v2h-2zM19 375h2v2h-2zM20 376h2v2h-2zM21 376h2v2h-2zM22 377h2v2h-2zM23 377h2v2h-2zM24 378h2v2h-2zM25 378h2v2h-2zM26 379h2v2h-2zM27 379h2v2h-2zM28 380h2v2h-2zM29 380h2v2h-2zM30 381h2v2h-2zM31 381h2v2h-2zM32 381h2v2h-2zM33 382h2v2h-2zM34 382h2v2h-2zM35 382h2v2h-2zM36 382h2v2h-2zM37 383h2v2h-2zM38 383h2v2h-2zM39 383h2v2h-2zM40 383h2v2h-2zM41 383h2v2h-2zM42 383h2v2h-2zM43 383h2v2h-2zM44 383h2v2h-2zM45 383h2v2h-2zM46 383h2v2h-2zM47 383h2v2h-2zM48 383h2v2h-2zM49 383h2v2h-2zM50 383h2v2h-2zM51 382h2v2h-2zM52 382h2v2h-2zM53 381h2v3h-2zM54 381h2v2h-2zM55 381h2v2h-2zM56 380h2v2h-2zM57 380h2v2h-2zM58 379h2v3h-2zM59 379h2v2h-2zM60 379h2v2h-2zM61 379h2v2h-2zM62 378h2v2h-2zM63 378h2v2h-2zM64 378h2v2h-2zM65 378h2v2h-2zM66 378h2v2h-2zM67 378h2v2h-2zM68 377h2v2h-2zM69 377h2v2h-2zM70 377h2v2h-2zM71 377h2v2h-2zM72 377h2v2h-2zM73 377h2v2h-2zM74 377h2v2h-2zM75 377h2v2h-2zM76 377h2v2h-2zM77 377h2v2h-2zM78 377h2v2h-2zM79 377h2v2h-2zM80 377h2v3h-2zM81 377h2v2h-2zM82 377h2v2h-2zM83 377h2v2h-2zM84 377h2v2h-2zM85 377h2v2h-2zM86 377h2v2h-2zM87 377h2v2h-2zM88 377h2v2h-2zM89 378h2v2h-2zM90 378h2v2h-2zM91 379h2v2h-2zM92 379h2v2h-2zM93 380h2v2h-2zM94 380h2v2h-2zM95 381h2v2h-2zM96 381h2v2h-2zM97 382h2v2h-2zM98 382h2v3h-2zM99 383h2v2h-2zM100 383h2v3h-2zM101 384h2v2h-2zM102 385h2v2h-2zM103 385h2v2h-2zM104 385h2v2h-2zM105 385h2v2h-2zM106 385h2v2h-2zM107 385h2v2h-2zM108 385h2v2h-2zM109 386h2v2h-2zM110 386h2v2h-2zM111 386h2v2h-2zM112 386h2v2h-2zM113 386h2v2h-2zM114 386h2v2h-2zM115 386h2v2h-2zM116 385h2v2h-2zM117 385h2v2h-2zM118 385h2v2h-2zM119 385h2v2h-2zM120 385h2v2h-2zM121 385h2v2h-2zM122 385h2v2h-2zM123 384h2v3h-2zM124 384h2v2h-2zM125 384h2v2h-2zM126 384h2v2h-2zM127 384h2v2h-2zM128 383h2v2h-2zM129 383h2v2h-2zM130 383h2v2h-2zM131 383h2v2h-2zM132 383h2v2h-2zM133 383h2v2h-2zM134 383h2v2h-2zM135 383h2v2h-2zM136 383h2v2h-2zM137 383h2v2h-2zM138 383h2v2h-2zM139 383h2v2h-2zM140 383h2v2h-2zM141 383h2v2h-2zM142 383h2v2h-2zM143 384h2v2h-2zM144 384h2v2h-2zM145 384h2v2h-2zM146 384h2v2h-2zM147 384h2v2h-2zM148 384h2v2h-2zM149 384h2v3h-2zM150 385h2v2h-2zM151 385h2v2h-2zM152 386h2v2h-2zM153 386h2v2h-2zM154 386h2v2h-2zM155 387h2v2h-2zM156 387h2v2h-2zM157 387h2v3h-2zM158 388h2v2h-2zM159 388h2v2h-2zM160 389h2v2h-2zM161 389h2v2h-2zM162 389h2v3h-2zM163 390h2v2h-2zM164 390h2v2h-2zM165 391h2v2h-2zM166 391h2v2h-2zM167 391h2v2h-2zM168 392h2v2h-2zM169 392h2v2h-2zM170 392h2v2h-2zM171 392h2v3h-2zM172 393h2v2h-2zM173 393h2v2h-2zM174 393h2v3h-2zM175 394h2v2h-2zM176 394h2v2h-2zM177 395h2v2h-2zM178 395h2v3h-2zM179 396h2v2h-2zM180 397h2v2h-2zM181 398h2v2h-2zM182 398h2v3h-2zM183 399h2v2h-2zM184 400h2v2h-2zM185 400h2v3h-2zM186 401h2v2h-2zM187 402h2v2h-2zM188 402h2v3h-2zM189 403h2v3h-2zM190 404h2v2h-2zM191 405h2v2h-2zM192 405h2v3h-2zM193 406h2v3h-2zM194 407h2v2h-2zM195 408h2v2h-2zM196 408h2v3h-2zM197 409h2v3h-2zM198 410h2v2h-2zM199 411h2v2h-2zM200 411h2v3h-2zM201 412h2v3h-2zM202 413h2v2h-2zM203 414h2v2h-2zM204 414h2v3h-2zM205 415h2v3h-2zM206 416h2v2h-2zM207 417h2v2h-2zM208 417h2v2h-2zM209 418h2v2h-2zM210 418h2v2h-2zM211 419h2v2h-2zM212 419h2v2h-2zM213 420h2v2h-2zM214 420h2v2h-2zM215 420h2v2h-2zM216 420h2v2h-2zM217 420h2v2h-2zM218 420h2v2h-2zM219 420h2v2h-2zM220 420h2v2h-2zM221 420h2v3h-2zM222 420h2v2h-2zM223 420h2v2h-2zM224 420h2v2h-2zM225 420h2v2h-2zM226 420h2v2h-2zM227 420h2v2h-2zM228 419h2v2h-2zM229 419h2v2h-2zM230 419h2v2h-2zM231 419h2v2h-2zM232 419h2v2h-2zM233 418h2v3h-2zM234 418h2v2h-2zM235 418h2v2h-2zM236 418h2v2h-2zM237 417h2v3h-2zM238 417h2v2h-2zM239 417h2v2h-2zM240 417h2v2h-2zM241 416h2v3h-2zM242 416h2v2h-2zM243 416h2v2h-2zM244 416h2v2h-2zM245 416h2v2h-2zM246 416h2v2h-2zM247 416h2v2h-2zM248 416h2v2h-2zM249 416h2v2h-2zM250 416h2v2h-2zM251 416h2v2h-2zM252 416h2v2h-2zM253 416h2v2h-2zM254 416h2v2h-2zM255 416h2v2h-2zM256 417h2v2h-2zM257 417h2v2h-2zM258 417h2v2h-2zM259 417h2v2h-2zM260 418h2v2h-2zM261 418h2v2h-2zM262 418h2v3h-2zM263 419h2v2h-2zM264 419h2v2h-2zM265 419h2v3h-2zM266 420h2v2h-2zM267 420h2v3h-2zM268 421h2v2h-2zM269 421h2v2h-2zM270 422h2v2h-2zM271 422h2v2h-2zM272 423h2v2h-2zM273 423h2v2h-2zM274 424h2v2h-2zM275 424h2v2h-2zM276 425h2v2h-2zM277 425h2v2h-2zM278 426h2v2h-2zM279 426h2v2h-2zM280 426h2v3h-2zM281 427h2v2h-2zM282 427h2v3h-2zM283 428h2v2h-2zM284 428h2v2h-2zM285 429h2v2h-2zM286 429h2v2h-2zM287 429h2v3h-2zM288 430h2v2h-2zM289 430h2v2h-2zM290 430h2v2h-2zM291 430h2v3h-2zM292 431h2v2h-2zM293 431h2v2h-2zM294 431h2v2h-2zM295 431h2v3h-2zM296 432h2v2h-2zM297 432h2v2h-2zM298 432h2v2h-2zM299 432h2v2h-2zM300 432h2v2h-2zM301 432h2v2h-2zM302 432h2v2h-2zM303 432h2v2h-2zM304 432h2v2h-2zM305 431h2v3h-2zM306 431h2v2h-2zM307 430h2v2h-2zM308 429h2v3h-2zM309 429h2v2h-2zM310 428h2v2h-2zM311 427h2v3h-2zM312 426h2v3h-2zM313 424h2v3h-2zM314 423h2v3h-2zM315 421h2v3h-2zM316 419h2v4h-2zM317 416h2v4h-2zM318 412h2v5h-2zM319 408h2v5h-2zM320 405h2v4h-2zM321 402h2v4h-2zM322 399h2v4h-2zM323 396h2v4h-2zM324 394h2v3h-2zM325 393h2v2h-2zM326 392h2v2h-2zM327 391h2v2h-2zM328 390h2v2h-2zM329 389h2v2h-2zM330 388h2v2h-2zM331 388h2v2h-2zM332 387h2v2h-2zM333 386h2v3h-2zM334 386h2v2h-2zM335 385h2v3h-2zM336 385h2v2h-2zM337 384h2v3h-2zM338 384h2v2h-2zM339 384h2v2h-2zM340 384h2v2h-2zM341 383h2v2h-2zM342 383h2v2h-2zM343 383h2v2h-2zM344 383h2v2h-2zM345 382h2v2h-2zM346 382h2v2h-2zM347 382h2v2h-2zM348 382h2v2h-2zM349 382h2v2h-2zM350 382h2v2h-2zM351 381h2v2h-2zM352 381h2v2h-2zM353 381h2v2h-2zM354 381h2v2h-2zM355 381h2v2h-2zM356 381h2v2h-2zM357 380h2v3h-2zM358 380h2v2h-2zM359 379h2v3h-2zM360 379h2v2h-2zM361 378h2v3h-2zM362 378h2v2h-2zM363 377h2v3h-2zM364 377h2v2h-2zM365 376h2v2h-2zM366 375h2v3h-2zM367 375h2v2h-2zM368 374h2v2h-2zM369 373h2v3h-2zM370 373h2v2h-2zM371 372h2v2h-2zM372 371h2v2h-2zM373 371h2v2h-2zM374 370h2v3h-2zM375 370h2v2h-2zM376 369h2v3h-2zM377 369h2v2h-2zM378 369h2v2h-2zM379 368h2v2h-2zM380 368h2v2h-2zM381 368h2v2h-2zM382 368h2v2h-2zM383 368h2v2h-2zM384 368h2v2h-2zM385 368h2v2h-2zM386 368h2v2h-2zM387 368h2v2h-2zM388 368h2v2h-2zM389 368h2v2h-2zM390 368h2v2h-2zM391 368h2v2h-2zM392 368h2v2h-2zM393 368h2v2h-2zM394 368h2v2h-2zM395 368h2v2h-2zM396 368h2v2h-2zM397 368h2v3h-2zM398 369h2v2h-2zM399 369h2v2h-2zM400 370h2v2h-2zM401 370h2v2h-2zM402 371h2v2h-2zM403 371h2v2h-2zM404 372h2v2h-2zM405 372h2v2h-2zM406 373h2v2h-2zM407 373h2v2h-2zM408 373h2v3h-2zM409 374h2v2h-2zM410 374h2v2h-2zM411 375h2v2h-2zM412 375h2v2h-2zM413 375h2v3h-2zM414 375h2v2h-2zM415 375h2v2h-2zM416 374h2v2h-2zM417 374h2v2h-2zM418 373h2v3h-2zM419 373h2v2h-2zM420 372h2v3h-2zM421 372h2v2h-2zM422 371h2v2h-2zM423 371h2v2h-2zM424 370h2v2h-2zM425 369h2v3h-2zM426 369h2v2h-2zM427 369h2v2h-2zM428 368h2v2h-2zM429 368h2v2h-2zM430 367h2v2h-2zM431 367h2v2h-2zM432 366h2v3h-2zM433 366h2v2h-2zM434 366h2v2h-2zM435 365h2v2h-2zM436 365h2v2h-2zM437 364h2v2h-2zM438 363h2v3h-2zM439 363h2v2h-2zM440 362h2v2h-2zM441 361h2v3h-2zM442 361h2v2h-2zM443 360h2v2h-2zM444 359h2v2h-2zM445 358h2v3h-2zM446 358h2v2h-2zM447 357h2v2h-2zM448 356h2v2h-2zM449 355h2v3h-2zM450 354h2v3h-2zM451 354h2v2h-2zM452 353h2v2h-2zM453 353h2v2h-2zM454 353h2v2h-2zM455 353h2v2h-2zM456 353h2v2h-2zM457 353h2v3h-2zM458 354h2v2h-2zM459 354h2v3h-2zM460 355h2v2h-2zM461 355h2v3h-2zM462 356h2v2h-2zM463 356h2v3h-2zM464 357h2v2h-2zM465 357h2v2h-2zM466 358h2v2h-2zM467 358h2v2h-2zM468 358h2v3h-2zM469 359h2v2h-2zM470 359h2v2h-2zM471 358h2v3h-2zM472 358h2v2h-2zM473 357h2v2h-2zM474 357h2v2h-2zM475 357h2v2h-2zM476 356h2v2h-2zM477 356h2v2h-2zM478 356h2v2h-2zM479 355h2v3h-2zM480 355h2v2h-2zM481 356h2v2h-2zM482 356h2v2h-2zM483 356h2v2h-2zM484 357h2v2h-2zM485 357h2v2h-2zM486 357h2v2h-2zM487 357h2v2h-2zM488 357h2v2h-2zM489 357h2v3h-2zM490 358h2v2h-2zM491 358h2v2h-2zM492 358h2v2h-2zM493 358h2v2h-2zM494 358h2v2h-2zM495 358h2v2h-2zM496 358h2v2h-2zM497 358h2v2h-2zM498 358h2v2h-2zM499 358h2v2h-2zM500 358h2v2h-2zM501 358h2v2h-2zM502 358h2v2h-2zM503 358h2v2h-2zM504 358h2v2h-2zM505 358h2v2h-2zM506 358h2v2h-2zM507 358h2v2h-2zM508 358h2v2h-2zM509 358h2v2h-2zM510 357h2v2h-2zM511 356h2v3h-2zM512 356h2v2h-2zM513 355h2v2h-2zM514 354h2v3h-2zM515 354h2v2h-2zM516 353h2v2h-2zM517 352h2v3h-2zM518 352h2v2h-2zM519 351h2v2h-2zM520 350h2v3h-2zM521 350h2v2h-2zM522 349h2v2h-2zM523 348h2v2h-2zM524 347h2v2h-2zM525 346h2v3h-2zM526 345h2v3h-2zM527 344h2v3h-2zM528 343h2v3h-2zM529 343h2v2h-2zM530 342h2v2h-2zM531 341h2v2h-2zM532 340h2v3h-2zM533 340h2v2h-2zM534 339h2v2h-2zM535 338h2v2h-2zM536 336h2v3h-2zM537 334h2v3h-2zM538 331h2v4h-2zM539 329h2v3h-2zM540 327h2v3h-2zM541 324h2v4h-2zM542 321h2v4h-2zM543 318h2v4h-2zM544 315h2v4h-2zM545 312h2v4h-2zM546 309h2v4h-2zM547 306h2v4h-2zM548 304h2v3h-2zM549 302h2v3h-2zM550 300h2v3h-2zM551 297h2v4h-2zM552 295h2v3h-2zM553 294h2v3h-2zM554 293h2v3h-2zM555 292h2v3h-2zM556 291h2v3h-2zM557 290h2v3h-2zM558 290h2v2h-2zM559 290h2v2h-2zM560 290h2v2h-2zM561 289h2v3h-2zM562 289h2v2h-2zM563 289h2v2h-2zM564 290h2v2h-2zM565 290h2v2h-2zM566 291h2v2h-2zM567 291h2v3h-2zM568 292h2v2h-2zM569 292h2v2h-2zM570 292h2v2h-2zM571 293h2v2h-2zM572 293h2v2h-2zM573 293h2v2h-2zM574 293h2v2h-2zM575 293h2v2h-2zM576 293h2v2h-2zM577 293h2v2h-2zM578 293h2v2h-2zM579 293h2v2h-2zM580 293h2v2h-2zM581 293h2v2h-2zM582 294h2v2h-2zM583 294h2v2h-2zM584 294h2v2h-2zM585 295h2v2h-2zM586 295h2v3h-2zM587 296h2v2h-2zM588 297h2v2h-2zM589 297h2v2h-2zM590 298h2v2h-2zM591 298h2v3h-2zM592 299h2v2h-2zM593 299h2v2h-2zM594 299h2v2h-2zM595 299h2v2h-2zM596 299h2v2h-2zM597 299h2v2h-2zM598 299h2v3h-2zM599 300h2v2h-2zM600 300h2v2h-2zM601 300h2v2h-2zM602 300h2v2h-2zM603 300h2v2h-2zM604 300h2v2h-2zM605 300h2v2h-2zM606 300h2v2h-2zM607 300h2v2h-2zM608 301h2v2h-2zM609 301h2v2h-2zM610 301h2v2h-2zM611 301h2v2h-2zM612 301h2v2h-2zM613 302h2v3h-2zM614 303h2v3h-2zM615 304h2v3h-2zM616 306h2v2h-2zM617 307h2v3h-2zM618 308h2v3h-2zM619 309h2v3h-2zM620 311h2v2h-2zM621 312h2v2h-2zM622 313h2v3h-2zM623 314h2v3h-2zM624 316h2v2h-2zM625 317h2v2h-2zM626 318h2v3h-2zM627 319h2v3h-2zM628 320h2v3h-2zM629 321h2v3h-2zM630 323h2v2h-2zM631 324h2v2h-2zM632 325h2v3h-2zM633 326h2v3h-2zM634 327h2v3h-2zM635 328h2v2h-2zM636 329h2v2h-2zM637 330h2v2h-2zM638 331h2v2h-2zM639 331h2v2h-2zM640 331h2v3h-2zM641 332h2v2h-2zM642 332h2v2h-2zM643 332h2v2h-2zM644 332h2v2h-2zM645 332h2v2h-2zM646 333h2v2h-2zM647 333h2v2h-2zM648 333h2v2h-2zM649 333h2v2h-2zM650 333h2v2h-2zM651 333h2v2h-2zM652 333h2v2h-2zM653 333h2v2h-2zM654 333h2v2h-2zM655 333h2v2h-2zM656 333h2v2h-2zM657 332h2v2h-2zM658 331h2v2h-2zM659 330h2v3h-2zM660 329h2v3h-2zM661 329h2v2h-2zM662 328h2v2h-2zM663 327h2v2h-2zM664 326h2v2h-2zM665 325h2v3h-2zM666 324h2v3h-2zM667 323h2v3h-2zM668 323h2v2h-2zM669 322h2v2h-2zM670 321h2v2h-2zM671 320h2v3h-2zM672 319h2v3h-2zM673 319h2v2h-2zM674 318h2v2h-2zM675 317h2v2h-2zM676 317h2v2h-2zM677 316h2v2h-2zM678 316h2v2h-2zM679 315h2v2h-2zM680 315h2v2h-2zM681 314h2v2h-2zM682 313h2v2h-2zM683 311h2v3h-2zM684 310h2v3h-2zM685 309h2v3h-2zM686 308h2v2h-2zM687 306h2v3h-2zM688 305h2v3h-2zM689 304h2v3h-2zM690 303h2v2h-2zM691 301h2v3h-2zM692 300h2v3h-2zM693 299h2v3h-2zM694 298h2v2h-2zM695 297h2v2h-2zM696 295h2v3h-2zM697 294h2v3h-2zM698 293h2v2h-2zM699 292h2v2h-2zM700 291h2v2h-2zM701 290h2v2h-2zM702 289h2v3h-2zM703 289h2v2h-2zM704 288h2v3h-2zM705 288h2v2h-2zM706 287h2v2h-2zM707 286h2v2h-2zM708 285h2v2h-2zM709 284h2v2h-2zM710 283h2v2h-2zM711 282h2v2h-2zM712 281h2v2h-2zM713 280h2v2h-2zM714 279h2v3h-2zM715 278h2v3h-2zM716 277h2v3h-2zM717 277h2v2h-2zM718 276h2v2h-2zM719 276h2v2h-2zM720 275h2v3h-2zM721 275h2v2h-2zM722 274h2v3h-2zM723 274h2v2h-2zM724 274h2v2h-2zM725 273h2v2h-2zM726 273h2v2h-2zM727 273h2v2h-2zM728 272h2v3h-2zM729 272h2v2h-2zM730 272h2v2h-2zM731 272h2v2h-2zM732 271h2v3h-2zM733 271h2v2h-2zM734 271h2v2h-2zM735 271h2v2h-2zM736 271h2v2h-2zM737 271h2v2h-2zM738 271h2v2h-2zM739 271h2v2h-2zM740 271h2v2h-2zM741 271h2v2h-2zM742 271h2v2h-2zM743 271h2v2h-2zM744 271h2v2h-2zM745 271h2v2h-2zM746 271h2v2h-2zM747 271h2v2h-2zM748 271h2v2h-2zM749 270h2v2h-2zM750 270h2v2h-2zM751 270h2v2h-2zM752 269h2v2h-2zM753 269h2v2h-2zM754 267h2v3h-2zM755 266h2v2h-2zM756 264h2v3h-2zM757 263h2v2h-2zM758 261h2v3h-2zM759 259h2v3h-2zM760 256h2v4h-2zM761 253h2v4h-2zM762 250h2v4h-2zM763 247h2v4h-2zM764 245h2v3h-2zM765 242h2v4h-2zM766 239h2v4h-2zM767 237h2v3h-2zM768 234h2v4h-2zM769 231h2v4h-2zM770 229h2v3h-2zM771 226h2v4h-2zM772 223h2v4h-2zM773 220h2v4h-2zM774 215h2v6h-2zM775 211h2v5h-2zM776 207h2v5h-2zM777 202h2v6h-2zM778 198h2v5h-2zM779 193h2v6h-2zM780 191h2v3h-2zM781 188h2v4h-2zM782 186h2v3h-2zM783 184h2v3h-2zM784 182h2v3h-2zM785 181h2v3h-2zM786 179h2v3h-2zM787 178h2v2h-2zM788 178h2v2h-2zM789 178h2v2h-2zM790 178h2v2h-2zM791 178h2v2h-2zM792 178h2v2h-2zM793 178h2v2h-2zM794 178h2v2h-2zM795 178h2v2h-2zM796 178h2v2h-2zM797 178h2v2h-2zM798 178h2v2h-2zM799 177h2v3h-2zM800 177h2v2h-2zM801 177h2v2h-2zM802 176h2v3h-2zM803 176h2v2h-2zM804 175h2v3h-2zM805 174h2v3h-2zM806 173h2v3h-2zM807 172h2v3h-2zM808 172h2v2h-2zM809 171h2v2h-2zM810 169h2v3h-2zM811 168h2v3h-2zM812 167h2v2h-2zM813 165h2v3h-2zM814 164h2v3h-2zM815 162h2v3h-2zM816 161h2v3h-2zM817 159h2v3h-2zM818 158h2v3h-2zM819 157h2v2h-2zM820 156h2v2h-2zM821 155h2v2h-2zM822 154h2v2h-2zM823 153h2v2h-2zM824 153h2v2h-2zM825 152h2v2h-2zM826 152h2v2h-2zM827 152h2v2h-2zM828 152h2v2h-2zM829 151h2v2h-2zM830 151h2v2h-2zM831 151h2v2h-2zM832 151h2v2h-2zM833 151h2v2h-2zM834 151h2v2h-2zM835 151h2v2h-2zM836 150h2v2h-2zM837 150h2v2h-2zM838 149h2v2h-2zM839 149h2v2h-2zM840 148h2v2h-2zM841 148h2v2h-2zM842 147h2v2h-2zM843 146h2v3h-2zM844 145h2v3h-2zM845 144h2v3h-2zM846 143h2v3h-2zM847 142h2v3h-2zM848 141h2v3h-2zM849 140h2v3h-2zM850 139h2v3h-2zM851 138h2v3h-2zM852 137h2v3h-2zM853 136h2v3h-2zM854 135h2v3h-2zM855 135h2v2h-2zM856 134h2v2h-2zM857 134h2v2h-2zM858 134h2v2h-2zM859 134h2v2h-2zM860 134h2v2h-2zM861 134h2v2h-2zM862 135h2v2h-2zM863 136h2v2h-2zM864 136h2v3h-2zM865 137h2v3h-2zM866 138h2v3h-2zM867 139h2v2h-2zM868 140h2v2h-2zM869 141h2v2h-2zM870 141h2v3h-2zM871 142h2v3h-2zM872 143h2v3h-2zM873 144h2v3h-2zM874 145h2v3h-2zM875 146h2v3h-2zM876 147h2v3h-2zM877 148h2v3h-2zM878 149h2v3h-2zM879 150h2v2h-2zM880 151h2v2h-2zM881 152h2v2h-2zM882 152h2v3h-2zM883 153h2v2h-2zM884 154h2v2h-2zM885 155h2v2h-2zM886 155h2v3h-2zM887 156h2v3h-2zM888 157h2v3h-2zM889 158h2v3h-2zM890 159h2v3h-2zM891 161h2v2h-2zM892 162h2v2h-2zM893 163h2v2h-2zM894 164h2v3h-2zM895 165h2v3h-2zM896 166h2v3h-2zM897 167h2v3h-2zM898 169h2v2h-2zM899 169h2v3h-2zM900 170h2v3h-2zM901 171h2v3h-2zM902 172h2v2h-2zM903 173h2v2h-2zM904 174h2v2h-2zM905 175h2v2h-2zM906 175h2v3h-2zM907 176h2v3h-2zM908 177h2v3h-2zM909 178h2v5h-2zM910 182h2v5h-2zM911 186h2v5h-2zM912 190h2v6h-2zM913 195h2v5h-2zM914 199h2v6h-2zM915 204h2v3h-2zM916 206h2v4h-2zM917 209h2v3h-2zM918 211h2v3h-2zM919 213h2v4h-2zM920 216h2v2h-2zM921 217h2v3h-2zM922 219h2v2h-2zM923 220h2v3h-2zM924 222h2v2h-2zM925 223h2v3h-2zM926 225h2v2h-2zM927 226h2v2h-2zM928 227h2v2h-2zM929 228h2v2h-2zM930 229h2v2h-2zM931 230h2v2h-2zM932 231h2v2h-2zM933 232h2v2h-2zM934 233h2v2h-2zM935 234h2v2h-2zM936 234h2v3h-2zM937 235h2v2h-2zM938 235h2v3h-2zM939 236h2v2h-2zM940 237h2v2h-2zM941 237h2v3h-2zM942 238h2v2h-2zM943 238h2v3h-2zM944 239h2v3h-2zM945 240h2v3h-2zM946 241h2v3h-2zM947 242h2v3h-2zM948 243h2v3h-2zM949 244h2v3h-2zM950 245h2v3h-2zM951 246h2v3h-2zM952 248h2v2h-2zM953 249h2v2h-2zM954 250h2v2h-2zM955 251h2v2h-2zM956 252h2v3h-2zM957 253h2v2h-2zM958 254h2v2h-2zM959 254h2v2h-2zM960 254h2v2h-2zM961 255h2v2h-2zM962 255h2v2h-2zM963 255h2v2h-2zM964 256h2v2h-2zM965 256h2v2h-2zM966 256h2v2h-2zM967 257h2v2h-2zM968 257h2v2h-2zM969 257h2v2h-2zM970 257h2v2h-2zM971 258h2v2h-2zM972 258h2v2h-2zM973 258h2v2h-2zM974 258h2v2h-2zM975 259h2v2h-2zM976 259h2v2h-2zM977 259h2v3h-2zM978 260h2v2h-2zM979 260h2v3h-2zM980 261h2v2h-2zM981 261h2v3h-2zM982 262h2v2h-2zM983 262h2v3h-2zM984 263h2v2h-2zM985 263h2v2h-2zM986 264h2v2h-2zM987 264h2v2h-2zM988 264h2v2h-2zM989 264h2v2h-2zM990 264h2v2h-2zM991 264h2v2h-2zM992 264h2v2h-2zM993 264h2v2h-2zM994 263h2v2h-2zM995 263h2v2h-2zM996 263h2v2h-2zM997 262h2v3h-2zM998 262h2v2h-2zM999 262h2v2h-2zM1000 261h2v2h-2zM1001 260h2v3h-2zM1002 260h2v2h-2zM1003 259h2v2h-2zM1004 258h2v2h-2zM1005 257h2v3h-2zM1006 256h2v3h-2zM1007 256h2v2h-2zM1008 256h2v2h-2zM1009 255h2v2h-2zM1010 255h2v2h-2zM1011 254h2v2h-2zM1012 254h2v2h-2zM1013 253h2v2h-2zM1014 253h2v2h-2zM1015 252h2v2h-2zM1016 252h2v2h-2zM1017 251h2v2h-2zM1018 251h2v2h-2zM1019 250h2v2h-2zM1020 250h2v2h-2zM1021 249h2v3h-2zM1022 249h2v2h-2zM1023 249h2v2h-2zM1024 248h2v2h-2zM1025 248h2v2h-2zM1026 248h2v2h-2zM1027 248h2v2h-2zM1028 248h2v2h-2zM1029 248h2v2h-2zM1030 249h2v2h-2zM1031 249h2v2h-2zM1032 250h2v2h-2zM1033 250h2v2h-2zM1034 251h2v2h-2zM1035 251h2v2h-2zM1036 251h2v3h-2zM1037 252h2v2h-2zM1038 252h2v2h-2zM1039 253h2v2h-2zM1040 253h2v2h-2zM1041 253h2v3h-2zM1042 254h2v2h-2zM1043 254h2v3h-2zM1044 255h2v2h-2zM1045 255h2v3h-2zM1046 256h2v2h-2zM1047 256h2v3h-2zM1048 257h2v2h-2zM1049 257h2v3h-2zM1050 258h2v2h-2zM1051 258h2v3h-2zM1052 259h2v2h-2zM1053 259h2v3h-2zM1054 260h2v2h-2zM1055 260h2v3h-2zM1056 261h2v2h-2zM1057 261h2v2h-2zM1058 262h2v2h-2zM1059 262h2v2h-2zM1060 262h2v3h-2zM1061 263h2v2h-2zM1062 263h2v2h-2zM1063 264h2v2h-2zM1064 264h2v2h-2zM1065 264h2v2h-2zM1066 264h2v3h-2zM1067 265h2v2h-2zM1068 265h2v2h-2zM1069 265h2v2h-2zM1070 265h2v2h-2zM1071 265h2v3h-2zM1072 266h2v2h-2zM1073 266h2v2h-2zM1074 267h2v2h-2zM1075 267h2v2h-2zM1076 267h2v3h-2zM1077 268h2v2h-2zM1078 268h2v2h-2zM1079 268h2v2h-2zM1080 268h2v2h-2zM1081 268h2v2h-2zM1082 268h2v2h-2zM1083 268h2v2h-2zM1084 268h2v2h-2zM1085 268h2v2h-2zM1086 268h2v2h-2zM1087 268h2v2h-2zM1088 268h2v2h-2zM1089 268h2v2h-2zM1090 268h2v2h-2zM1091 268h2v2h-2zM1092 268h2v2h-2zM1093 268h2v2h-2zM1094 268h2v2h-2zM1095 268h2v2h-2zM1096 268h2v2h-2zM1097 268h2v2h-2zM1098 268h2v2h-2zM1099 267h2v2h-2zM1100 267h2v2h-2zM1101 267h2v2h-2zM1102 267h2v2h-2zM1103 267h2v2h-2zM1104 267h2v2h-2zM1105 267h2v2h-2zM1106 267h2v2h-2zM1107 268h2v2h-2zM1108 268h2v2h-2zM1109 268h2v2h-2zM1110 268h2v2h-2zM1111 268h2v3h-2zM1112 269h2v2h-2zM1113 269h2v2h-2zM1114 269h2v3h-2zM1115 270h2v2h-2zM1116 270h2v2h-2zM1117 270h2v2h-2zM1118 270h2v2h-2zM1119 270h2v3h-2zM1120 271h2v2h-2zM1121 271h2v2h-2zM1122 271h2v2h-2zM1123 271h2v2h-2zM1124 271h2v2h-2zM1125 271h2v3h-2zM1126 272h2v2h-2zM1127 272h2v2h-2zM1128 272h2v2h-2zM1129 272h2v3h-2zM1130 273h2v2h-2zM1131 273h2v2h-2zM1132 273h2v2h-2zM1133 273h2v3h-2zM1134 274h2v2h-2zM1135 274h2v2h-2zM1136 274h2v2h-2zM1137 274h2v2h-2zM1138 274h2v2h-2zM1139 275h2v2h-2zM1140 275h2v2h-2zM1141 275h2v2h-2zM1142 275h2v2h-2zM1143 275h2v2h-2zM1144 275h2v3h-2zM1145 276h2v2h-2zM1146 276h2v3h-2zM1147 277h2v2h-2zM1148 277h2v3h-2zM1149 278h2v2h-2zM1150 278h2v3h-2zM1151 279h2v2h-2zM1152 280h2v2h-2zM1153 281h2v2h-2zM1154 282h2v2h-2zM1155 282h2v3h-2zM1156 283h2v2h-2zM1157 283h2v3h-2zM1158 284h2v2h-2zM1159 284h2v3h-2zM1160 285h2v2h-2zM1161 285h2v2h-2zM1162 285h2v2h-2zM1163 285h2v2h-2zM1164 285h2v2h-2zM1165 285h2v2h-2zM1166 285h2v2h-2zM1167 285h2v2h-2zM1168 284h2v3h-2zM1169 284h2v2h-2zM1170 284h2v2h-2zM1171 283h2v3h-2zM1172 283h2v2h-2zM1173 284h2v2h-2zM1174 284h2v2h-2zM1175 285h2v2h-2zM1176 285h2v3h-2zM1177 286h2v2h-2zM1178 286h2v2h-2zM1179 286h2v2h-2zM1180 286h2v2h-2zM1181 286h2v2h-2zM1182 286h2v2h-2zM1183 286h2v2h-2zM1184 286h2v2h-2zM1185 286h2v2h-2zM1186 286h2v2h-2zM1187 286h2v2h-2zM1188 285h2v3h-2zM1189 285h2v2h-2zM1190 285h2v2h-2zM1191 285h2v2h-2zM1192 285h2v3h-2zM1193 286h2v2h-2zM1194 286h2v2h-2zM1195 286h2v2h-2zM1196 286h2v3h-2zM1197 287h2v2h-2zM1198 287h2v2h-2zM1199 287h2v3h-2zM1200 288h2v2h-2zM1201 289h2v2h-2zM1202 289h2v3h-2zM1203 290h2v2h-2zM1204 291h2v2h-2zM1205 291h2v2h-2zM1206 291h2v3h-2zM1207 292h2v2h-2zM1208 292h2v2h-2zM1209 292h2v2h-2zM1210 293h2v2h-2zM1211 293h2v2h-2zM1212 293h2v2h-2zM1213 293h2v3h-2zM1214 294h2v2h-2zM1215 294h2v2h-2zM1216 294h2v2h-2zM1217 294h2v3h-2zM1218 295h2v2h-2zM1219 295h2v2h-2zM1220 295h2v2h-2zM1221 295h2v2h-2zM1222 295h2v2h-2zM1223 295h2v2h-2zM1224 295h2v2h-2zM1225 295h2v2h-2zM1226 295h2v2h-2zM1227 295h2v2h-2zM1228 295h2v2h-2zM1229 295h2v2h-2zM1230 295h2v2h-2zM1231 295h2v2h-2zM1232 295h2v2h-2zM1233 295h2v2h-2zM1234 295h2v2h-2zM1235 295h2v2h-2zM1236 295h2v2h-2zM1237 295h2v2h-2zM1238 295h2v2h-2zM1239 295h2v2h-2zM1240 295h2v2h-2zM1241 294h2v3h-2zM1242 294h2v2h-2zM1243 294h2v2h-2zM1244 294h2v2h-2zM1245 293h2v3h-2zM1246 293h2v2h-2zM1247 293h2v2h-2zM1248 292h2v2h-2zM1249 292h2v2h-2zM1250 291h2v3h-2zM1251 291h2v2h-2zM1252 290h2v3h-2zM1253 290h2v2h-2zM1254 289h2v3h-2zM1255 289h2v2h-2zM1256 288h2v3h-2zM1257 287h2v3h-2zM1258 286h2v3h-2zM1259 285h2v3h-2zM1260 284h2v3h-2zM1261 283h2v3h-2zM1262 282h2v3h-2zM1263 281h2v3h-2zM1264 280h2v2h-2zM1265 279h2v2h-2zM1266 278h2v2h-2zM1267 277h2v2h-2zM1268 276h2v2h-2zM1269 275h2v3h-2zM1270 275h2v2h-2zM1271 274h2v2h-2zM1272 274h2v2h-2zM1273 273h2v2h-2zM1274 272h2v3h-2zM1275 272h2v2h-2zM1276 271h2v3h-2zM1277 271h2v2h-2zM1278 270h2v3h-2zM1279 270h2v2h-2zM1280 270h2v2h-2zM1281 270h2v2h-2zM1282 269h2v2h-2zM1283 269h2v2h-2zM1284 269h2v2h-2zM1285 269h2v2h-2zM1286 269h2v2h-2zM1287 268h2v2h-2zM1288 268h2v2h-2zM1289 268h2v2h-2zM1290 268h2v2h-2zM1291 269h2v2h-2zM1292 269h2v2h-2zM1293 269h2v3h-2zM1294 270h2v2h-2zM1295 270h2v2h-2zM1296 270h2v2h-2zM1297 270h2v2h-2zM1298 270h2v2h-2zM1299 270h2v2h-2zM1300 270h2v2h-2zM1301 270h2v2h-2zM1302 270h2v2h-2zM1303 270h2v2h-2zM1304 270h2v2h-2zM1305 269h2v2h-2zM1306 269h2v2h-2zM1307 268h2v3h-2zM1308 268h2v2h-2zM1309 268h2v2h-2zM1310 267h2v2h-2zM1311 267h2v2h-2zM1312 266h2v3h-2zM1313 266h2v2h-2zM1314 265h2v3h-2zM1315 265h2v2h-2zM1316 265h2v2h-2zM1317 264h2v2h-2zM1318 264h2v2h-2zM1319 263h2v3h-2zM1320 263h2v2h-2zM1321 263h2v2h-2zM1322 262h2v2h-2zM1323 262h2v2h-2zM1324 261h2v3h-2zM1325 261h2v2h-2zM1326 261h2v2h-2zM1327 260h2v3h-2zM1328 260h2v2h-2zM1329 260h2v2h-2zM1330 259h2v3h-2zM1331 259h2v2h-2zM1332 259h2v2h-2zM1333 259h2v2h-2zM1334 258h2v2h-2zM1335 258h2v2h-2zM1336 258h2v2h-2zM1337 258h2v2h-2zM1338 258h2v2h-2zM1339 258h2v2h-2zM1340 258h2v2h-2zM1341 258h2v2h-2zM1342 257h2v2h-2zM1343 257h2v2h-2zM1344 257h2v2h-2zM1345 257h2v2h-2zM1346 256h2v3h-2zM1347 255h2v3h-2zM1348 255h2v2h-2zM1349 254h2v2h-2zM1350 253h2v3h-2zM1351 252h2v3h-2zM1352 252h2v2h-2zM1353 251h2v2h-2zM1354 250h2v3h-2zM1355 250h2v2h-2zM1356 249h2v2h-2zM1357 248h2v3h-2zM1358 248h2v2h-2zM1359 247h2v2h-2zM1360 246h2v3h-2zM1361 246h2v2h-2zM1362 245h2v2h-2zM1363 244h2v3h-2zM1364 244h2v2h-2zM1365 243h2v3h-2zM1366 243h2v2h-2zM1367 243h2v2h-2zM1368 242h2v2h-2zM1369 242h2v2h-2zM1370 241h2v3h-2zM1371 241h2v2h-2zM1372 240h2v3h-2zM1373 240h2v2h-2zM1374 239h2v2h-2zM1375 239h2v2h-2zM1376 238h2v2h-2zM1377 237h2v3h-2zM1378 237h2v2h-2zM1379 236h2v2h-2zM1380 234h2v3h-2zM1381 232h2v3h-2zM1382 230h2v3h-2zM1383 228h2v3h-2zM1384 226h2v3h-2zM1385 225h2v2h-2zM1386 223h2v3h-2zM1387 221h2v3h-2zM1388 219h2v3h-2zM1389 218h2v3h-2zM1390 217h2v3h-2zM1391 216h2v3h-2zM1392 215h2v3h-2zM1393 214h2v3h-2zM1394 214h2v2h-2zM1395 214h2v2h-2zM1396 214h2v2h-2zM1397 214h2v2h-2zM1398 214h2v2h-2zM1399 214h2v2h-2zM1400 214h2v2h-2zM1401 214h2v2h-2zM1402 214h2v2h-2zM1403 214h2v2h-2zM1404 214h2v2h-2zM1405 214h2v2h-2zM1406 214h2v2h-2zM1407 214h2v2h-2zM1408 214h2v2h-2zM1409 214h2v2h-2zM1410 214h2v3h-2zM1411 215h2v3h-2zM1412 216h2v3h-2zM1413 217h2v3h-2zM1414 218h2v3h-2zM1415 219h2v3h-2zM1416 220h2v2h-2zM1417 221h2v2h-2zM1418 221h2v2h-2zM1419 221h2v3h-2zM1420 222h2v2h-2zM1421 222h2v2h-2zM1422 222h2v2h-2zM1423 222h2v2h-2zM1424 222h2v2h-2zM1425 222h2v2h-2zM1426 222h2v2h-2zM1427 222h2v2h-2zM1428 222h2v2h-2zM1429 222h2v2h-2zM1430 222h2v2h-2zM1431 222h2v2h-2zM1432 222h2v2h-2zM1433 222h2v2h-2zM1434 222h2v2h-2zM1435 222h2v2h-2zM1436 222h2v2h-2zM1437 222h2v2h-2zM1438 222h2v2h-2zM1439 222h2v2h-2zM1440 222h2v3h-2zM1441 223h2v2h-2zM1442 223h2v2h-2zM1443 223h2v2h-2zM1444 223h2v2h-2zM1445 223h2v2h-2zM1446 223h2v2h-2zM1447 223h2v2h-2zM1448 223h2v2h-2zM1449 223h2v2h-2zM1450 223h2v2h-2zM1451 223h2v2h-2zM1452 223h2v2h-2zM1453 222h2v2h-2zM1454 222h2v2h-2zM1455 221h2v3h-2zM1456 221h2v2h-2zM1457 220h2v3h-2zM1458 220h2v2h-2zM1459 219h2v2h-2zM1460 218h2v2h-2zM1461 217h2v3h-2zM1462 217h2v2h-2zM1463 216h2v2h-2zM1464 215h2v2h-2zM1465 214h2v3h-2zM1466 213h2v3h-2zM1467 212h2v3h-2zM1468 211h2v3h-2zM1469 210h2v3h-2zM1470 209h2v3h-2zM1471 208h2v3h-2zM1472 207h2v3h-2zM1473 206h2v2h-2zM1474 205h2v2h-2zM1475 203h2v3h-2zM1476 201h2v4h-2zM1477 199h2v3h-2zM1478 196h2v4h-2zM1479 194h2v3h-2zM1480 192h2v3h-2zM1481 190h2v3h-2zM1482 188h2v3h-2zM1483 186h2v3h-2zM1484 184h2v3h-2zM1485 182h2v3h-2zM1486 180h2v3h-2zM1487 178h2v3h-2zM1488 177h2v3h-2zM1489 175h2v3h-2zM1490 173h2v3h-2zM1491 172h2v3h-2zM1492 171h2v3h-2zM1493 170h2v3h-2zM1494 169h2v3h-2zM1495 168h2v3h-2zM1496 167h2v3h-2zM1497 166h2v3h-2zM1498 166h2v2h-2zM1499 165h2v2h-2zM1500 164h2v2h-2zM1501 163h2v3h-2zM1502 163h2v2h-2zM1503 162h2v2h-2zM1504 161h2v2h-2zM1505 160h2v3h-2zM1506 160h2v2h-2zM1507 159h2v3h-2zM1508 159h2v2h-2zM1509 158h2v2h-2zM1510 157h2v3h-2zM1511 157h2v2h-2zM1512 157h2v2h-2zM1513 157h2v2h-2zM1514 157h2v2h-2zM1515 157h2v2h-2zM1516 157h2v2h-2zM1517 157h2v2h-2zM1518 157h2v2h-2zM1519 157h2v2h-2zM1520 157h2v3h-2zM1521 158h2v2h-2zM1522 159h2v2h-2zM1523 159h2v3h-2zM1524 160h2v2h-2zM1525 161h2v2h-2zM1526 161h2v2h-2zM1527 161h2v2h-2zM1528 161h2v3h-2zM1529 162h2v2h-2zM1530 162h2v2h-2zM1531 162h2v2h-2zM1532 162h2v3h-2zM1533 163h2v2h-2zM1534 163h2v2h-2zM1535 164h2v2h-2zM1536 164h2v2h-2zM1537 164h2v3h-2zM1538 165h2v2h-2zM1539 165h2v2h-2zM1540 165h2v2h-2zM1541 165h2v2h-2zM1542 165h2v2h-2zM1543 165h2v2h-2zM1544 165h2v3h-2zM1545 166h2v2h-2zM1546 166h2v2h-2zM1547 166h2v2h-2zM1548 166h2v3h-2zM1549 167h2v2h-2zM1550 168h2v2h-2zM1551 168h2v2h-2zM1552 169h2v2h-2zM1553 169h2v3h-2zM1554 170h2v2h-2zM1555 171h2v2h-2zM1556 171h2v2h-2zM1557 172h2v2h-2zM1558 172h2v2h-2zM1559 173h2v2h-2zM1560 173h2v2h-2zM1561 173h2v2h-2zM1562 172h2v3h-2zM1563 172h2v2h-2zM1564 171h2v2h-2zM1565 170h2v3h-2zM1566 170h2v2h-2zM1567 169h2v2h-2zM1568 168h2v2h-2zM1569 167h2v2h-2zM1570 166h2v2h-2zM1571 165h2v2h-2zM1572 164h2v2h-2zM1573 163h2v3h-2zM1574 162h2v3h-2zM1575 161h2v3h-2zM1576 161h2v2h-2zM1577 160h2v2h-2zM1578 159h2v3h-2zM1579 158h2v3h-2zM1580 158h2v2h-2zM1581 156h2v3h-2zM1582 154h2v3h-2zM1583 152h2v3h-2zM1584 150h2v3h-2zM1585 147h2v4h-2zM1586 146h2v3h-2zM1587 144h2v3h-2zM1588 143h2v3h-2zM1589 141h2v3h-2zM1590 139h2v3h-2zM1591 138h2v3h-2zM1592 136h2v3h-2zM1593 134h2v3h-2zM1594 132h2v3h-2zM1595 131h2v3h-2zM1596 130h2v3h-2zM1597 129h2v2h-2zM1598 127h2v3h-2zM1599 126h2v3h-2zM1600 125h2v3h-2zM1601 124h2v2h-2zM1602 122h2v3h-2zM1603 121h2v3h-2zM1604 120h2v3h-2zM1605 119h2v2h-2zM1606 117h2v3h-2zM1607 116h2v3h-2z"/></g>
<g shape-rendering="crispEdges"><rect x="106" y="383" width="2" height="34" fill="#ff00ff"/><rect x="104" y="389" width="5" height="26" fill="#ff00ff"/><rect x="130" y="366" width="2" height="19" fill="#ffff00"/><rect x="128" y="373" width="5" height="11" fill="#ffff00"/><rect x="300" y="428" width="2" height="26" fill="#ff00ff"/><rect x="298" y="429" width="5" height="21" fill="#ff00ff"/><rect x="329" y="297" width="2" height="40" fill="#ffff00"/><rect x="327" y="299" width="5" height="37" fill="#ffff00"/><rect x="416" y="371" width="2" height="32" fill="#ff00ff"/><rect x="414" y="372" width="5" height="30" fill="#ff00ff"/><rect x="446" y="308" width="2" height="30" fill="#ffff00"/><rect x="444" y="318" width="5" height="8" fill="#ffff00"/><rect x="470" y="356" width="2" height="30" fill="#ff00ff"/><rect x="468" y="356" width="5" height="26" fill="#ff00ff"/><rect x="547" y="183" width="2" height="41" fill="#ffff00"/><rect x="545" y="193" width="5" height="11" fill="#ffff00"/><rect x="635" y="364" width="2" height="22" fill="#ff00ff"/><rect x="633" y="364" width="5" height="15" fill="#ff00ff"/><rect x="780" y="26" width="2" height="53" fill="#ffff00"/><rect x="778" y="55" width="5" height="13" fill="#ffff00"/><rect x="800" y="149" width="2" height="43" fill="#ff00ff"/><rect x="798" y="166" width="5" height="21" fill="#ff00ff"/><rect x="824" y="94" width="2" height="47" fill="#ffff00"/><rect x="822" y="115" width="5" height="5" fill="#ffff00"/><rect x="839" y="124" width="2" height="68" fill="#ff00ff"/><rect x="837" y="136" width="5" height="43" fill="#ff00ff"/><rect x="858" y="85" width="2" height="47" fill="#ffff00"/><rect x="856" y="92" width="5" height="30" fill="#ffff00"/><rect x="916" y="316" width="2" height="36" fill="#ff00ff"/><rect x="915" y="332" width="1" height="1" fill="#ff00ff"/><rect x="1013" y="220" width="2" height="32" fill="#ffff00"/><rect x="1011" y="221" width="5" height="30" fill="#ffff00"/><rect x="1159" y="311" width="2" height="15" fill="#ff00ff"/><rect x="1157" y="311" width="5" height="15" fill="#ff00ff"/><rect x="1392" y="151" width="2" height="49" fill="#ffff00"/><rect x="1390" y="165" width="5" height="11" fill="#ffff00"/><rect x="1421" y="231" width="2" height="26" fill="#ff00ff"/><rect x="1419" y="231" width="5" height="22" fill="#ff00ff"/><rect x="1494" y="84" width="2" height="38" fill="#ffff00"/><rect x="1492" y="97" width="5" height="24" fill="#ffff00"/><rect x="1562" y="148" width="2" height="53" fill="#ff00ff"/><rect x="1560" y="165" width="5" height="36" fill="#ff00ff"/><rect x="1591" y="20" width="2" height="58" fill="#ffff00"/><rect x="1589" y="35" width="5" height="34" fill="#ffff00"/></g>
<rect x="0" y="590" width="1616" height="1" fill="#00ff00" shape-rendering="crispEdges"/>
<rect x="0" y="806" width="1616" height="1" fill="#c0c0c0" shape-rendering="crispEdges"/>
<g shape-rendering="crispEdges"><path fill="#ffff00" d="M0 698h1v1h-1zM1 698h1v1h-1zM2 698h1v1h-1zM3 698h1v1h-1zM4 698h1v1h-1zM5 698h1v1h-1zM6 698h1v1h-1zM7 698h1v1h-1zM8 698h1v1h-1zM9 698h1v1h-1zM10 698h1v1h-1zM11 698h1v1h-1zM12 698h1v1h-1zM13 698h1v1h-1zM14 698h1v1h-1zM15 698h1v1h-1zM16 698h1v1h-1zM17 698h1v1h-1zM18 698h1v1h-1zM19 698h1v1h-1zM20 698h1v1h-1zM21 698h1v1h-1zM22 698h1v1h-1zM23 698h1v1h-1zM24 698h1v1h-1zM25 698h1v1h-1zM26 698h1v1h-1zM27 698h1v1h-1zM28 698h1v1h-1zM29 698h1v1h-1zM30 698h1v1h-1zM31 698h1v1h-1zM32 698h1v1h-1zM33 698h1v1h-1zM34 698h1v1h-1zM35 698h1v1h-1zM36 698h1v1h-1zM37 698h1v1h-1zM38 698h1v1h-1zM39 698h1v1h-1zM40 698h1v1h-1zM41 698h1v1h-1zM42 698h1v1h-1zM43 698h1v1h-1zM44 698h1v1h-1zM45 698h1v1h-1zM46 698h1v1h-1zM47 698h1v1h-1zM48 698h1v1h-1zM49 698h1v1h-1zM50 698h1v1h-1zM51 698h1v1h-1zM52 698h1v1h-1zM53 698h1v1h-1zM54 698h1v1h-1zM55 698h1v1h-1zM56 698h1v1h-1zM57 698h1v1h-1zM58 698h1v1h-1zM59 698h1v1h-1zM60 698h1v1h-1zM61 698h1v1h-1zM62 698h1v1h-1zM63 698h1v1h-1zM64 698h1v1h-1zM65 698h1v1h-1zM66 698h1v1h-1zM67 698h1v1h-1zM68 698h1v1h-1zM69 698h1v1h-1zM70 698h1v1h-1zM71 698h1v1h-1zM72 698h1v1h-1zM73 698h1v1h-1zM74 698h1v1h-1zM75 698h1v1h-1zM76 698h1v1h-1zM77 698h1v1h-1zM78 698h1v1h-1zM79 698h1v1h-1zM80 698h1v1h-1zM81 698h1v1h-1zM82 698h1v1h-1zM83 698h1v1h-1zM84 698h1v1h-1zM85 698h1v1h-1zM86 698h1v1h-1zM87 698h1v1h-1zM88 698h1v1h-1zM89 698h1v1h-1zM90 698h1v1h-1zM91 698h1v1h-1zM92 698h1v1h-1zM93 698h1v1h-1zM94 698h1v1h-1zM95 698h1v1h-1zM96 698h1v1h-1zM97 698h1v1h-1zM98 698h1v1h-1zM99 698h1v1h-1zM100 698h1v1h-1zM101 698h1v1h-1zM102 698h1v1h-1zM103 698h1v1h-1zM104 698h1v1h-1zM105 698h1v1h-1zM106 698h1v1h-1zM107 698h1v1h-1zM108 698h1v1h-1zM109 698h1v1h-1zM110 698h1v1h-1zM111 698h1v1h-1zM112 698h1v1h-1zM113 698h1v1h-1zM114 698h1v1h-1zM115 698h1v1h-1zM116 698h1v1h-1zM117 698h1v1h-1zM118 698h1v1h-1zM119 698h1v1h-1zM120 698h1v1h-1zM121 698h1v1h-1zM122 698h1v1h-1zM123 698h1v1h-1zM124 698h1v1h-1zM125 698h1v1h-1zM126 698h1v1h-1zM127 698h1v1h-1zM128 698h1v1h-1zM129 698h1v1h-1zM130 698h1v1h-1zM131 698h1v1h-1zM132 698h1v1h-1zM133 698h1v1h-1zM134 698h1v1h-1zM135 698h1v1h-1zM136 698h1v1h-1zM137 698h1v1h-1zM138 698h1v1h-1zM139 698h1v1h-1zM140 698h1v1h-1zM141 698h1v1h-1zM142 698h1v1h-1zM143 698h1v1h-1zM144 698h1v1h-1zM145 698h1v1h-1zM146 698h1v1h-1zM147 698h1v1h-1zM148 698h1v1h-1zM149 698h1v1h-1zM150 698h1v1h-1zM151 698h1v1h-1zM152 698h1v1h-1zM153 698h1v1h-1zM154 698h1v1h-1zM155 698h1v1h-1zM156 698h1v1h-1zM157 698h1v1h-1zM158 698h1v1h-1zM159 698h1v1h-1zM160 698h1v1h-1zM161 698h1v1h-1zM162 698h1v1h-1zM163 698h1v1h-1zM164 698h1v1h-1zM165 698h1v1h-1zM166 698h1v1h-1zM167 698h1v1h-1zM168 698h1v1h-1zM169 698h1v1h-1zM170 698h1v1h-1zM171 698h1v1h-1zM172 698h1v1h-1zM173 698h1v1h-1zM174 698h1v1h-1zM175 698h1v1h-1zM176 698h1v1h-1zM177 698h1v1h-1zM178 698h1v1h-1zM179 698h1v1h-1zM180 698h1v1h-1zM181 698h1v1h-1zM182 698h1v1h-1zM183 698h1v1h-1zM184 698h1v1h-1zM185 698h1v1h-1zM186 698h1v1h-1zM187 698h1v1h-1zM188 698h1v1h-1zM189 698h1v1h-1zM190 698h1v1h-1zM191 698h1v1h-1zM192 698h1v1h-1zM193 698h1v1h-1zM194 698h1v1h-1zM195 698h1v1h-1zM196 698h1v1h-1zM197 698h1v1h-1zM198 698h1v1h-1zM199 698h1v1h-1zM200 698h1v1h-1zM201 698h1v1h-1zM202 698h1v1h-1zM203 698h1v1h-1zM204 698h1v1h-1zM205 698h1v1h-1zM206 698h1v1h-1zM207 698h1v1h-1zM208 698h1v1h-1zM209 698h1v1h-1zM210 698h1v1h-1zM211 698h1v1h-1zM212 698h1v1h-1zM213 698h1v1h-1zM214 698h1v1h-1zM215 698h1v1h-1zM216 698h1v1h-1zM217 698h1v1h-1zM218 698h1v1h-1zM219 698h1v1h-1zM220 698h1v1h-1zM221 698h1v1h-1zM222 698h1v1h-1zM223 698h1v1h-1zM224 698h1v1h-1zM225 698h1v1h-1zM226 698h1v1h-1zM227 698h1v1h-1zM228 698h1v1h-1zM229 698h1v1h-1zM230 698h1v1h-1zM231 698h1v1h-1zM232 698h1v1h-1zM233 698h1v1h-1zM234 698h1v1h-1zM235 698h1v1h-1zM236 698h1v1h-1zM237 698h1v1h-1zM238 698h1v1h-1zM239 698h1v1h-1zM240 698h1v1h-1zM241 698h1v1h-1zM242 698h1v1h-1zM243 698h1v1h-1zM244 698h1v1h-1zM245 698h1v1h-1zM246 698h1v1h-1zM247 698h1v1h-1zM248 698h1v1h-1zM249 698h1v1h-1zM250 698h1v1h-1zM251 698h1v1h-1zM252 698h1v1h-1zM253 698h1v1h-1zM254 698h1v1h-1zM255 698h1v1h-1zM256 698h1v1h-1zM257 698h1v1h-1zM258 698h1v1h-1zM259 698h1v1h-1zM260 698h1v1h-1zM261 698h1v1h-1zM262 698h1v1h-1zM263 698h1v1h-1zM264 698h1v1h-1zM265 698h1v1h-1zM266 698h1v1h-1zM267 698h1v1h-1zM268 698h1v1h-1zM269 698h1v1h-1zM270 698h1v1h-1zM271 698h1v1h-1zM272 698h1v1h-1zM273 698h1v1h-1zM274 698h1v1h-1zM275 698h1v1h-1zM276 698h1v1h-1zM277 698h1v1h-1zM278 698h1v1h-1zM279 698h1v1h-1zM280 698h1v1h-1zM281 698h1v1h-1zM282 698h1v1h-1zM283 698h1v1h-1zM284 698h1v1h-1zM285 698h1v1h-1zM286 698h1v1h-1zM287 698h1v1h-1zM288 698h1v1h-1zM289 698h1v1h-1zM290 698h1v1h-1zM291 698h1v1h-1zM292 698h1v1h-1zM293 698h1v1h-1zM294 698h1v1h-1zM295 698h1v1h-1zM296 698h1v1h-1zM297 698h1v1h-1zM298 698h1v1h-1zM299 698h1v1h-1zM300 698h1v1h-1zM301 698h1v1h-1zM302 698h1v1h-1zM303 698h1v1h-1zM304 698h1v1h-1zM305 698h1v1h-1zM306 698h1v1h-1zM307 698h1v1h-1zM308 698h1v1h-1zM309 698h1v1h-1zM310 698h1v1h-1zM311 698h1v1h-1zM312 698h1v1h-1zM313 698h1v1h-1zM314 698h1v1h-1zM315 698h1v1h-1zM316 698h1v1h-1zM317 698h1v1h-1zM318 698h1v1h-1zM319 698h1v1h-1zM320 698h1v1h-1zM321 698h1v1h-1zM322 698h1v1h-1zM323 698h1v1h-1zM324 698h1v1h-1zM325 698h1v1h-1zM326 698h1v1h-1zM327 698h1v1h-1zM328 698h1v1h-1zM329 698h1v1h-1zM330 698h1v1h-1zM331 698h1v1h-1zM332 698h1v1h-1zM333 698h1v1h-1zM334 698h1v1h-1zM335 698h1v1h-1zM336 698h1v1h-1zM337 698h1v1h-1zM338 698h1v1h-1zM339 698h1v1h-1zM340 698h1v1h-1zM341 698h1v1h-1zM342 698h1v1h-1zM343 698h1v1h-1zM344 698h1v1h-1zM345 698h1v1h-1zM346 698h1v1h-1zM347 698h1v1h-1zM348 698h1v1h-1zM349 698h1v1h-1zM350 698h1v1h-1zM351 698h1v1h-1zM352 698h1v1h-1zM353 698h1v1h-1zM354 698h1v1h-1zM355 698h1v1h-1zM356 698h1v1h-1zM357 698h1v1h-1zM358 698h1v1h-1zM359 698h1v1h-1zM360 698h1v1h-1zM361 698h1v1h-1zM362 698h1v1h-1zM363 698h1v1h-1zM364 698h1v1h-1zM365 698h1v1h-1zM366 698h1v1h-1zM367 698h1v1h-1zM368 698h1v1h-1zM369 698h1v1h-1zM370 698h1v1h-1zM371 698h1v1h-1zM372 698h1v1h-1zM373 698h1v1h-1zM374 698h1v1h-1zM375 698h1v1h-1zM376 698h1v1h-1zM377 698h1v1h-1zM378 698h1v1h-1zM379 698h1v1h-1zM380 698h1v1h-1zM381 698h1v1h-1zM382 698h1v1h-1zM383 698h1v1h-1zM384 698h1v1h-1zM385 698h1v1h-1zM386 698h1v1h-1zM387 698h1v1h-1zM388 698h1v1h-1zM389 698h1v1h-1zM390 698h1v1h-1zM391 698h1v1h-1zM392 698h1v1h-1zM393 698h1v1h-1zM394 698h1v1h-1zM395 698h1v1h-1zM396 698h1v1h-1zM397 698h1v1h-1zM398 698h1v1h-1zM399 698h1v1h-1zM400 698h1v1h-1zM401 698h1v1h-1zM402 698h1v1h-1zM403 698h1v1h-1zM404 698h1v1h-1zM405 698h1v1h-1zM406 698h1v1h-1zM407 698h1v1h-1zM408 698h1v1h-1zM409 698h1v1h-1zM410 698h1v1h-1zM411 698h1v1h-1zM412 698h1v1h-1zM413 698h1v1h-1zM414 698h1v1h-1zM415 698h1v1h-1zM416 698h1v1h-1zM417 698h1v1h-1zM418 698h1v1h-1zM419 698h1v1h-1zM420 698h1v1h-1zM421 698h1v1h-1zM422 698h1v1h-1zM423 698h1v1h-1zM424 698h1v1h-1zM425 698h1v1h-1zM426 698h1v1h-1zM427 698h1v1h-1zM428 698h1v1h-1zM429 698h1v1h-1zM430 698h1v1h-1zM431 698h1v1h-1zM432 698h1v1h-1zM433 698h1v1h-1zM434 698h1v1h-1zM435 698h1v1h-1zM436 698h1v1h-1zM437 698h1v1h-1zM438 698h1v1h-1zM439 698h1v1h-1zM440 698h1v1h-1zM441 698h1v1h-1zM442 698h1v1h-1zM443 698h1v1h-1zM444 698h1v1h-1zM445 698h1v1h-1zM446 698h1v1h-1zM447 698h1v1h-1zM448 698h1v1h-1zM449 698h1v1h-1zM450 698h1v1h-1zM451 698h1v1h-1zM452 698h1v1h-1zM453 698h1v1h-1zM454 698h1v1h-1zM455 698h1v1h-1zM456 698h1v1h-1zM457 698h1v1h-1zM458 698h1v1h-1zM459 698h1v1h-1zM460 698h1v1h-1zM461 698h1v1h-1zM462 698h1v1h-1zM463 698h1v1h-1zM464 698h1v1h-1zM465 698h1v1h-1zM466 698h1v1h-1zM467 698h1v1h-1zM468 698h1v1h-1zM469 698h1v1h-1zM470 698h1v1h-1zM471 698h1v1h-1zM472 698h1v1h-1zM473 698h1v1h-1zM474 698h1v1h-1zM475 698h1v1h-1zM476 698h1v1h-1zM477 698h1v1h-1zM478 698h1v1h-1zM479 698h1v1h-1zM480 698h1v1h-1zM481 698h1v1h-1zM482 698h1v1h-1zM483 698h1v1h-1zM484 698h1v1h-1zM485 698h1v1h-1zM486 698h1v1h-1zM487 698h1v1h-1zM488 698h1v1h-1zM489 698h1v1h-1zM490 698h1v1h-1zM491 698h1v1h-1zM492 698h1v1h-1zM493 698h1v1h-1zM494 698h1v1h-1zM495 698h1v1h-1zM496 698h1v1h-1zM497 698h1v1h-1zM498 698h1v1h-1zM499 698h1v1h-1zM500 698h1v1h-1zM501 698h1v1h-1zM502 698h1v1h-1zM503 698h1v1h-1zM504 698h1v1h-1zM505 698h1v1h-1zM506 698h1v1h-1zM507 698h1v1h-1zM508 698h1v1h-1zM509 698h1v1h-1zM510 698h1v1h-1zM511 698h1v1h-1zM512 698h1v1h-1zM513 698h1v1h-1zM514 698h1v1h-1zM515 698h1v1h-1zM516 698h1v1h-1zM517 698h1v1h-1zM518 698h1v1h-1zM519 698h1v1h-1zM520 698h1v1h-1zM521 698h1v1h-1zM522 698h1v1h-1zM523 698h1v1h-1zM524 698h1v1h-1zM525 698h1v1h-1zM526 698h1v1h-1zM527 698h1v1h-1zM528 698h1v1h-1zM529 698h1v1h-1zM530 698h1v1h-1zM531 698h1v1h-1zM532 698h1v1h-1zM533 698h1v1h-1zM534 698h1v1h-1zM535 698h1v1h-1zM536 698h1v1h-1zM537 698h1v1h-1zM538 698h1v1h-1zM539 698h1v1h-1zM540 698h1v1h-1zM541 698h1v1h-1zM542 698h1v1h-1zM543 698h1v1h-1zM544 698h1v1h-1zM545 698h1v1h-1zM546 698h1v1h-1zM547 698h1v1h-1zM548 698h1v1h-1zM549 698h1v1h-1zM550 698h1v1h-1zM551 698h1v1h-1zM552 698h1v1h-1zM553 698h1v1h-1zM554 698h1v1h-1zM555 698h1v1h-1zM556 698h1v1h-1zM557 698h1v1h-1zM558 698h1v1h-1zM559 698h1v1h-1zM560 698h1v1h-1zM561 698h1v1h-1zM562 698h1v1h-1zM563 698h1v1h-1zM564 698h1v1h-1zM565 698h1v1h-1zM566 698h1v1h-1zM567 698h1v1h-1zM568 698h1v1h-1zM569 698h1v1h-1zM570 698h1v1h-1zM571 698h1v1h-1zM572 698h1v1h-1zM573 698h1v1h-1zM574 698h1v1h-1zM575 698h1v1h-1zM576 698h1v1h-1zM577 698h1v1h-1zM578 698h1v1h-1zM579 698h1v1h-1zM580 698h1v1h-1zM581 698h1v1h-1zM582 698h1v1h-1zM583 698h1v1h-1zM584 698h1v1h-1zM585 698h1v1h-1zM586 698h1v1h-1zM587 698h1v1h-1zM588 698h1v1h-1zM589 698h1v1h-1zM590 698h1v1h-1zM591 698h1v1h-1zM592 698h1v1h-1zM593 698h1v1h-1zM594 698h1v1h-1zM595 698h1v1h-1zM596 698h1v1h-1zM597 698h1v1h-1zM598 698h1v1h-1zM599 698h1v1h-1zM600 698h1v1h-1zM601 698h1v1h-1zM602 698h1v1h-1zM603 698h1v1h-1zM604 698h1v1h-1zM605 698h1v1h-1zM606 698h1v1h-1zM607 698h1v1h-1zM608 698h1v1h-1zM609 698h1v1h-1zM610 698h1v1h-1zM611 698h1v1h-1zM612 698h1v1h-1zM613 698h1v1h-1zM614 698h1v1h-1zM615 698h1v1h-1zM616 698h1v1h-1zM617 698h1v1h-1zM618 698h1v1h-1zM619 698h1v1h-1zM620 698h1v1h-1zM621 698h1v1h-1zM622 698h1v1h-1zM623 698h1v1h-1zM624 698h1v1h-1zM625 698h1v1h-1zM626 698h1v1h-1zM627 698h1v1h-1zM628 698h1v1h-1zM629 698h1v1h-1zM630 698h1v1h-1zM631 698h1v1h-1zM632 698h1v1h-1zM633 698h1v1h-1zM634 698h1v1h-1zM635 698h1v1h-1zM636 698h1v1h-1zM637 698h1v1h-1zM638 698h1v1h-1zM639 698h1v1h-1zM640 698h1v1h-1zM641 698h1v1h-1zM642 698h1v1h-1zM643 698h1v1h-1zM644 698h1v1h-1zM645 698h1v1h-1zM646 698h1v1h-1zM647 698h1v1h-1zM648 698h1v1h-1zM649 698h1v1h-1zM650 698h1v1h-1zM651 698h1v1h-1zM652 698h1v1h-1zM653 698h1v1h-1zM654 698h1v1h-1zM655 698h1v1h-1zM656 698h1v1h-1zM657 698h1v1h-1zM658 698h1v1h-1zM659 698h1v1h-1zM660 698h1v1h-1zM661 698h1v1h-1zM662 698h1v1h-1zM663 698h1v1h-1zM664 698h1v1h-1zM665 698h1v1h-1zM666 698h1v1h-1zM667 698h1v1h-1zM668 698h1v1h-1zM669 698h1v1h-1zM670 698h1v1h-1zM671 698h1v1h-1zM672 698h1v1h-1zM673 698h1v1h-1zM674 698h1v1h-1zM675 698h1v1h-1zM676 698h1v1h-1zM677 698h1v1h-1zM678 698h1v1h-1zM679 698h1v1h-1zM680 698h1v1h-1zM681 698h1v1h-1zM682 698h1v1h-1zM683 698h1v1h-1zM684 698h1v1h-1zM685 698h1v1h-1zM686 698h1v1h-1zM687 698h1v1h-1zM688 698h1v1h-1zM689 698h1v1h-1zM690 698h1v1h-1zM691 698h1v1h-1zM692 698h1v1h-1zM693 698h1v1h-1zM694 698h1v1h-1zM695 698h1v1h-1zM696 698h1v1h-1zM697 698h1v1h-1zM698 698h1v1h-1zM699 698h1v1h-1zM700 698h1v1h-1zM701 698h1v1h-1zM702 698h1v1h-1zM703 698h1v1h-1zM704 678h1v21h-1zM705 634h1v44h-1zM706 591h1v43h-1zM707 548h1v43h-1zM708 505h1v43h-1zM709 482h1v23h-1zM710 482h1v1h-1zM711 482h1v1h-1zM712 482h1v1h-1zM713 482h1v22h-1zM714 504h1v43h-1zM715 547h1v43h-1zM716 590h1v43h-1zM717 633h1v44h-1zM718 677h1v22h-1zM719 698h1v1h-1zM720 698h1v1h-1zM721 698h1v1h-1zM722 698h1v1h-1zM723 698h1v1h-1zM724 698h1v1h-1zM725 698h1v1h-1zM726 698h1v1h-1zM727 698h1v1h-1zM728 698h1v1h-1zM729 698h1v1h-1zM730 698h1v1h-1zM731 698h1v1h-1zM732 698h1v1h-1zM733 698h1v1h-1zM734 698h1v1h-1zM735 698h1v1h-1zM736 698h1v1h-1zM737 698h1v1h-1zM738 698h1v1h-1zM739 698h1v1h-1zM740 698h1v1h-1zM741 698h1v1h-1zM742 698h1v1h-1zM743 698h1v1h-1zM744 698h1v1h-1zM745 698h1v1h-1zM746 698h1v1h-1zM747 698h1v1h-1zM748 698h1v1h-1zM749 698h1v1h-1zM750 698h1v1h-1zM751 698h1v1h-1zM752 698h1v1h-1zM753 698h1v1h-1zM754 698h1v1h-1zM755 698h1v1h-1zM756 698h1v1h-1zM757 698h1v1h-1zM758 698h1v1h-1zM759 698h1v1h-1zM760 698h1v1h-1zM761 698h1v1h-1zM762 698h1v1h-1zM763 698h1v1h-1zM764 698h1v1h-1zM765 698h1v1h-1zM766 698h1v1h-1zM767 698h1v1h-1zM768 698h1v1h-1zM769 698h1v1h-1zM770 698h1v1h-1zM771 698h1v1h-1zM772 698h1v1h-1zM773 698h1v1h-1zM774 698h1v1h-1zM775 698h1v1h-1zM776 698h1v1h-1zM777 698h1v1h-1zM778 698h1v1h-1zM779 698h1v1h-1zM780 698h1v1h-1zM781 698h1v1h-1zM782 698h1v1h-1zM783 698h1v1h-1zM784 698h1v1h-1zM785 698h1v1h-1zM786 698h1v1h-1zM787 698h1v1h-1zM788 698h1v1h-1zM789 698h1v1h-1zM790 698h1v1h-1zM791 698h1v1h-1zM792 698h1v1h-1zM793 698h1v1h-1zM794 698h1v1h-1zM795 698h1v1h-1zM796 698h1v1h-1zM797 698h1v1h-1zM798 698h1v1h-1zM799 698h1v1h-1zM800 698h1v1h-1zM801 698h1v1h-1zM802 698h1v1h-1zM803 698h1v1h-1zM804 698h1v1h-1zM805 698h1v1h-1zM806 698h1v1h-1zM807 698h1v1h-1zM808 698h1v1h-1zM809 698h1v1h-1zM810 698h1v1h-1zM811 698h1v1h-1zM812 698h1v1h-1zM813 698h1v1h-1zM814 698h1v1h-1zM815 698h1v1h-1zM816 698h1v1h-1zM817 698h1v1h-1zM818 698h1v1h-1zM819 698h1v1h-1zM820 698h1v1h-1zM821 698h1v1h-1zM822 698h1v1h-1zM823 698h1v1h-1zM824 698h1v1h-1zM825 698h1v1h-1zM826 698h1v1h-1zM827 698h1v1h-1zM828 698h1v1h-1zM829 698h1v1h-1zM830 698h1v1h-1zM831 698h1v1h-1zM832 698h1v1h-1zM833 698h1v1h-1zM834 698h1v1h-1zM835 698h1v1h-1zM836 698h1v1h-1zM837 698h1v1h-1zM838 698h1v1h-1zM839 698h1v1h-1zM840 698h1v1h-1zM841 698h1v1h-1zM842 698h1v1h-1zM843 698h1v1h-1zM844 698h1v1h-1zM845 698h1v1h-1zM846 698h1v1h-1zM847 698h1v1h-1zM848 698h1v1h-1zM849 698h1v1h-1zM850 698h1v1h-1zM851 698h1v1h-1zM852 698h1v1h-1zM853 698h1v1h-1zM854 698h1v1h-1zM855 698h1v1h-1zM856 698h1v1h-1zM857 698h1v1h-1zM858 698h1v1h-1zM859 698h1v1h-1zM860 698h1v1h-1zM861 698h1v1h-1zM862 698h1v1h-1zM863 698h1v1h-1zM864 698h1v1h-1zM865 698h1v1h-1zM866 698h1v1h-1zM867 698h1v1h-1zM868 698h1v1h-1zM869 698h1v1h-1zM870 698h1v1h-1zM871 698h1v1h-1zM872 698h1v1h-1zM873 698h1v1h-1zM874 698h1v1h-1zM875 698h1v1h-1zM876 698h1v1h-1zM877 698h1v1h-1zM878 698h1v1h-1zM879 698h1v1h-1zM880 698h1v1h-1zM881 698h1v1h-1zM882 698h1v1h-1zM883 698h1v1h-1zM884 698h1v1h-1zM885 698h1v1h-1zM886 698h1v1h-1zM887 698h1v1h-1zM888 698h1v1h-1zM889 698h1v1h-1zM890 698h1v1h-1zM891 698h1v1h-1zM892 698h1v1h-1zM893 698h1v1h-1zM894 698h1v1h-1zM895 698h1v1h-1zM896 698h1v1h-1zM897 698h1v1h-1zM898 698h1v1h-1zM899 698h1v1h-1zM900 698h1v1h-1zM901 698h1v1h-1zM902 698h1v1h-1zM903 698h1v1h-1zM904 698h1v1h-1zM905 698h1v1h-1zM906 698h1v1h-1zM907 698h1v1h-1zM908 698h1v1h-1zM909 698h1v1h-1zM910 698h1v1h-1zM911 698h1v1h-1zM912 698h1v1h-1zM913 698h1v1h-1zM914 698h1v1h-1zM915 698h1v1h-1zM916 698h1v1h-1zM917 698h1v1h-1zM918 698h1v1h-1zM919 698h1v1h-1zM920 698h1v1h-1zM921 698h1v1h-1zM922 698h1v1h-1zM923 698h1v1h-1zM924 698h1v1h-1zM925 698h1v1h-1zM926 698h1v1h-1zM927 698h1v1h-1zM928 698h1v1h-1zM929 698h1v1h-1zM930 698h1v1h-1zM931 698h1v1h-1zM932 698h1v1h-1zM933 698h1v1h-1zM934 698h1v1h-1zM935 698h1v1h-1zM936 698h1v1h-1zM937 698h1v1h-1zM938 698h1v1h-1zM939 698h1v1h-1zM940 698h1v1h-1zM941 698h1v1h-1zM942 698h1v1h-1zM943 698h1v1h-1zM944 698h1v1h-1zM945 698h1v1h-1zM946 698h1v1h-1zM947 698h1v1h-1zM948 698h1v1h-1zM949 698h1v1h-1zM950 698h1v1h-1zM951 698h1v1h-1zM952 698h1v1h-1zM953 698h1v1h-1zM954 698h1v1h-1zM955 698h1v1h-1zM956 698h1v1h-1zM957 698h1v1h-1zM958 698h1v1h-1zM959 698h1v1h-1zM960 698h1v1h-1zM961 698h1v1h-1zM962 698h1v1h-1zM963 698h1v1h-1zM964 698h1v1h-1zM965 698h1v1h-1zM966 698h1v1h-1zM967 698h1v1h-1zM968 698h1v1h-1zM969 698h1v1h-1zM970 698h1v1h-1zM971 698h1v1h-1zM972 698h1v1h-1zM973 698h1v1h-1zM974 698h1v1h-1zM975 698h1v1h-1zM976 698h1v1h-1zM977 698h1v1h-1zM978 698h1v1h-1zM979 698h1v1h-1zM980 698h1v1h-1zM981 698h1v1h-1zM982 698h1v1h-1zM983 698h1v1h-1zM984 698h1v1h-1zM985 698h1v1h-1zM986 698h1v1h-1zM987 698h1v1h-1zM988 698h1v1h-1zM989 698h1v1h-1zM990 698h1v1h-1zM991 698h1v1h-1zM992 698h1v1h-1zM993 698h1v1h-1zM994 698h1v1h-1zM995 698h1v1h-1zM996 698h1v1h-1zM997 698h1v1h-1zM998 698h1v1h-1zM999 698h1v1h-1zM1000 698h1v1h-1zM1001 698h1v1h-1zM1002 698h1v1h-1zM1003 698h1v1h-1zM1004 698h1v1h-1zM1005 698h1v1h-1zM1006 698h1v1h-1zM1007 698h1v1h-1zM1008 698h1v1h-1zM1009 698h1v1h-1zM1010 698h1v1h-1zM1011 698h1v1h-1zM1012 698h1v1h-1zM1013 698h1v1h-1zM1014 698h1v1h-1zM1015 698h1v1h-1zM1016 698h1v1h-1zM1017 698h1v1h-1zM1018 698h1v1h-1zM1019 698h1v1h-1zM1020 698h1v1h-1zM1021 698h1v1h-1zM1022 698h1v1h-1zM1023 698h1v1h-1zM1024 698h1v1h-1zM1025 698h1v1h-1zM1026 698h1v1h-1zM1027 698h1v1h-1zM1028 698h1v1h-1zM1029 698h1v1h-1zM1030 698h1v1h-1zM1031 698h1v1h-1zM1032 698h1v1h-1zM1033 698h1v1h-1zM1034 698h1v1h-1zM1035 698h1v1h-1zM1036 698h1v1h-1zM1037 698h1v1h-1zM1038 698h1v1h-1zM1039 698h1v1h-1zM1040 698h1v1h-1zM1041 698h1v1h-1zM1042 698h1v1h-1zM1043 698h1v1h-1zM1044 698h1v1h-1zM1045 698h1v1h-1zM1046 698h1v1h-1zM1047 698h1v1h-1zM1048 698h1v1h-1zM1049 698h1v1h-1zM1050 698h1v1h-1zM1051 698h1v1h-1zM1052 698h1v1h-1zM1053 698h1v1h-1zM1054 698h1v1h-1zM1055 698h1v1h-1zM1056 698h1v1h-1zM1057 698h1v1h-1zM1058 698h1v1h-1zM1059 698h1v1h-1zM1060 698h1v1h-1zM1061 698h1v1h-1zM1062 698h1v1h-1zM1063 698h1v1h-1zM1064 698h1v1h-1zM1065 698h1v1h-1zM1066 698h1v1h-1zM1067 698h1v1h-1zM1068 698h1v1h-1zM1069 698h1v1h-1zM1070 698h1v1h-1zM1071 698h1v1h-1zM1072 698h1v1h-1zM1073 698h1v1h-1zM1074 698h1v1h-1zM1075 698h1v1h-1zM1076 698h1v1h-1zM1077 698h1v1h-1zM1078 698h1v1h-1zM1079 698h1v1h-1zM1080 698h1v1h-1zM1081 698h1v1h-1zM1082 698h1v1h-1zM1083 698h1v1h-1zM1084 698h1v1h-1zM1085 698h1v1h-1zM1086 698h1v1h-1zM1087 698h1v1h-1zM1088 698h1v1h-1zM1089 698h1v1h-1zM1090 698h1v1h-1zM1091 698h1v1h-1zM1092 698h1v1h-1zM1093 698h1v1h-1zM1094 698h1v1h-1zM1095 698h1v1h-1zM1096 698h1v1h-1zM1097 698h1v1h-1zM1098 698h1v1h-1zM1099 698h1v1h-1zM1100 698h1v1h-1zM1101 698h1v1h-1zM1102 698h1v1h-1zM1103 698h1v1h-1zM1104 698h1v1h-1zM1105 698h1v1h-1zM1106 698h1v1h-1zM1107 698h1v1h-1zM1108 698h1v1h-1zM1109 698h1v1h-1zM1110 698h1v1h-1zM1111 698h1v1h-1zM1112 698h1v1h-1zM1113 698h1v1h-1zM1114 698h1v1h-1zM1115 698h1v1h-1zM1116 698h1v1h-1zM1117 698h1v1h-1zM1118 698h1v1h-1zM1119 698h1v1h-1zM1120 698h1v1h-1zM1121 698h1v1h-1zM1122 698h1v1h-1zM1123 698h1v1h-1zM1124 698h1v1h-1zM1125 698h1v1h-1zM1126 698h1v1h-1zM1127 698h1v1h-1zM1128 698h1v1h-1zM1129 698h1v1h-1zM1130 698h1v1h-1zM1131 698h1v1h-1zM1132 698h1v1h-1zM1133 698h1v1h-1zM1134 698h1v1h-1zM1135 698h1v1h-1zM1136 698h1v1h-1zM1137 698h1v1h-1zM1138 698h1v1h-1zM1139 698h1v1h-1zM1140 698h1v1h-1zM1141 698h1v1h-1zM1142 698h1v1h-1zM1143 698h1v1h-1zM1144 698h1v1h-1zM1145 698h1v1h-1zM1146 698h1v1h-1zM1147 698h1v1h-1zM1148 698h1v1h-1zM1149 698h1v1h-1zM1150 698h1v1h-1zM1151 698h1v1h-1zM1152 698h1v1h-1zM1153 698h1v1h-1zM1154 698h1v1h-1zM1155 698h1v1h-1zM1156 698h1v1h-1zM1157 698h1v1h-1zM1158 698h1v1h-1zM1159 698h1v1h-1zM1160 698h1v1h-1zM1161 698h1v1h-1zM1162 698h1v1h-1zM1163 698h1v1h-1zM1164 698h1v1h-1zM1165 698h1v1h-1zM1166 698h1v1h-1zM1167 698h1v1h-1zM1168 698h1v1h-1zM1169 698h1v1h-1zM1170 698h1v1h-1zM1171 698h1v1h-1zM1172 698h1v1h-1zM1173 698h1v1h-1zM1174 698h1v1h-1zM1175 698h1v1h-1zM1176 698h1v1h-1zM1177 698h1v1h-1zM1178 698h1v1h-1zM1179 698h1v1h-1zM1180 698h1v1h-1zM1181 698h1v1h-1zM1182 698h1v1h-1zM1183 698h1v1h-1zM1184 698h1v1h-1zM1185 698h1v1h-1zM1186 698h1v1h-1zM1187 698h1v1h-1zM1188 698h1v1h-1zM1189 698h1v1h-1zM1190 698h1v1h-1zM1191 698h1v1h-1zM1192 698h1v1h-1zM1193 698h1v1h-1zM1194 698h1v1h-1zM1195 698h1v1h-1zM1196 698h1v1h-1zM1197 698h1v1h-1zM1198 698h1v1h-1zM1199 698h1v1h-1zM1200 698h1v1h-1zM1201 698h1v1h-1zM1202 698h1v1h-1zM1203 698h1v1h-1zM1204 698h1v1h-1zM1205 698h1v1h-1zM1206 698h1v1h-1zM1207 698h1v1h-1zM1208 698h1v1h-1zM1209 698h1v1h-1zM1210 698h1v1h-1zM1211 698h1v1h-1zM1212 698h1v1h-1zM1213 698h1v1h-1zM1214 698h1v1h-1zM1215 698h1v1h-1zM1216 698h1v1h-1zM1217 698h1v1h-1zM1218 698h1v1h-1zM1219 698h1v1h-1zM1220 698h1v1h-1zM1221 698h1v1h-1zM1222 698h1v1h-1zM1223 698h1v1h-1zM1224 698h1v1h-1zM1225 698h1v1h-1zM1226 698h1v1h-1zM1227 698h1v1h-1zM1228 698h1v1h-1zM1229 698h1v1h-1zM1230 698h1v1h-1zM1231 698h1v1h-1zM1232 698h1v1h-1zM1233 698h1v1h-1zM1234 698h1v1h-1zM1235 698h1v1h-1zM1236 698h1v1h-1zM1237 698h1v1h-1zM1238 698h1v1h-1zM1239 698h1v1h-1zM1240 698h1v1h-1zM1241 698h1v1h-1zM1242 698h1v1h-1zM1243 698h1v1h-1zM1244 698h1v1h-1zM1245 698h1v1h-1zM1246 698h1v1h-1zM1247 698h1v1h-1zM1248 698h1v1h-1zM1249 698h1v1h-1zM1250 698h1v1h-1zM1251 698h1v1h-1zM1252 698h1v1h-1zM1253 698h1v1h-1zM1254 698h1v1h-1zM1255 698h1v1h-1zM1256 698h1v1h-1zM1257 698h1v1h-1zM1258 698h1v1h-1zM1259 698h1v1h-1zM1260 698h1v1h-1zM1261 698h1v1h-1zM1262 698h1v1h-1zM1263 698h1v1h-1zM1264 698h1v1h-1zM1265 698h1v1h-1zM1266 698h1v1h-1zM1267 678h1v21h-1zM1268 634h1v44h-1zM1269 591h1v43h-1zM1270 548h1v43h-1zM1271 505h1v43h-1zM1272 482h1v23h-1zM1273 482h1v1h-1zM1274 482h1v1h-1zM1275 482h1v1h-1zM1276 482h1v1h-1zM1277 482h1v27h-1zM1278 509h1v54h-1zM1279 563h1v54h-1zM1280 617h1v54h-1zM1281 671h1v28h-1zM1282 634h1v44h-1zM1283 591h1v43h-1zM1284 548h1v43h-1zM1285 505h1v43h-1zM1286 482h1v23h-1zM1287 482h1v1h-1zM1288 482h1v1h-1zM1289 482h1v1h-1zM1290 482h1v1h-1zM1291 482h1v1h-1zM1292 482h1v1h-1zM1293 482h1v1h-1zM1294 482h1v1h-1zM1295 482h1v1h-1zM1296 482h1v22h-1zM1297 504h1v43h-1zM1298 547h1v43h-1zM1299 590h1v43h-1zM1300 633h1v44h-1zM1301 677h1v22h-1zM1302 698h1v1h-1zM1303 698h1v1h-1zM1304 698h1v1h-1zM1305 698h1v1h-1zM1306 698h1v1h-1zM1307 698h1v1h-1zM1308 698h1v1h-1zM1309 698h1v1h-1zM1310 698h1v1h-1zM1311 698h1v1h-1zM1312 698h1v1h-1zM1313 698h1v1h-1zM1314 698h1v1h-1zM1315 698h1v1h-1zM1316 698h1v1h-1zM1317 698h1v1h-1zM1318 698h1v1h-1zM1319 698h1v1h-1zM1320 698h1v1h-1zM1321 698h1v1h-1zM1322 698h1v1h-1zM1323 698h1v1h-1zM1324 698h1v1h-1zM1325 698h1v1h-1zM1326 698h1v1h-1zM1327 698h1v1h-1zM1328 698h1v1h-1zM1329 698h1v1h-1zM1330 698h1v1h-1zM1331 698h1v1h-1zM1332 698h1v1h-1zM1333 698h1v1h-1zM1334 698h1v1h-1zM1335 698h1v1h-1zM1336 698h1v1h-1zM1337 698h1v1h-1zM1338 698h1v1h-1zM1339 698h1v1h-1zM1340 698h1v1h-1zM1341 698h1v1h-1zM1342 698h1v1h-1zM1343 698h1v1h-1zM1344 698h1v1h-1zM1345 698h1v1h-1zM1346 698h1v1h-1zM1347 698h1v1h-1zM1348 698h1v1h-1zM1349 698h1v1h-1zM1350 698h1v1h-1zM1351 698h1v1h-1zM1352 698h1v1h-1zM1353 698h1v1h-1zM1354 698h1v1h-1zM1355 698h1v1h-1zM1356 698h1v1h-1zM1357 698h1v1h-1zM1358 698h1v1h-1zM1359 698h1v1h-1zM1360 698h1v1h-1zM1361 698h1v1h-1zM1362 698h1v1h-1zM1363 698h1v1h-1zM1364 698h1v1h-1zM1365 698h1v1h-1zM1366 698h1v1h-1zM1367 698h1v1h-1zM1368 698h1v1h-1zM1369 698h1v1h-1zM1370 698h1v1h-1zM1371 698h1v1h-1zM1372 698h1v1h-1zM1373 698h1v1h-1zM1374 698h1v1h-1zM1375 698h1v1h-1zM1376 698h1v1h-1zM1377 698h1v1h-1zM1378 698h1v1h-1zM1379 698h1v1h-1zM1380 698h1v1h-1zM1381 698h1v1h-1zM1382 698h1v1h-1zM1383 698h1v1h-1zM1384 698h1v1h-1zM1385 698h1v1h-1zM1386 698h1v1h-1zM1387 698h1v1h-1zM1388 698h1v1h-1zM1389 698h1v1h-1zM1390 698h1v1h-1zM1391 698h1v1h-1zM1392 698h1v1h-1zM1393 698h1v1h-1zM1394 698h1v1h-1zM1395 698h1v1h-1zM1396 698h1v1h-1zM1397 698h1v1h-1zM1398 698h1v1h-1zM1399 698h1v1h-1zM1400 698h1v1h-1zM1401 698h1v1h-1zM1402 698h1v1h-1zM1403 698h1v1h-1zM1404 698h1v1h-1zM1405 698h1v1h-1zM1406 698h1v1h-1zM1407 698h1v1h-1zM1408 698h1v1h-1zM1409 698h1v1h-1zM1410 698h1v1h-1zM1411 698h1v1h-1zM1412 698h1v1h-1zM1413 698h1v1h-1zM1414 698h1v1h-1zM1415 698h1v1h-1zM1416 698h1v1h-1zM1417 698h1v1h-1zM1418 698h1v1h-1zM1419 698h1v1h-1zM1420 698h1v1h-1zM1421 698h1v1h-1zM1422 698h1v1h-1zM1423 698h1v1h-1zM1424 698h1v1h-1zM1425 698h1v1h-1zM1426 698h1v1h-1zM1427 698h1v1h-1zM1428 698h1v1h-1zM1429 698h1v1h-1zM1430 698h1v1h-1zM1431 698h1v1h-1zM1432 698h1v1h-1zM1433 698h1v1h-1zM1434 698h1v1h-1zM1435 698h1v1h-1zM1436 698h1v1h-1zM1437 698h1v1h-1zM1438 698h1v1h-1zM1439 698h1v1h-1zM1440 698h1v1h-1zM1441 698h1v1h-1zM1442 698h1v1h-1zM1443 698h1v1h-1zM1444 698h1v1h-1zM1445 698h1v1h-1zM1446 698h1v1h-1zM1447 698h1v1h-1zM1448 698h1v1h-1zM1449 698h1v1h-1zM1450 698h1v1h-1zM1451 698h1v1h-1zM1452 698h1v1h-1zM1453 698h1v1h-1zM1454 698h1v1h-1zM1455 698h1v1h-1zM1456 698h1v1h-1zM1457 698h1v1h-1zM1458 698h1v1h-1zM1459 698h1v1h-1zM1460 698h1v1h-1zM1461 698h1v1h-1zM1462 698h1v1h-1zM1463 698h1v1h-1zM1464 698h1v1h-1zM1465 698h1v1h-1zM1466 698h1v1h-1zM1467 698h1v1h-1zM1468 698h1v1h-1zM1469 698h1v1h-1zM1470 698h1v1h-1zM1471 698h1v1h-1zM1472 698h1v1h-1zM1473 698h1v1h-1zM1474 698h1v1h-1zM1475 698h1v1h-1zM1476 698h1v1h-1zM1477 698h1v1h-1zM1478 698h1v1h-1zM1479 698h1v1h-1zM1480 698h1v1h-1zM1481 698h1v1h-1zM1482 698h1v1h-1zM1483 698h1v1h-1zM1484 698h1v1h-1zM1485 698h1v1h-1zM1486 698h1v1h-1zM1487 698h1v1h-1zM1488 698h1v1h-1zM1489 698h1v1h-1zM1490 698h1v1h-1zM1491 698h1v1h-1zM1492 698h1v1h-1zM1493 698h1v1h-1zM1494 698h1v1h-1zM1495 698h1v1h-1zM1496 698h1v1h-1zM1497 698h1v1h-1zM1498 698h1v1h-1zM1499 698h1v1h-1zM1500 698h1v1h-1zM1501 698h1v1h-1zM1502 698h1v1h-1zM1503 698h1v1h-1zM1504 698h1v1h-1zM1505 698h1v1h-1zM1506 698h1v1h-1zM1507 698h1v1h-1zM1508 698h1v1h-1zM1509 698h1v1h-1zM1510 698h1v1h-1zM1511 698h1v1h-1zM1512 698h1v1h-1zM1513 698h1v1h-1zM1514 698h1v1h-1zM1515 698h1v1h-1zM1516 698h1v1h-1zM1517 698h1v1h-1zM1518 698h1v1h-1zM1519 698h1v1h-1zM1520 698h1v1h-1zM1521 698h1v1h-1zM1522 698h1v1h-1zM1523 698h1v1h-1zM1524 698h1v1h-1zM1525 698h1v1h-1zM1526 698h1v1h-1zM1527 698h1v1h-1zM1528 698h1v1h-1zM1529 698h1v1h-1zM1530 698h1v1h-1zM1531 698h1v1h-1zM1532 698h1v1h-1zM1533 698h1v1h-1zM1534 698h1v1h-1zM1535 698h1v1h-1zM1536 698h1v1h-1zM1537 698h1v1h-1zM1538 698h1v1h-1zM1539 698h1v1h-1zM1540 698h1v1h-1zM1541 698h1v1h-1zM1542 698h1v1h-1zM1543 698h1v1h-1zM1544 698h1v1h-1zM1545 698h1v1h-1zM1546 698h1v1h-1zM1547 698h1v1h-1zM1548 698h1v1h-1zM1549 698h1v1h-1zM1550 698h1v1h-1zM1551 698h1v1h-1zM1552 698h1v1h-1zM1553 698h1v1h-1zM1554 698h1v1h-1zM1555 698h1v1h-1zM1556 698h1v1h-1zM1557 698h1v1h-1zM1558 698h1v1h-1zM1559 698h1v1h-1zM1560 698h1v1h-1zM1561 698h1v1h-1zM1562 698h1v1h-1zM1563 698h1v1h-1zM1564 698h1v1h-1zM1565 698h1v1h-1zM1566 698h1v1h-1zM1567 698h1v1h-1zM1568 698h1v1h-1zM1569 698h1v1h-1zM1570 698h1v1h-1zM1571 698h1v1h-1zM1572 698h1v1h-1zM1573 698h1v1h-1zM1574 698h1v1h-1zM1575 698h1v1h-1zM1576 698h1v1h-1zM1577 698h1v1h-1zM1578 698h1v1h-1zM1579 698h1v1h-1zM1580 698h1v1h-1zM1581 698h1v1h-1zM1582 698h1v1h-1zM1583 698h1v1h-1zM1584 698h1v1h-1zM1585 698h1v1h-1zM1586 698h1v1h-1zM1587 698h1v1h-1zM1588 698h1v1h-1zM1589 698h1v1h-1zM1590 698h1v1h-1zM1591 698h1v1h-1zM1592 698h1v1h-1zM1593 698h1v1h-1zM1594 698h1v1h-1zM1595 698h1v1h-1zM1596 698h1v1h-1zM1597 698h1v1h-1zM1598 698h1v1h-1zM1599 698h1v1h-1zM1600 698h1v1h-1zM1601 698h1v1h-1zM1602 698h1v1h-1zM1603 698h1v1h-1zM1604 698h1v1h-1zM1605 698h1v1h-1zM1606 698h1v1h-1zM1607 698h1v1h-1z"/><path fill="#ff00ff" d="M0 698h1v1h-1zM1 698h1v1h-1zM2 698h1v1h-1zM3 698h1v1h-1zM4 698h1v1h-1zM5 698h1v1h-1zM6 698h1v1h-1zM7 698h1v1h-1zM8 698h1v1h-1zM9 698h1v1h-1zM10 698h1v1h-1zM11 698h1v1h-1zM12 698h1v1h-1zM13 698h1v1h-1zM14 698h1v1h-1zM15 698h1v1h-1zM16 698h1v1h-1zM17 698h1v1h-1zM18 698h1v1h-1zM19 698h1v1h-1zM20 698h1v1h-1zM21 698h1v1h-1zM22 698h1v1h-1zM23 698h1v1h-1zM24 698h1v1h-1zM25 698h1v1h-1zM26 698h1v1h-1zM27 698h1v1h-1zM28 698h1v1h-1zM29 698h1v1h-1zM30 698h1v1h-1zM31 698h1v1h-1zM32 698h1v1h-1zM33 698h1v1h-1zM34 698h1v1h-1zM35 698h1v1h-1zM36 698h1v1h-1zM37 698h1v1h-1zM38 698h1v1h-1zM39 698h1v1h-1zM40 698h1v1h-1zM41 698h1v1h-1zM42 698h1v1h-1zM43 698h1v1h-1zM44 698h1v1h-1zM45 698h1v1h-1zM46 698h1v1h-1zM47 698h1v1h-1zM48 698h1v1h-1zM49 698h1v1h-1zM50 698h1v1h-1zM51 698h1v1h-1zM52 698h1v1h-1zM53 698h1v1h-1zM54 698h1v1h-1zM55 698h1v1h-1zM56 698h1v1h-1zM57 698h1v1h-1zM58 698h1v1h-1zM59 698h1v1h-1zM60 698h1v1h-1zM61 698h1v1h-1zM62 698h1v1h-1zM63 698h1v1h-1zM64 698h1v1h-1zM65 698h1v1h-1zM66 698h1v1h-1zM67 698h1v1h-1zM68 698h1v1h-1zM69 698h1v1h-1zM70 698h1v1h-1zM71 698h1v1h-1zM72 698h1v1h-1zM73 698h1v1h-1zM74 698h1v1h-1zM75 698h1v1h-1zM76 698h1v1h-1zM77 698h1v1h-1zM78 698h1v1h-1zM79 698h1v1h-1zM80 698h1v1h-1zM81 698h1v1h-1zM82 698h1v1h-1zM83 698h1v1h-1zM84 698h1v1h-1zM85 698h1v1h-1zM86 698h1v1h-1zM87 698h1v1h-1zM88 698h1v1h-1zM89 698h1v1h-1zM90 698h1v1h-1zM91 698h1v1h-1zM92 698h1v1h-1zM93 698h1v1h-1zM94 698h1v1h-1zM95 698h1v1h-1zM96 698h1v1h-1zM97 698h1v1h-1zM98 698h1v1h-1zM99 698h1v1h-1zM100 698h1v1h-1zM101 698h1v1h-1zM102 698h1v1h-1zM103 698h1v1h-1zM104 698h1v1h-1zM105 698h1v1h-1zM106 698h1v1h-1zM107 698h1v1h-1zM108 698h1v1h-1zM109 698h1v1h-1zM110 698h1v1h-1zM111 698h1v1h-1zM112 698h1v1h-1zM113 698h1v1h-1zM114 698h1v1h-1zM115 698h1v1h-1zM116 698h1v1h-1zM117 698h1v1h-1zM118 698h1v1h-1zM119 698h1v1h-1zM120 698h1v1h-1zM121 698h1v1h-1zM122 698h1v1h-1zM123 698h1v1h-1zM124 698h1v1h-1zM125 698h1v1h-1zM126 698h1v1h-1zM127 698h1v1h-1zM128 698h1v1h-1zM129 698h1v1h-1zM130 698h1v1h-1zM131 698h1v1h-1zM132 698h1v1h-1zM133 698h1v1h-1zM134 698h1v1h-1zM135 698h1v1h-1zM136 698h1v1h-1zM137 698h1v1h-1zM138 698h1v1h-1zM139 698h1v1h-1zM140 698h1v1h-1zM141 698h1v1h-1zM142 698h1v1h-1zM143 698h1v1h-1zM144 698h1v1h-1zM145 698h1v1h-1zM146 698h1v1h-1zM147 698h1v1h-1zM148 698h1v1h-1zM149 698h1v1h-1zM150 698h1v1h-1zM151 698h1v1h-1zM152 698h1v1h-1zM153 698h1v1h-1zM154 698h1v1h-1zM155 698h1v1h-1zM156 698h1v1h-1zM157 698h1v1h-1zM158 698h1v1h-1zM159 698h1v1h-1zM160 698h1v1h-1zM161 698h1v1h-1zM162 698h1v1h-1zM163 698h1v1h-1zM164 698h1v1h-1zM165 698h1v1h-1zM166 698h1v1h-1zM167 698h1v1h-1zM168 698h1v1h-1zM169 698h1v1h-1zM170 698h1v1h-1zM171 698h1v1h-1zM172 698h1v1h-1zM173 698h1v1h-1zM174 698h1v1h-1zM175 698h1v1h-1zM176 698h1v1h-1zM177 698h1v1h-1zM178 698h1v1h-1zM179 698h1v1h-1zM180 698h1v1h-1zM181 698h1v1h-1zM182 698h1v1h-1zM183 698h1v1h-1zM184 698h1v1h-1zM185 698h1v1h-1zM186 698h1v1h-1zM187 698h1v1h-1zM188 698h1v1h-1zM189 698h1v1h-1zM190 698h1v1h-1zM191 698h1v1h-1zM192 698h1v1h-1zM193 698h1v1h-1zM194 698h1v1h-1zM195 698h1v1h-1zM196 698h1v1h-1zM197 698h1v1h-1zM198 698h1v1h-1zM199 698h1v1h-1zM200 698h1v1h-1zM201 698h1v1h-1zM202 698h1v1h-1zM203 698h1v1h-1zM204 698h1v1h-1zM205 698h1v1h-1zM206 698h1v1h-1zM207 698h1v1h-1zM208 698h1v1h-1zM209 698h1v1h-1zM210 698h1v1h-1zM211 698h1v1h-1zM212 698h1v1h-1zM213 698h1v1h-1zM214 698h1v1h-1zM215 698h1v1h-1zM216 698h1v1h-1zM217 698h1v1h-1zM218 698h1v1h-1zM219 698h1v1h-1zM220 698h1v1h-1zM221 698h1v1h-1zM222 698h1v1h-1zM223 698h1v1h-1zM224 698h1v1h-1zM225 698h1v1h-1zM226 698h1v1h-1zM227 698h1v1h-1zM228 698h1v1h-1zM229 698h1v1h-1zM230 698h1v1h-1zM231 698h1v1h-1zM232 698h1v1h-1zM233 698h1v1h-1zM234 698h1v1h-1zM235 698h1v1h-1zM236 698h1v1h-1zM237 698h1v1h-1zM238 698h1v1h-1zM239 698h1v1h-1zM240 698h1v1h-1zM241 698h1v1h-1zM242 698h1v1h-1zM243 698h1v1h-1zM244 698h1v1h-1zM245 698h1v1h-1zM246 698h1v1h-1zM247 698h1v1h-1zM248 698h1v1h-1zM249 698h1v1h-1zM250 698h1v1h-1zM251 698h1v1h-1zM252 698h1v1h-1zM253 698h1v1h-1zM254 698h1v1h-1zM255 698h1v1h-1zM256 698h1v1h-1zM257 698h1v1h-1zM258 698h1v1h-1zM259 698h1v1h-1zM260 698h1v1h-1zM261 698h1v1h-1zM262 698h1v1h-1zM263 698h1v1h-1zM264 698h1v1h-1zM265 698h1v1h-1zM266 698h1v1h-1zM267 698h1v1h-1zM268 698h1v1h-1zM269 698h1v1h-1zM270 698h1v1h-1zM271 698h1v1h-1zM272 698h1v1h-1zM273 698h1v1h-1zM274 698h1v1h-1zM275 698h1v1h-1zM276 698h1v1h-1zM277 698h1v1h-1zM278 698h1v1h-1zM279 698h1v1h-1zM280 698h1v1h-1zM281 698h1v1h-1zM282 698h1v1h-1zM283 698h1v1h-1zM284 698h1v1h-1zM285 698h1v1h-1zM286 698h1v1h-1zM287 698h1v1h-1zM288 698h1v1h-1zM289 698h1v1h-1zM290 698h1v1h-1zM291 698h1v1h-1zM292 698h1v1h-1zM293 698h1v1h-1zM294 698h1v1h-1zM295 698h1v1h-1zM296 698h1v1h-1zM297 698h1v1h-1zM298 698h1v1h-1zM299 698h1v1h-1zM300 698h1v1h-1zM301 698h1v1h-1zM302 698h1v1h-1zM303 698h1v1h-1zM304 698h1v1h-1zM305 698h1v1h-1zM306 698h1v1h-1zM307 698h1v1h-1zM308 698h1v1h-1zM309 698h1v1h-1zM310 698h1v1h-1zM311 698h1v1h-1zM312 698h1v1h-1zM313 698h1v1h-1zM314 698h1v1h-1zM315 698h1v1h-1zM316 698h1v1h-1zM317 698h1v1h-1zM318 698h1v1h-1zM319 698h1v1h-1zM320 698h1v1h-1zM321 698h1v1h-1zM322 698h1v1h-1zM323 698h1v1h-1zM324 698h1v1h-1zM325 698h1v1h-1zM326 698h1v1h-1zM327 698h1v1h-1zM328 698h1v1h-1zM329 698h1v1h-1zM330 698h1v1h-1zM331 698h1v1h-1zM332 698h1v1h-1zM333 698h1v1h-1zM334 698h1v1h-1zM335 698h1v1h-1zM336 698h1v1h-1zM337 698h1v1h-1zM338 698h1v1h-1zM339 698h1v1h-1zM340 698h1v1h-1zM341 698h1v1h-1zM342 698h1v1h-1zM343 698h1v1h-1zM344 698h1v1h-1zM345 698h1v1h-1zM346 698h1v1h-1zM347 698h1v1h-1zM348 698h1v1h-1zM349 698h1v1h-1zM350 698h1v1h-1zM351 698h1v1h-1zM352 698h1v1h-1zM353 698h1v1h-1zM354 698h1v1h-1zM355 698h1v1h-1zM356 698h1v1h-1zM357 698h1v1h-1zM358 698h1v1h-1zM359 698h1v1h-1zM360 698h1v1h-1zM361 698h1v1h-1zM362 698h1v1h-1zM363 698h1v1h-1zM364 698h1v1h-1zM365 698h1v1h-1zM366 698h1v1h-1zM367 698h1v1h-1zM368 698h1v1h-1zM369 698h1v1h-1zM370 698h1v1h-1zM371 698h1v1h-1zM372 698h1v1h-1zM373 698h1v1h-1zM374 698h1v1h-1zM375 698h1v1h-1zM376 698h1v1h-1zM377 698h1v1h-1zM378 698h1v1h-1zM379 698h1v1h-1zM380 698h1v1h-1zM381 698h1v1h-1zM382 698h1v1h-1zM383 698h1v1h-1zM384 698h1v1h-1zM385 698h1v1h-1zM386 698h1v1h-1zM387 698h1v1h-1zM388 698h1v1h-1zM389 698h1v1h-1zM390 698h1v1h-1zM391 698h1v1h-1zM392 698h1v1h-1zM393 698h1v1h-1zM394 698h1v1h-1zM395 698h1v1h-1zM396 698h1v1h-1zM397 698h1v1h-1zM398 698h1v1h-1zM399 698h1v1h-1zM400 698h1v1h-1zM401 698h1v1h-1zM402 698h1v1h-1zM403 698h1v1h-1zM404 698h1v1h-1zM405 698h1v1h-1zM406 698h1v1h-1zM407 698h1v1h-1zM408 698h1v1h-1zM409 698h1v1h-1zM410 698h1v1h-1zM411 698h1v1h-1zM412 698h1v1h-1zM413 698h1v1h-1zM414 698h1v1h-1zM415 698h1v1h-1zM416 698h1v1h-1zM417 698h1v1h-1zM418 698h1v1h-1zM419 698h1v1h-1zM420 698h1v1h-1zM421 698h1v1h-1zM422 698h1v1h-1zM423 698h1v1h-1zM424 698h1v1h-1zM425 698h1v1h-1zM426 698h1v1h-1zM427 698h1v1h-1zM428 698h1v1h-1zM429 698h1v1h-1zM430 698h1v1h-1zM431 698h1v1h-1zM432 698h1v1h-1zM433 698h1v1h-1zM434 698h1v1h-1zM435 698h1v1h-1zM436 698h1v1h-1zM437 698h1v1h-1zM438 698h1v1h-1zM439 698h1v1h-1zM440 698h1v1h-1zM441 698h1v1h-1zM442 698h1v1h-1zM443 698h1v1h-1zM444 698h1v1h-1zM445 698h1v1h-1zM446 698h1v1h-1zM447 698h1v1h-1zM448 698h1v1h-1zM449 698h1v1h-1zM450 698h1v1h-1zM451 698h1v1h-1zM452 698h1v1h-1zM453 698h1v1h-1zM454 698h1v1h-1zM455 698h1v1h-1zM456 698h1v1h-1zM457 698h1v1h-1zM458 698h1v1h-1zM459 698h1v1h-1zM460 698h1v1h-1zM461 698h1v1h-1zM462 698h1v1h-1zM463 698h1v1h-1zM464 698h1v1h-1zM465 698h1v1h-1zM466 698h1v1h-1zM467 698h1v1h-1zM468 698h1v1h-1zM469 698h1v1h-1zM470 698h1v1h-1zM471 698h1v1h-1zM472 698h1v1h-1zM473 698h1v1h-1zM474 698h1v1h-1zM475 698h1v1h-1zM476 698h1v1h-1zM477 698h1v1h-1zM478 698h1v1h-1zM479 698h1v1h-1zM480 698h1v1h-1zM481 698h1v1h-1zM482 698h1v1h-1zM483 698h1v1h-1zM484 698h1v1h-1zM485 698h1v1h-1zM486 698h1v1h-1zM487 698h1v1h-1zM488 698h1v1h-1zM489 698h1v1h-1zM490 698h1v1h-1zM491 698h1v1h-1zM492 698h1v1h-1zM493 698h1v1h-1zM494 698h1v1h-1zM495 698h1v1h-1zM496 698h1v1h-1zM497 698h1v1h-1zM498 698h1v1h-1zM499 698h1v1h-1zM500 698h1v1h-1zM501 698h1v1h-1zM502 698h1v1h-1zM503 698h1v1h-1zM504 698h1v1h-1zM505 698h1v1h-1zM506 698h1v1h-1zM507 698h1v1h-1zM508 698h1v1h-1zM509 698h1v1h-1zM510 698h1v1h-1zM511 698h1v1h-1zM512 698h1v1h-1zM513 698h1v1h-1zM514 698h1v1h-1zM515 698h1v1h-1zM516 698h1v1h-1zM517 698h1v1h-1zM518 698h1v1h-1zM519 698h1v1h-1zM520 698h1v1h-1zM521 698h1v1h-1zM522 698h1v1h-1zM523 698h1v1h-1zM524 698h1v1h-1zM525 698h1v1h-1zM526 698h1v1h-1zM527 698h1v1h-1zM528 698h1v1h-1zM529 698h1v1h-1zM530 698h1v1h-1zM531 698h1v1h-1zM532 698h1v1h-1zM533 698h1v1h-1zM534 698h1v1h-1zM535 698h1v1h-1zM536 698h1v1h-1zM537 698h1v1h-1zM538 698h1v1h-1zM539 698h1v1h-1zM540 698h1v1h-1zM541 698h1v1h-1zM542 698h1v1h-1zM543 698h1v1h-1zM544 698h1v1h-1zM545 698h1v1h-1zM546 698h1v1h-1zM547 698h1v1h-1zM548 698h1v1h-1zM549 698h1v1h-1zM550 698h1v1h-1zM551 698h1v1h-1zM552 698h1v1h-1zM553 698h1v1h-1zM554 698h1v1h-1zM555 698h1v1h-1zM556 698h1v1h-1zM557 698h1v1h-1zM558 698h1v1h-1zM559 698h1v1h-1zM560 698h1v1h-1zM561 698h1v1h-1zM562 698h1v1h-1zM563 698h1v1h-1zM564 698h1v1h-1zM565 698h1v1h-1zM566 698h1v1h-1zM567 698h1v1h-1zM568 698h1v1h-1zM569 698h1v1h-1zM570 698h1v1h-1zM571 698h1v1h-1zM572 698h1v1h-1zM573 698h1v1h-1zM574 698h1v1h-1zM575 698h1v1h-1zM576 698h1v1h-1zM577 698h1v1h-1zM578 698h1v1h-1zM579 698h1v1h-1zM580 698h1v1h-1zM581 698h1v1h-1zM582 698h1v1h-1zM583 698h1v1h-1zM584 698h1v1h-1zM585 698h1v1h-1zM586 698h1v1h-1zM587 698h1v1h-1zM588 698h1v1h-1zM589 698h1v1h-1zM590 698h1v1h-1zM591 698h1v1h-1zM592 698h1v1h-1zM593 698h1v1h-1zM594 698h1v1h-1zM595 698h1v1h-1zM596 698h1v1h-1zM597 698h1v1h-1zM598 698h1v1h-1zM599 698h1v1h-1zM600 698h1v1h-1zM601 698h1v1h-1zM602 698h1v1h-1zM603 698h1v1h-1zM604 698h1v1h-1zM605 698h1v1h-1zM606 698h1v1h-1zM607 698h1v1h-1zM608 698h1v1h-1zM609 698h1v1h-1zM610 698h1v1h-1zM611 698h1v1h-1zM612 698h1v1h-1zM613 698h1v1h-1zM614 698h1v1h-1zM615 698h1v1h-1zM616 698h1v1h-1zM617 698h1v1h-1zM618 698h1v1h-1zM619 698h1v1h-1zM620 698h1v1h-1zM621 698h1v1h-1zM622 698h1v1h-1zM623 698h1v1h-1zM624 698h1v1h-1zM625 698h1v1h-1zM626 698h1v1h-1zM627 698h1v1h-1zM628 698h1v1h-1zM629 698h1v1h-1zM630 698h1v1h-1zM631 698h1v1h-1zM632 698h1v1h-1zM633 698h1v1h-1zM634 698h1v1h-1zM635 698h1v1h-1zM636 698h1v1h-1zM637 698h1v1h-1zM638 698h1v1h-1zM639 698h1v1h-1zM640 698h1v1h-1zM641 698h1v1h-1zM642 698h1v1h-1zM643 698h1v1h-1zM644 698h1v1h-1zM645 698h1v1h-1zM646 698h1v1h-1zM647 698h1v1h-1zM648 698h1v1h-1zM649 698h1v1h-1zM650 698h1v1h-1zM651 698h1v1h-1zM652 698h1v1h-1zM653 698h1v1h-1zM654 698h1v1h-1zM655 698h1v1h-1zM656 698h1v1h-1zM657 698h1v1h-1zM658 698h1v1h-1zM659 698h1v1h-1zM660 698h1v1h-1zM661 698h1v1h-1zM662 698h1v1h-1zM663 698h1v1h-1zM664 698h1v1h-1zM665 698h1v1h-1zM666 698h1v1h-1zM667 698h1v1h-1zM668 698h1v1h-1zM669 698h1v1h-1zM670 698h1v1h-1zM671 698h1v1h-1zM672 698h1v1h-1zM673 698h1v1h-1zM674 698h1v1h-1zM675 698h1v1h-1zM676 698h1v1h-1zM677 698h1v1h-1zM678 698h1v1h-1zM679 698h1v1h-1zM680 698h1v1h-1zM681 698h1v1h-1zM682 698h1v1h-1zM683 698h1v1h-1zM684 686h1v13h-1zM685 659h1v27h-1zM686 632h1v27h-1zM687 605h1v27h-1zM688 578h1v27h-1zM689 563h1v15h-1zM690 563h1v1h-1zM691 563h1v1h-1zM692 563h1v1h-1zM693 563h1v1h-1zM694 563h1v1h-1zM695 563h1v1h-1zM696 563h1v1h-1zM697 563h1v1h-1zM698 563h1v1h-1zM699 563h1v1h-1zM700 563h1v1h-1zM701 563h1v1h-1zM702 563h1v1h-1zM703 563h1v1h-1zM704 563h1v1h-1zM705 563h1v1h-1zM706 563h1v1h-1zM707 563h1v1h-1zM708 563h1v1h-1zM709 563h1v1h-1zM710 563h1v1h-1zM711 563h1v1h-1zM712 563h1v1h-1zM713 563h1v14h-1zM714 577h1v27h-1zM715 604h1v27h-1zM716 631h1v27h-1zM717 658h1v27h-1zM718 685h1v14h-1zM719 698h1v1h-1zM720 698h1v1h-1zM721 698h1v1h-1zM722 698h1v1h-1zM723 698h1v1h-1zM724 698h1v1h-1zM725 698h1v1h-1zM726 698h1v1h-1zM727 698h1v1h-1zM728 698h1v1h-1zM729 698h1v1h-1zM730 698h1v1h-1zM731 698h1v1h-1zM732 698h1v1h-1zM733 698h1v1h-1zM734 698h1v1h-1zM735 698h1v1h-1zM736 698h1v1h-1zM737 698h1v1h-1zM738 698h1v1h-1zM739 698h1v1h-1zM740 698h1v1h-1zM741 698h1v1h-1zM742 698h1v1h-1zM743 698h1v1h-1zM744 698h1v1h-1zM745 698h1v1h-1zM746 698h1v1h-1zM747 698h1v1h-1zM748 698h1v1h-1zM749 698h1v1h-1zM750 698h1v1h-1zM751 698h1v1h-1zM752 698h1v1h-1zM753 698h1v1h-1zM754 698h1v1h-1zM755 698h1v1h-1zM756 698h1v1h-1zM757 698h1v1h-1zM758 698h1v1h-1zM759 698h1v1h-1zM760 698h1v1h-1zM761 698h1v1h-1zM762 698h1v1h-1zM763 698h1v1h-1zM764 698h1v1h-1zM765 698h1v1h-1zM766 698h1v1h-1zM767 698h1v1h-1zM768 698h1v1h-1zM769 698h1v1h-1zM770 698h1v1h-1zM771 698h1v1h-1zM772 698h1v1h-1zM773 698h1v1h-1zM774 698h1v1h-1zM775 698h1v1h-1zM776 698h1v1h-1zM777 698h1v1h-1zM778 698h1v1h-1zM779 698h1v1h-1zM780 698h1v1h-1zM781 698h1v1h-1zM782 698h1v1h-1zM783 698h1v1h-1zM784 698h1v1h-1zM785 698h1v1h-1zM786 698h1v1h-1zM787 698h1v1h-1zM788 698h1v1h-1zM789 698h1v1h-1zM790 698h1v1h-1zM791 698h1v1h-1zM792 698h1v1h-1zM793 698h1v1h-1zM794 698h1v1h-1zM795 698h1v1h-1zM796 698h1v1h-1zM797 698h1v1h-1zM798 698h1v1h-1zM799 698h1v1h-1zM800 698h1v1h-1zM801 698h1v1h-1zM802 698h1v1h-1zM803 698h1v1h-1zM804 698h1v1h-1zM805 698h1v1h-1zM806 698h1v1h-1zM807 698h1v1h-1zM808 698h1v1h-1zM809 698h1v1h-1zM810 698h1v1h-1zM811 698h1v1h-1zM812 698h1v1h-1zM813 698h1v1h-1zM814 698h1v1h-1zM815 698h1v1h-1zM816 698h1v1h-1zM817 698h1v1h-1zM818 698h1v1h-1zM819 698h1v1h-1zM820 698h1v1h-1zM821 698h1v1h-1zM822 698h1v1h-1zM823 698h1v1h-1zM824 698h1v1h-1zM825 698h1v1h-1zM826 698h1v1h-1zM827 698h1v1h-1zM828 698h1v1h-1zM829 698h1v1h-1zM830 698h1v1h-1zM831 698h1v1h-1zM832 698h1v1h-1zM833 698h1v1h-1zM834 698h1v1h-1zM835 698h1v1h-1zM836 698h1v1h-1zM837 698h1v1h-1zM838 698h1v1h-1zM839 698h1v1h-1zM840 698h1v1h-1zM841 698h1v1h-1zM842 698h1v1h-1zM843 698h1v1h-1zM844 698h1v1h-1zM845 698h1v1h-1zM846 698h1v1h-1zM847 698h1v1h-1zM848 698h1v1h-1zM849 698h1v1h-1zM850 698h1v1h-1zM851 698h1v1h-1zM852 698h1v1h-1zM853 698h1v1h-1zM854 698h1v1h-1zM855 698h1v1h-1zM856 698h1v1h-1zM857 698h1v1h-1zM858 698h1v1h-1zM859 698h1v1h-1zM860 698h1v1h-1zM861 698h1v1h-1zM862 698h1v1h-1zM863 698h1v1h-1zM864 698h1v1h-1zM865 698h1v1h-1zM866 698h1v1h-1zM867 698h1v1h-1zM868 698h1v1h-1zM869 698h1v1h-1zM870 698h1v1h-1zM871 698h1v1h-1zM872 698h1v1h-1zM873 698h1v1h-1zM874 698h1v1h-1zM875 698h1v1h-1zM876 698h1v1h-1zM877 698h1v1h-1zM878 698h1v1h-1zM879 698h1v1h-1zM880 698h1v1h-1zM881 698h1v1h-1zM882 698h1v1h-1zM883 698h1v1h-1zM884 698h1v1h-1zM885 698h1v1h-1zM886 698h1v1h-1zM887 698h1v1h-1zM888 698h1v1h-1zM889 698h1v1h-1zM890 698h1v1h-1zM891 698h1v1h-1zM892 698h1v1h-1zM893 698h1v1h-1zM894 698h1v1h-1zM895 698h1v1h-1zM896 698h1v1h-1zM897 698h1v1h-1zM898 698h1v1h-1zM899 698h1v1h-1zM900 698h1v1h-1zM901 698h1v1h-1zM902 698h1v1h-1zM903 698h1v1h-1zM904 698h1v1h-1zM905 698h1v1h-1zM906 698h1v1h-1zM907 698h1v1h-1zM908 698h1v1h-1zM909 698h1v1h-1zM910 698h1v1h-1zM911 698h1v1h-1zM912 698h1v1h-1zM913 698h1v1h-1zM914 698h1v1h-1zM915 698h1v1h-1zM916 698h1v1h-1zM917 698h1v1h-1zM918 698h1v1h-1zM919 698h1v1h-1zM920 698h1v1h-1zM921 698h1v1h-1zM922 698h1v1h-1zM923 698h1v1h-1zM924 698h1v1h-1zM925 698h1v1h-1zM926 698h1v1h-1zM927 698h1v1h-1zM928 698h1v1h-1zM929 698h1v1h-1zM930 698h1v1h-1zM931 698h1v1h-1zM932 698h1v1h-1zM933 698h1v1h-1zM934 698h1v1h-1zM935 698h1v1h-1zM936 698h1v1h-1zM937 698h1v1h-1zM938 698h1v1h-1zM939 698h1v1h-1zM940 698h1v1h-1zM941 698h1v1h-1zM942 698h1v1h-1zM943 698h1v1h-1zM944 698h1v1h-1zM945 698h1v1h-1zM946 698h1v1h-1zM947 698h1v1h-1zM948 698h1v1h-1zM949 698h1v1h-1zM950 698h1v1h-1zM951 698h1v1h-1zM952 698h1v1h-1zM953 698h1v1h-1zM954 698h1v1h-1zM955 698h1v1h-1zM956 698h1v1h-1zM957 698h1v1h-1zM958 698h1v1h-1zM959 698h1v1h-1zM960 698h1v1h-1zM961 698h1v1h-1zM962 698h1v1h-1zM963 698h1v1h-1zM964 698h1v1h-1zM965 698h1v1h-1zM966 698h1v1h-1zM967 698h1v1h-1zM968 698h1v1h-1zM969 698h1v1h-1zM970 698h1v1h-1zM971 698h1v1h-1zM972 698h1v1h-1zM973 698h1v1h-1zM974 698h1v1h-1zM975 698h1v1h-1zM976 698h1v1h-1zM977 698h1v1h-1zM978 698h1v1h-1zM979 698h1v1h-1zM980 698h1v1h-1zM981 698h1v1h-1zM982 698h1v1h-1zM983 698h1v1h-1zM984 698h1v1h-1zM985 698h1v1h-1zM986 698h1v1h-1zM987 698h1v1h-1zM988 698h1v1h-1zM989 698h1v1h-1zM990 698h1v1h-1zM991 698h1v1h-1zM992 698h1v1h-1zM993 698h1v1h-1zM994 698h1v1h-1zM995 698h1v1h-1zM996 698h1v1h-1zM997 698h1v1h-1zM998 698h1v1h-1zM999 698h1v1h-1zM1000 698h1v1h-1zM1001 698h1v1h-1zM1002 698h1v1h-1zM1003 698h1v1h-1zM1004 698h1v1h-1zM1005 698h1v1h-1zM1006 698h1v1h-1zM1007 698h1v1h-1zM1008 698h1v1h-1zM1009 698h1v1h-1zM1010 698h1v1h-1zM1011 698h1v1h-1zM1012 698h1v1h-1zM1013 698h1v1h-1zM1014 698h1v1h-1zM1015 698h1v1h-1zM1016 698h1v1h-1zM1017 698h1v1h-1zM1018 698h1v1h-1zM1019 698h1v1h-1zM1020 698h1v1h-1zM1021 698h1v1h-1zM1022 698h1v1h-1zM1023 698h1v1h-1zM1024 698h1v1h-1zM1025 698h1v1h-1zM1026 698h1v1h-1zM1027 698h1v1h-1zM1028 698h1v1h-1zM1029 698h1v1h-1zM1030 698h1v1h-1zM1031 698h1v1h-1zM1032 698h1v1h-1zM1033 698h1v1h-1zM1034 698h1v1h-1zM1035 698h1v1h-1zM1036 698h1v1h-1zM1037 698h1v1h-1zM1038 698h1v1h-1zM1039 698h1v1h-1zM1040 698h1v1h-1zM1041 698h1v1h-1zM1042 698h1v1h-1zM1043 698h1v1h-1zM1044 698h1v1h-1zM1045 698h1v1h-1zM1046 698h1v1h-1zM1047 698h1v1h-1zM1048 698h1v1h-1zM1049 698h1v1h-1zM1050 698h1v1h-1zM1051 698h1v1h-1zM1052 698h1v1h-1zM1053 698h1v1h-1zM1054 698h1v1h-1zM1055 698h1v1h-1zM1056 698h1v1h-1zM1057 698h1v1h-1zM1058 698h1v1h-1zM1059 698h1v1h-1zM1060 698h1v1h-1zM1061 698h1v1h-1zM1062 698h1v1h-1zM1063 698h1v1h-1zM1064 698h1v1h-1zM1065 698h1v1h-1zM1066 698h1v1h-1zM1067 698h1v1h-1zM1068 698h1v1h-1zM1069 698h1v1h-1zM1070 698h1v1h-1zM1071 698h1v1h-1zM1072 698h1v1h-1zM1073 698h1v1h-1zM1074 698h1v1h-1zM1075 698h1v1h-1zM1076 698h1v1h-1zM1077 698h1v1h-1zM1078 698h1v1h-1zM1079 698h1v1h-1zM1080 698h1v1h-1zM1081 698h1v1h-1zM1082 698h1v1h-1zM1083 698h1v1h-1zM1084 698h1v1h-1zM1085 698h1v1h-1zM1086 698h1v1h-1zM1087 698h1v1h-1zM1088 698h1v1h-1zM1089 698h1v1h-1zM1090 698h1v1h-1zM1091 698h1v1h-1zM1092 698h1v1h-1zM1093 698h1v1h-1zM1094 698h1v1h-1zM1095 698h1v1h-1zM1096 698h1v1h-1zM1097 698h1v1h-1zM1098 698h1v1h-1zM1099 698h1v1h-1zM1100 698h1v1h-1zM1101 698h1v1h-1zM1102 698h1v1h-1zM1103 698h1v1h-1zM1104 698h1v1h-1zM1105 698h1v1h-1zM1106 698h1v1h-1zM1107 698h1v1h-1zM1108 698h1v1h-1zM1109 698h1v1h-1zM1110 698h1v1h-1zM1111 698h1v1h-1zM1112 698h1v1h-1zM1113 698h1v1h-1zM1114 698h1v1h-1zM1115 698h1v1h-1zM1116 698h1v1h-1zM1117 698h1v1h-1zM1118 698h1v1h-1zM1119 698h1v1h-1zM1120 698h1v1h-1zM1121 698h1v1h-1zM1122 698h1v1h-1zM1123 698h1v1h-1zM1124 698h1v1h-1zM1125 698h1v1h-1zM1126 698h1v1h-1zM1127 698h1v1h-1zM1128 698h1v1h-1zM1129 698h1v1h-1zM1130 698h1v1h-1zM1131 698h1v1h-1zM1132 698h1v1h-1zM1133 698h1v1h-1zM1134 698h1v1h-1zM1135 698h1v1h-1zM1136 698h1v1h-1zM1137 698h1v1h-1zM1138 698h1v1h-1zM1139 698h1v1h-1zM1140 698h1v1h-1zM1141 698h1v1h-1zM1142 698h1v1h-1zM1143 698h1v1h-1zM1144 698h1v1h-1zM1145 698h1v1h-1zM1146 698h1v1h-1zM1147 698h1v1h-1zM1148 698h1v1h-1zM1149 698h1v1h-1zM1150 698h1v1h-1zM1151 698h1v1h-1zM1152 698h1v1h-1zM1153 698h1v1h-1zM1154 698h1v1h-1zM1155 698h1v1h-1zM1156 698h1v1h-1zM1157 698h1v1h-1zM1158 698h1v1h-1zM1159 698h1v1h-1zM1160 698h1v1h-1zM1161 698h1v1h-1zM1162 698h1v1h-1zM1163 698h1v1h-1zM1164 698h1v1h-1zM1165 698h1v1h-1zM1166 698h1v1h-1zM1167 698h1v1h-1zM1168 698h1v1h-1zM1169 698h1v1h-1zM1170 698h1v1h-1zM1171 698h1v1h-1zM1172 698h1v1h-1zM1173 698h1v1h-1zM1174 698h1v1h-1zM1175 698h1v1h-1zM1176 698h1v1h-1zM1177 698h1v1h-1zM1178 698h1v1h-1zM1179 698h1v1h-1zM1180 698h1v1h-1zM1181 698h1v1h-1zM1182 698h1v1h-1zM1183 698h1v1h-1zM1184 698h1v1h-1zM1185 698h1v1h-1zM1186 698h1v1h-1zM1187 698h1v1h-1zM1188 698h1v1h-1zM1189 698h1v1h-1zM1190 698h1v1h-1zM1191 698h1v1h-1zM1192 698h1v1h-1zM1193 698h1v1h-1zM1194 698h1v1h-1zM1195 698h1v1h-1zM1196 698h1v1h-1zM1197 698h1v1h-1zM1198 698h1v1h-1zM1199 698h1v1h-1zM1200 698h1v1h-1zM1201 698h1v1h-1zM1202 698h1v1h-1zM1203 698h1v1h-1zM1204 698h1v1h-1zM1205 698h1v1h-1zM1206 698h1v1h-1zM1207 698h1v1h-1zM1208 698h1v1h-1zM1209 698h1v1h-1zM1210 698h1v1h-1zM1211 698h1v1h-1zM1212 698h1v1h-1zM1213 698h1v1h-1zM1214 698h1v1h-1zM1215 698h1v1h-1zM1216 698h1v1h-1zM1217 698h1v1h-1zM1218 698h1v1h-1zM1219 698h1v1h-1zM1220 698h1v1h-1zM1221 698h1v1h-1zM1222 698h1v1h-1zM1223 698h1v1h-1zM1224 698h1v1h-1zM1225 698h1v1h-1zM1226 698h1v1h-1zM1227 698h1v1h-1zM1228 698h1v1h-1zM1229 698h1v1h-1zM1230 698h1v1h-1zM1231 698h1v1h-1zM1232 698h1v1h-1zM1233 698h1v1h-1zM1234 698h1v1h-1zM1235 698h1v1h-1zM1236 698h1v1h-1zM1237 698h1v1h-1zM1238 698h1v1h-1zM1239 698h1v1h-1zM1240 698h1v1h-1zM1241 698h1v1h-1zM1242 698h1v1h-1zM1243 698h1v1h-1zM1244 698h1v1h-1zM1245 698h1v1h-1zM1246 698h1v1h-1zM1247 698h1v1h-1zM1248 698h1v1h-1zM1249 698h1v1h-1zM1250 698h1v1h-1zM1251 698h1v1h-1zM1252 698h1v1h-1zM1253 698h1v1h-1zM1254 698h1v1h-1zM1255 698h1v1h-1zM1256 698h1v1h-1zM1257 698h1v1h-1zM1258 698h1v1h-1zM1259 698h1v1h-1zM1260 698h1v1h-1zM1261 698h1v1h-1zM1262 698h1v1h-1zM1263 698h1v1h-1zM1264 698h1v1h-1zM1265 698h1v1h-1zM1266 698h1v1h-1zM1267 686h1v13h-1zM1268 659h1v27h-1zM1269 632h1v27h-1zM1270 605h1v27h-1zM1271 578h1v27h-1zM1272 563h1v15h-1zM1273 563h1v1h-1zM1274 563h1v1h-1zM1275 563h1v1h-1zM1276 563h1v1h-1zM1277 563h1v1h-1zM1278 563h1v1h-1zM1279 563h1v1h-1zM1280 563h1v1h-1zM1281 563h1v1h-1zM1282 563h1v1h-1zM1283 563h1v1h-1zM1284 563h1v1h-1zM1285 563h1v1h-1zM1286 563h1v1h-1zM1287 563h1v1h-1zM1288 563h1v1h-1zM1289 563h1v1h-1zM1290 563h1v1h-1zM1291 563h1v1h-1zM1292 563h1v1h-1zM1293 563h1v1h-1zM1294 563h1v1h-1zM1295 563h1v1h-1zM1296 563h1v14h-1zM1297 577h1v27h-1zM1298 604h1v27h-1zM1299 631h1v27h-1zM1300 658h1v27h-1zM1301 685h1v14h-1zM1302 698h1v1h-1zM1303 698h1v1h-1zM1304 698h1v1h-1zM1305 698h1v1h-1zM1306 698h1v1h-1zM1307 698h1v1h-1zM1308 698h1v1h-1zM1309 698h1v1h-1zM1310 698h1v1h-1zM1311 698h1v1h-1zM1312 698h1v1h-1zM1313 698h1v1h-1zM1314 698h1v1h-1zM1315 698h1v1h-1zM1316 698h1v1h-1zM1317 698h1v1h-1zM1318 698h1v1h-1zM1319 698h1v1h-1zM1320 698h1v1h-1zM1321 698h1v1h-1zM1322 698h1v1h-1zM1323 698h1v1h-1zM1324 698h1v1h-1zM1325 698h1v1h-1zM1326 698h1v1h-1zM1327 698h1v1h-1zM1328 698h1v1h-1zM1329 698h1v1h-1zM1330 698h1v1h-1zM1331 698h1v1h-1zM1332 698h1v1h-1zM1333 698h1v1h-1zM1334 698h1v1h-1zM1335 698h1v1h-1zM1336 698h1v1h-1zM1337 698h1v1h-1zM1338 698h1v1h-1zM1339 698h1v1h-1zM1340 698h1v1h-1zM1341 698h1v1h-1zM1342 698h1v1h-1zM1343 698h1v1h-1zM1344 698h1v1h-1zM1345 698h1v1h-1zM1346 698h1v1h-1zM1347 698h1v1h-1zM1348 698h1v1h-1zM1349 698h1v1h-1zM1350 698h1v1h-1zM1351 698h1v1h-1zM1352 698h1v1h-1zM1353 698h1v1h-1zM1354 698h1v1h-1zM1355 698h1v1h-1zM1356 698h1v1h-1zM1357 698h1v1h-1zM1358 698h1v1h-1zM1359 698h1v1h-1zM1360 698h1v1h-1zM1361 698h1v1h-1zM1362 698h1v1h-1zM1363 698h1v1h-1zM1364 698h1v1h-1zM1365 698h1v1h-1zM1366 698h1v1h-1zM1367 698h1v1h-1zM1368 698h1v1h-1zM1369 698h1v1h-1zM1370 698h1v1h-1zM1371 698h1v1h-1zM1372 698h1v1h-1zM1373 698h1v1h-1zM1374 698h1v1h-1zM1375 698h1v1h-1zM1376 698h1v1h-1zM1377 698h1v1h-1zM1378 698h1v1h-1zM1379 698h1v1h-1zM1380 698h1v1h-1zM1381 698h1v1h-1zM1382 698h1v1h-1zM1383 698h1v1h-1zM1384 698h1v1h-1zM1385 698h1v1h-1zM1386 698h1v1h-1zM1387 698h1v1h-1zM1388 698h1v1h-1zM1389 698h1v1h-1zM1390 698h1v1h-1zM1391 698h1v1h-1zM1392 698h1v1h-1zM1393 698h1v1h-1zM1394 698h1v1h-1zM1395 698h1v1h-1zM1396 698h1v1h-1zM1397 698h1v1h-1zM1398 698h1v1h-1zM1399 698h1v1h-1zM1400 698h1v1h-1zM1401 698h1v1h-1zM1402 698h1v1h-1zM1403 698h1v1h-1zM1404 698h1v1h-1zM1405 698h1v1h-1zM1406 698h1v1h-1zM1407 698h1v1h-1zM1408 698h1v1h-1zM1409 698h1v1h-1zM1410 698h1v1h-1zM1411 698h1v1h-1zM1412 698h1v1h-1zM1413 698h1v1h-1zM1414 698h1v1h-1zM1415 698h1v1h-1zM1416 698h1v1h-1zM1417 698h1v1h-1zM1418 698h1v1h-1zM1419 698h1v1h-1zM1420 698h1v1h-1zM1421 698h1v1h-1zM1422 698h1v1h-1zM1423 698h1v1h-1zM1424 698h1v1h-1zM1425 698h1v1h-1zM1426 698h1v1h-1zM1427 698h1v1h-1zM1428 698h1v1h-1zM1429 698h1v1h-1zM1430 698h1v1h-1zM1431 698h1v1h-1zM1432 698h1v1h-1zM1433 698h1v1h-1zM1434 698h1v1h-1zM1435 698h1v1h-1zM1436 698h1v1h-1zM1437 698h1v1h-1zM1438 698h1v1h-1zM1439 698h1v1h-1zM1440 698h1v1h-1zM1441 698h1v1h-1zM1442 698h1v1h-1zM1443 698h1v1h-1zM1444 698h1v1h-1zM1445 698h1v1h-1zM1446 698h1v1h-1zM1447 698h1v1h-1zM1448 698h1v1h-1zM1449 698h1v1h-1zM1450 698h1v1h-1zM1451 698h1v1h-1zM1452 698h1v1h-1zM1453 698h1v1h-1zM1454 698h1v1h-1zM1455 698h1v1h-1zM1456 698h1v1h-1zM1457 698h1v1h-1zM1458 698h1v1h-1zM1459 698h1v1h-1zM1460 698h1v1h-1zM1461 698h1v1h-1zM1462 698h1v1h-1zM1463 698h1v1h-1zM1464 698h1v1h-1zM1465 698h1v1h-1zM1466 698h1v1h-1zM1467 698h1v1h-1zM1468 698h1v1h-1zM1469 698h1v1h-1zM1470 698h1v1h-1zM1471 698h1v1h-1zM1472 698h1v1h-1zM1473 698h1v1h-1zM1474 698h1v1h-1zM1475 698h1v1h-1zM1476 698h1v1h-1zM1477 698h1v1h-1zM1478 698h1v1h-1zM1479 698h1v1h-1zM1480 698h1v1h-1zM1481 698h1v1h-1zM1482 698h1v1h-1zM1483 698h1v1h-1zM1484 698h1v1h-1zM1485 698h1v1h-1zM1486 698h1v1h-1zM1487 698h1v1h-1zM1488 698h1v1h-1zM1489 698h1v1h-1zM1490 686h1v13h-1zM1491 659h1v27h-1zM1492 632h1v27h-1zM1493 605h1v27h-1zM1494 578h1v27h-1zM1495 563h1v15h-1zM1496 563h1v1h-1zM1497 563h1v1h-1zM1498 563h1v1h-1zM1499 563h1v1h-1zM1500 563h1v1h-1zM1501 563h1v1h-1zM1502 563h1v1h-1zM1503 563h1v1h-1zM1504 563h1v1h-1zM1505 563h1v14h-1zM1506 577h1v27h-1zM1507 604h1v27h-1zM1508 631h1v27h-1zM1509 658h1v27h-1zM1510 685h1v14h-1zM1511 698h1v1h-1zM1512 698h1v1h-1zM1513 698h1v1h-1zM1514 698h1v1h-1zM1515 698h1v1h-1zM1516 698h1v1h-1zM1517 698h1v1h-1zM1518 698h1v1h-1zM1519 698h1v1h-1zM1520 698h1v1h-1zM1521 698h1v1h-1zM1522 698h1v1h-1zM1523 698h1v1h-1zM1524 698h1v1h-1zM1525 698h1v1h-1zM1526 698h1v1h-1zM1527 698h1v1h-1zM1528 698h1v1h-1zM1529 698h1v1h-1zM1530 698h1v1h-1zM1531 698h1v1h-1zM1532 698h1v1h-1zM1533 698h1v1h-1zM1534 698h1v1h-1zM1535 698h1v1h-1zM1536 698h1v1h-1zM1537 698h1v1h-1zM1538 698h1v1h-1zM1539 698h1v1h-1zM1540 698h1v1h-1zM1541 698h1v1h-1zM1542 698h1v1h-1zM1543 698h1v1h-1zM1544 698h1v1h-1zM1545 698h1v1h-1zM1546 698h1v1h-1zM1547 698h1v1h-1zM1548 698h1v1h-1zM1549 698h1v1h-1zM1550 698h1v1h-1zM1551 698h1v1h-1zM1552 698h1v1h-1zM1553 698h1v1h-1zM1554 698h1v1h-1zM1555 698h1v1h-1zM1556 698h1v1h-1zM1557 698h1v1h-1zM1558 698h1v1h-1zM1559 698h1v1h-1zM1560 698h1v1h-1zM1561 698h1v1h-1zM1562 698h1v1h-1zM1563 698h1v1h-1zM1564 698h1v1h-1zM1565 698h1v1h-1zM1566 698h1v1h-1zM1567 698h1v1h-1zM1568 698h1v1h-1zM1569 698h1v1h-1zM1570 698h1v1h-1zM1571 698h1v1h-1zM1572 698h1v1h-1zM1573 698h1v1h-1zM1574 698h1v1h-1zM1575 698h1v1h-1zM1576 698h1v1h-1zM1577 698h1v1h-1zM1578 698h1v1h-1zM1579 698h1v1h-1zM1580 698h1v1h-1zM1581 698h1v1h-1zM1582 698h1v1h-1zM1583 698h1v1h-1zM1584 698h1v1h-1zM1585 698h1v1h-1zM1586 698h1v1h-1zM1587 698h1v1h-1zM1588 698h1v1h-1zM1589 698h1v1h-1zM1590 698h1v1h-1zM1591 698h1v1h-1zM1592 698h1v1h-1zM1593 698h1v1h-1zM1594 698h1v1h-1zM1595 698h1v1h-1zM1596 698h1v1h-1zM1597 698h1v1h-1zM1598 698h1v1h-1zM1599 698h1v1h-1zM1600 698h1v1h-1zM1601 698h1v1h-1zM1602 686h1v13h-1zM1603 659h1v27h-1zM1604 632h1v27h-1zM1605 605h1v27h-1zM1606 578h1v27h-1zM1607 563h1v15h-1z"/><path fill="#ffff00" d="M0 720h1v1h-1zM1 720h1v2h-1zM2 721h1v1h-1zM3 722h1v1h-1zM4 722h1v1h-1zM5 723h1v1h-1zM6 721h1v2h-1zM7 720h1v2h-1zM8 718h1v2h-1zM9 716h1v2h-1zM10 715h1v2h-1zM11 713h1v2h-1zM12 711h1v2h-1zM13 710h1v2h-1zM14 708h1v2h-1zM15 708h1v1h-1zM16 708h1v1h-1zM17 708h1v1h-1zM18 708h1v1h-1zM19 708h1v1h-1zM20 707h1v1h-1zM21 707h1v1h-1zM22 706h1v1h-1zM23 705h1v2h-1zM24 705h1v1h-1zM25 704h1v1h-1zM26 703h1v2h-1zM27 702h1v2h-1zM28 701h1v2h-1zM29 700h1v2h-1zM30 700h1v1h-1zM31 699h1v1h-1zM32 698h1v1h-1zM33 697h1v1h-1zM34 696h1v2h-1zM35 696h1v1h-1zM36 695h1v1h-1zM37 695h1v1h-1zM38 694h1v1h-1zM39 693h1v2h-1zM40 692h1v2h-1zM41 691h1v2h-1zM42 690h1v1h-1zM43 688h1v2h-1zM44 687h1v2h-1zM45 686h1v1h-1zM46 685h1v1h-1zM47 683h1v2h-1zM48 681h1v2h-1zM49 679h1v2h-1zM50 677h1v2h-1zM51 675h1v2h-1zM52 673h1v2h-1zM53 672h1v2h-1zM54 670h1v2h-1zM55 668h1v2h-1zM56 667h1v2h-1zM57 665h1v2h-1zM58 664h1v1h-1zM59 662h1v2h-1zM60 661h1v1h-1zM61 659h1v2h-1zM62 657h1v2h-1zM63 656h1v2h-1zM64 654h1v2h-1zM65 652h1v2h-1zM66 651h1v2h-1zM67 649h1v2h-1zM68 648h1v2h-1zM69 648h1v1h-1zM70 647h1v2h-1zM71 647h1v1h-1zM72 647h1v1h-1zM73 647h1v1h-1zM74 647h1v1h-1zM75 646h1v1h-1zM76 646h1v1h-1zM77 646h1v1h-1zM78 646h1v1h-1zM79 646h1v1h-1zM80 646h1v2h-1zM81 647h1v1h-1zM82 647h1v1h-1zM83 646h1v1h-1zM84 645h1v1h-1zM85 644h1v1h-1zM86 643h1v1h-1zM87 642h1v1h-1zM88 642h1v2h-1zM89 644h1v1h-1zM90 645h1v1h-1zM91 646h1v1h-1zM92 647h1v2h-1zM93 648h1v3h-1zM94 651h1v2h-1zM95 653h1v3h-1zM96 656h1v2h-1zM97 658h1v3h-1zM98 661h1v3h-1zM99 664h1v3h-1zM100 667h1v3h-1zM101 670h1v3h-1zM102 673h1v3h-1zM103 676h1v2h-1zM104 678h1v2h-1zM105 680h1v2h-1zM106 682h1v2h-1zM107 684h1v2h-1zM108 686h1v2h-1zM109 688h1v2h-1zM110 690h1v2h-1zM111 692h1v2h-1zM112 694h1v2h-1zM113 696h1v1h-1zM114 697h1v2h-1zM115 699h1v2h-1zM116 701h1v2h-1zM117 701h1v1h-1zM118 700h1v2h-1zM119 700h1v1h-1zM120 699h1v2h-1zM121 699h1v1h-1zM122 698h1v1h-1zM123 698h1v1h-1zM124 697h1v1h-1zM125 697h1v1h-1zM126 696h1v1h-1zM127 697h1v1h-1zM128 698h1v1h-1zM129 699h1v2h-1zM130 700h1v2h-1zM131 702h1v2h-1zM132 704h1v2h-1zM133 706h1v2h-1zM134 708h1v2h-1zM135 710h1v2h-1zM136 712h1v2h-1zM137 712h1v1h-1zM138 711h1v1h-1zM139 710h1v2h-1zM140 710h1v1h-1zM141 709h1v1h-1zM142 707h1v2h-1zM143 704h1v3h-1zM144 701h1v3h-1zM145 698h1v3h-1zM146 695h1v3h-1zM147 693h1v2h-1zM148 690h1v3h-1zM149 687h1v3h-1zM150 685h1v2h-1zM151 685h1v1h-1zM152 686h1v1h-1zM153 686h1v1h-1zM154 686h1v1h-1zM155 685h1v1h-1zM156 684h1v2h-1zM157 684h1v1h-1zM158 683h1v2h-1zM159 683h1v1h-1zM160 682h1v1h-1zM161 683h1v1h-1zM162 684h1v2h-1zM163 685h1v2h-1zM164 686h1v2h-1zM165 687h1v2h-1zM166 689h1v3h-1zM167 692h1v4h-1zM168 696h1v3h-1zM169 699h1v4h-1zM170 703h1v4h-1zM171 706h1v4h-1zM172 710h1v4h-1zM173 714h1v3h-1zM174 717h1v4h-1zM175 721h1v2h-1zM176 723h1v2h-1zM177 725h1v1h-1zM178 726h1v2h-1zM179 728h1v1h-1zM180 729h1v2h-1zM181 729h1v1h-1zM182 728h1v1h-1zM183 727h1v2h-1zM184 726h1v2h-1zM185 727h1v2h-1zM186 729h1v2h-1zM187 731h1v2h-1zM188 733h1v2h-1zM189 735h1v2h-1zM190 737h1v4h-1zM191 741h1v4h-1zM192 745h1v4h-1zM193 749h1v3h-1zM194 752h1v2h-1zM195 754h1v1h-1zM196 755h1v1h-1zM197 756h1v1h-1zM198 757h1v1h-1zM199 758h1v2h-1zM200 759h1v1h-1zM201 759h1v1h-1zM202 759h1v1h-1zM203 759h1v1h-1zM204 759h1v1h-1zM205 759h1v2h-1zM206 760h1v1h-1zM207 761h1v1h-1zM208 762h1v1h-1zM209 762h1v2h-1zM210 762h1v2h-1zM211 761h1v2h-1zM212 760h1v1h-1zM213 759h1v1h-1zM214 757h1v2h-1zM215 754h1v4h-1zM216 751h1v3h-1zM217 748h1v3h-1zM218 744h1v4h-1zM219 741h1v3h-1zM220 737h1v4h-1zM221 735h1v2h-1zM222 732h1v3h-1zM223 730h1v2h-1zM224 727h1v3h-1zM225 724h1v3h-1zM226 722h1v2h-1zM227 720h1v2h-1zM228 718h1v2h-1zM229 717h1v1h-1zM230 715h1v2h-1zM231 714h1v1h-1zM232 712h1v2h-1zM233 711h1v1h-1zM234 708h1v3h-1zM235 706h1v3h-1zM236 704h1v2h-1zM237 701h1v3h-1zM238 699h1v2h-1zM239 696h1v3h-1zM240 693h1v3h-1zM241 691h1v2h-1zM242 688h1v3h-1zM243 686h1v2h-1zM244 684h1v2h-1zM245 681h1v3h-1zM246 679h1v2h-1zM247 677h1v2h-1zM248 676h1v1h-1zM249 674h1v2h-1zM250 673h1v2h-1zM251 672h1v2h-1zM252 671h1v1h-1zM253 669h1v2h-1zM254 668h1v2h-1zM255 667h1v1h-1zM256 666h1v1h-1zM257 665h1v1h-1zM258 665h1v1h-1zM259 664h1v1h-1zM260 664h1v1h-1zM261 663h1v1h-1zM262 663h1v1h-1zM263 663h1v1h-1zM264 662h1v1h-1zM265 662h1v1h-1zM266 662h1v1h-1zM267 662h1v2h-1zM268 663h1v2h-1zM269 664h1v2h-1zM270 665h1v2h-1zM271 667h1v1h-1zM272 668h1v2h-1zM273 670h1v2h-1zM274 672h1v2h-1zM275 674h1v2h-1zM276 675h1v2h-1zM277 677h1v2h-1zM278 679h1v3h-1zM279 681h1v2h-1zM280 683h1v2h-1zM281 685h1v2h-1zM282 687h1v2h-1zM283 689h1v1h-1zM284 690h1v2h-1zM285 692h1v2h-1zM286 694h1v2h-1zM287 696h1v2h-1zM288 698h1v3h-1zM289 700h1v2h-1zM290 702h1v2h-1zM291 704h1v2h-1zM292 706h1v2h-1zM293 708h1v3h-1zM294 711h1v2h-1zM295 713h1v2h-1zM296 715h1v2h-1zM297 716h1v1h-1zM298 717h1v1h-1zM299 717h1v1h-1zM300 717h1v2h-1zM301 718h1v1h-1zM302 718h1v1h-1zM303 717h1v2h-1zM304 717h1v1h-1zM305 717h1v1h-1zM306 717h1v1h-1zM307 716h1v2h-1zM308 715h1v1h-1zM309 713h1v2h-1zM310 712h1v2h-1zM311 711h1v2h-1zM312 708h1v3h-1zM313 705h1v3h-1zM314 703h1v2h-1zM315 698h1v5h-1zM316 693h1v5h-1zM317 688h1v5h-1zM318 682h1v6h-1zM319 677h1v5h-1zM320 671h1v6h-1zM321 666h1v5h-1zM322 660h1v6h-1zM323 655h1v5h-1zM324 651h1v4h-1zM325 647h1v4h-1zM326 644h1v3h-1zM327 640h1v4h-1zM328 636h1v4h-1zM329 633h1v3h-1zM330 629h1v4h-1zM331 626h1v3h-1zM332 623h1v3h-1zM333 620h1v3h-1zM334 616h1v4h-1zM335 613h1v3h-1zM336 610h1v3h-1zM337 607h1v3h-1zM338 604h1v3h-1zM339 600h1v4h-1zM340 596h1v4h-1zM341 592h1v4h-1zM342 588h1v4h-1zM343 584h1v4h-1zM344 582h1v2h-1zM345 581h1v2h-1zM346 580h1v1h-1zM347 578h1v2h-1zM348 577h1v2h-1zM349 576h1v1h-1zM350 575h1v2h-1zM351 575h1v1h-1zM352 575h1v1h-1zM353 574h1v1h-1zM354 574h1v1h-1zM355 575h1v1h-1zM356 576h1v2h-1zM357 577h1v2h-1zM358 578h1v2h-1zM359 580h1v2h-1zM360 582h1v2h-1zM361 584h1v2h-1zM362 586h1v2h-1zM363 588h1v3h-1zM364 591h1v4h-1zM365 595h1v5h-1zM366 600h1v4h-1zM367 604h1v5h-1zM368 609h1v5h-1zM369 614h1v5h-1zM370 619h1v5h-1zM371 624h1v5h-1zM372 629h1v6h-1zM373 635h1v6h-1zM374 641h1v6h-1zM375 647h1v5h-1zM376 652h1v3h-1zM377 655h1v3h-1zM378 658h1v3h-1zM379 661h1v3h-1zM380 664h1v4h-1zM381 668h1v3h-1zM382 671h1v3h-1zM383 674h1v2h-1zM384 676h1v1h-1zM385 677h1v2h-1zM386 679h1v1h-1zM387 680h1v2h-1zM388 682h1v2h-1zM389 684h1v3h-1zM390 687h1v2h-1zM391 689h1v3h-1zM392 692h1v2h-1zM393 694h1v3h-1zM394 697h1v2h-1zM395 699h1v2h-1zM396 701h1v2h-1zM397 703h1v2h-1zM398 705h1v2h-1zM399 707h1v2h-1zM400 709h1v2h-1zM401 711h1v2h-1zM402 713h1v2h-1zM403 715h1v2h-1zM404 717h1v2h-1zM405 718h1v1h-1zM406 719h1v1h-1zM407 719h1v2h-1zM408 720h1v3h-1zM409 723h1v2h-1zM410 725h1v3h-1zM411 728h1v2h-1zM412 730h1v3h-1zM413 733h1v2h-1zM414 734h1v2h-1zM415 735h1v1h-1zM416 736h1v1h-1zM417 736h1v2h-1zM418 734h1v2h-1zM419 732h1v2h-1zM420 730h1v2h-1zM421 727h1v3h-1zM422 727h1v1h-1zM423 726h1v1h-1zM424 725h1v2h-1zM425 725h1v1h-1zM426 724h1v1h-1zM427 723h1v2h-1zM428 722h1v1h-1zM429 721h1v1h-1zM430 720h1v1h-1zM431 719h1v1h-1zM432 717h1v2h-1zM433 717h1v1h-1zM434 716h1v1h-1zM435 715h1v1h-1zM436 714h1v1h-1zM437 712h1v2h-1zM438 711h1v2h-1zM439 708h1v3h-1zM440 706h1v2h-1zM441 703h1v3h-1zM442 699h1v4h-1zM443 695h1v4h-1zM444 691h1v4h-1zM445 687h1v4h-1zM446 681h1v6h-1zM447 676h1v5h-1zM448 670h1v6h-1zM449 666h1v4h-1zM450 661h1v5h-1zM451 657h1v4h-1zM452 655h1v2h-1zM453 653h1v2h-1zM454 651h1v2h-1zM455 649h1v2h-1zM456 647h1v2h-1zM457 645h1v2h-1zM458 642h1v3h-1zM459 640h1v2h-1zM460 637h1v3h-1zM461 634h1v3h-1zM462 634h1v2h-1zM463 635h1v1h-1zM464 635h1v1h-1zM465 635h1v1h-1zM466 636h1v1h-1zM467 637h1v2h-1zM468 639h1v2h-1zM469 641h1v1h-1zM470 642h1v2h-1zM471 644h1v3h-1zM472 645h1v2h-1zM473 645h1v1h-1zM474 645h1v1h-1zM475 645h1v1h-1zM476 645h1v2h-1zM477 646h1v2h-1zM478 647h1v2h-1zM479 648h1v2h-1zM480 649h1v2h-1zM481 651h1v3h-1zM482 654h1v3h-1zM483 657h1v4h-1zM484 661h1v3h-1zM485 664h1v3h-1zM486 667h1v5h-1zM487 672h1v4h-1zM488 676h1v5h-1zM489 681h1v4h-1zM490 685h1v5h-1zM491 690h1v7h-1zM492 697h1v8h-1zM493 705h1v7h-1zM494 711h1v6h-1zM495 717h1v6h-1zM496 723h1v6h-1zM497 729h1v6h-1zM498 735h1v4h-1zM499 739h1v3h-1zM500 742h1v4h-1zM501 746h1v2h-1zM502 748h1v2h-1zM503 750h1v2h-1zM504 752h1v2h-1zM505 754h1v2h-1zM506 752h1v2h-1zM507 750h1v2h-1zM508 747h1v3h-1zM509 745h1v2h-1zM510 742h1v3h-1zM511 735h1v7h-1zM512 729h1v6h-1zM513 722h1v7h-1zM514 717h1v5h-1zM515 714h1v3h-1zM516 710h1v4h-1zM517 707h1v3h-1zM518 703h1v4h-1zM519 702h1v1h-1zM520 702h1v2h-1zM521 703h1v1h-1zM522 703h1v1h-1zM523 704h1v1h-1zM524 704h1v1h-1zM525 703h1v1h-1zM526 702h1v1h-1zM527 701h1v1h-1zM528 700h1v1h-1zM529 697h1v3h-1zM530 692h1v5h-1zM531 687h1v5h-1zM532 681h1v6h-1zM533 676h1v5h-1zM534 670h1v6h-1zM535 665h1v5h-1zM536 659h1v6h-1zM537 654h1v5h-1zM538 648h1v6h-1zM539 641h1v7h-1zM540 634h1v7h-1zM541 628h1v6h-1zM542 622h1v6h-1zM543 616h1v6h-1zM544 611h1v5h-1zM545 608h1v3h-1zM546 604h1v4h-1zM547 601h1v3h-1zM548 598h1v3h-1zM549 595h1v3h-1zM550 593h1v2h-1zM551 590h1v3h-1zM552 588h1v2h-1zM553 586h1v2h-1zM554 587h1v4h-1zM555 591h1v3h-1zM556 594h1v4h-1zM557 598h1v5h-1zM558 603h1v6h-1zM559 609h1v6h-1zM560 615h1v5h-1zM561 620h1v4h-1zM562 624h1v6h-1zM563 630h1v6h-1zM564 636h1v6h-1zM565 642h1v6h-1zM566 648h1v6h-1zM567 654h1v4h-1zM568 658h1v2h-1zM569 660h1v3h-1zM570 663h1v2h-1zM571 665h1v3h-1zM572 668h1v3h-1zM573 671h1v4h-1zM574 675h1v4h-1zM575 679h1v3h-1zM576 682h1v4h-1zM577 686h1v4h-1zM578 690h1v5h-1zM579 695h1v6h-1zM580 701h1v6h-1zM581 707h1v6h-1zM582 713h1v7h-1zM583 719h1v7h-1zM584 726h1v7h-1zM585 733h1v6h-1zM586 739h1v7h-1zM587 746h1v6h-1zM588 752h1v6h-1zM589 758h1v6h-1zM590 764h1v6h-1zM591 770h1v6h-1zM592 776h1v6h-1zM593 782h1v5h-1zM594 787h1v6h-1zM595 793h1v5h-1zM596 798h1v6h-1zM597 804h1v4h-1zM598 808h1v4h-1zM599 812h1v4h-1zM600 816h1v3h-1zM601 819h1v4h-1zM602 823h1v3h-1zM603 823h1v2h-1zM604 822h1v2h-1zM605 821h1v2h-1zM606 820h1v1h-1zM607 818h1v2h-1zM608 817h1v2h-1zM609 814h1v3h-1zM610 812h1v2h-1zM611 810h1v2h-1zM612 808h1v2h-1zM613 806h1v2h-1zM614 804h1v2h-1zM615 802h1v2h-1zM616 801h1v2h-1zM617 800h1v2h-1zM618 799h1v2h-1zM619 798h1v2h-1zM620 797h1v2h-1zM621 796h1v2h-1zM622 796h1v1h-1zM623 795h1v1h-1zM624 794h1v2h-1zM625 794h1v1h-1zM626 793h1v1h-1zM627 794h1v1h-1zM628 794h1v2h-1zM629 795h1v1h-1zM630 796h1v1h-1zM631 796h1v2h-1zM632 792h1v4h-1zM633 788h1v4h-1zM634 784h1v4h-1zM635 780h1v4h-1zM636 777h1v3h-1zM637 774h1v3h-1zM638 772h1v2h-1zM639 769h1v3h-1zM640 767h1v2h-1zM641 764h1v3h-1zM642 760h1v4h-1zM643 756h1v4h-1zM644 753h1v3h-1zM645 749h1v4h-1zM646 746h1v3h-1zM647 746h1v1h-1zM648 745h1v2h-1zM649 745h1v1h-1zM650 745h1v1h-1zM651 744h1v1h-1zM652 744h1v1h-1zM653 744h1v1h-1zM654 744h1v1h-1zM655 743h1v2h-1zM656 740h1v3h-1zM657 737h1v3h-1zM658 734h1v3h-1zM659 730h1v4h-1zM660 726h1v4h-1zM661 721h1v5h-1zM662 717h1v4h-1zM663 712h1v5h-1zM664 707h1v5h-1zM665 702h1v5h-1zM666 696h1v6h-1zM667 690h1v6h-1zM668 684h1v6h-1zM669 679h1v5h-1zM670 673h1v6h-1zM671 668h1v5h-1zM672 663h1v5h-1zM673 658h1v5h-1zM674 652h1v6h-1zM675 648h1v4h-1zM676 643h1v5h-1zM677 638h1v5h-1zM678 633h1v5h-1zM679 628h1v5h-1zM680 623h1v5h-1zM681 616h1v7h-1zM682 609h1v7h-1zM683 603h1v6h-1zM684 598h1v5h-1zM685 593h1v5h-1zM686 589h1v4h-1zM687 584h1v5h-1zM688 580h1v4h-1zM689 577h1v3h-1zM690 575h1v2h-1zM691 574h1v1h-1zM692 572h1v2h-1zM693 570h1v2h-1zM694 567h1v3h-1zM695 563h1v4h-1zM696 560h1v3h-1zM697 556h1v4h-1zM698 553h1v3h-1zM699 551h1v2h-1zM700 549h1v2h-1zM701 548h1v2h-1zM702 546h1v2h-1zM703 545h1v2h-1zM704 544h1v2h-1zM705 546h1v2h-1zM706 548h1v3h-1zM707 551h1v3h-1zM708 554h1v3h-1zM709 557h1v3h-1zM710 560h1v3h-1zM711 563h1v3h-1zM712 566h1v4h-1zM713 570h1v4h-1zM714 574h1v5h-1zM715 579h1v5h-1zM716 584h1v5h-1zM717 589h1v6h-1zM718 595h1v5h-1zM719 600h1v5h-1zM720 605h1v5h-1zM721 610h1v5h-1zM722 615h1v5h-1zM723 620h1v4h-1zM724 624h1v3h-1zM725 627h1v3h-1zM726 630h1v3h-1zM727 633h1v3h-1zM728 636h1v3h-1zM729 639h1v5h-1zM730 644h1v5h-1zM731 649h1v5h-1zM732 654h1v5h-1zM733 659h1v5h-1zM734 664h1v6h-1zM735 670h1v6h-1zM736 676h1v7h-1zM737 683h1v6h-1zM738 689h1v7h-1zM739 696h1v5h-1zM740 701h1v5h-1zM741 706h1v5h-1zM742 711h1v5h-1zM743 716h1v5h-1zM744 721h1v5h-1zM745 726h1v5h-1zM746 731h1v5h-1zM747 736h1v5h-1zM748 740h1v2h-1zM749 742h1v1h-1zM750 743h1v1h-1zM751 744h1v2h-1zM752 745h1v2h-1zM753 744h1v2h-1zM754 743h1v1h-1zM755 741h1v2h-1zM756 739h1v2h-1zM757 737h1v2h-1zM758 737h1v1h-1zM759 738h1v1h-1zM760 738h1v2h-1zM761 739h1v1h-1zM762 739h1v2h-1zM763 737h1v2h-1zM764 735h1v2h-1zM765 733h1v2h-1zM766 731h1v2h-1zM767 729h1v2h-1zM768 726h1v3h-1zM769 723h1v3h-1zM770 719h1v4h-1zM771 716h1v3h-1zM772 713h1v3h-1zM773 710h1v3h-1zM774 707h1v3h-1zM775 704h1v3h-1zM776 701h1v3h-1zM777 698h1v3h-1zM778 695h1v3h-1zM779 693h1v2h-1zM780 691h1v2h-1zM781 687h1v4h-1zM782 682h1v5h-1zM783 677h1v5h-1zM784 671h1v6h-1zM785 666h1v5h-1zM786 664h1v2h-1zM787 661h1v3h-1zM788 659h1v2h-1zM789 656h1v3h-1zM790 653h1v3h-1zM791 653h1v1h-1zM792 652h1v1h-1zM793 651h1v1h-1zM794 650h1v1h-1zM795 649h1v1h-1zM796 648h1v2h-1zM797 649h1v1h-1zM798 650h1v2h-1zM799 651h1v2h-1zM800 653h1v1h-1zM801 654h1v2h-1zM802 655h1v4h-1zM803 659h1v5h-1zM804 664h1v4h-1zM805 668h1v3h-1zM806 671h1v2h-1zM807 673h1v2h-1zM808 675h1v1h-1zM809 676h1v2h-1zM810 678h1v2h-1zM811 680h1v3h-1zM812 683h1v3h-1zM813 686h1v3h-1zM814 689h1v3h-1zM815 692h1v4h-1zM816 696h1v3h-1zM817 699h1v5h-1zM818 704h1v4h-1zM819 708h1v4h-1zM820 712h1v4h-1zM821 716h1v5h-1zM822 720h1v4h-1zM823 724h1v3h-1zM824 727h1v3h-1zM825 730h1v3h-1zM826 733h1v3h-1zM827 736h1v2h-1zM828 738h1v3h-1zM829 741h1v2h-1zM830 743h1v4h-1zM831 747h1v4h-1zM832 751h1v5h-1zM833 756h1v5h-1zM834 761h1v5h-1zM835 766h1v4h-1zM836 768h1v2h-1zM837 768h1v1h-1zM838 768h1v1h-1zM839 768h1v1h-1zM840 768h1v1h-1zM841 765h1v3h-1zM842 763h1v2h-1zM843 760h1v3h-1zM844 758h1v2h-1zM845 755h1v3h-1zM846 750h1v5h-1zM847 746h1v4h-1zM848 742h1v4h-1zM849 737h1v5h-1zM850 733h1v4h-1zM851 730h1v3h-1zM852 726h1v4h-1zM853 723h1v3h-1zM854 720h1v3h-1zM855 719h1v1h-1zM856 718h1v2h-1zM857 717h1v2h-1zM858 717h1v1h-1zM859 716h1v1h-1zM860 717h1v2h-1zM861 718h1v2h-1zM862 720h1v2h-1zM863 721h1v2h-1zM864 723h1v2h-1zM865 724h1v2h-1zM866 726h1v2h-1zM867 728h1v2h-1zM868 730h1v2h-1zM869 732h1v3h-1zM870 734h1v1h-1zM871 735h1v1h-1zM872 736h1v1h-1zM873 737h1v1h-1zM874 738h1v2h-1zM875 739h1v1h-1zM876 739h1v1h-1zM877 739h1v1h-1zM878 739h1v1h-1zM879 738h1v2h-1zM880 733h1v5h-1zM881 728h1v5h-1zM882 723h1v5h-1zM883 723h1v2h-1zM884 725h1v3h-1zM885 728h1v2h-1zM886 730h1v2h-1zM887 732h1v2h-1zM888 734h1v4h-1zM889 738h1v4h-1zM890 742h1v5h-1zM891 747h1v5h-1zM892 752h1v5h-1zM893 757h1v5h-1zM894 762h1v5h-1zM895 767h1v6h-1zM896 773h1v5h-1zM897 778h1v6h-1zM898 784h1v5h-1zM899 789h1v6h-1zM900 795h1v6h-1zM901 801h1v6h-1zM902 807h1v6h-1zM903 813h1v2h-1zM904 815h1v2h-1zM905 817h1v2h-1zM906 819h1v2h-1zM907 821h1v2h-1zM908 823h1v2h-1zM909 822h1v2h-1zM910 820h1v2h-1zM911 818h1v2h-1zM912 816h1v2h-1zM913 814h1v2h-1zM914 810h1v4h-1zM915 807h1v3h-1zM916 803h1v4h-1zM917 800h1v3h-1zM918 796h1v4h-1zM919 793h1v3h-1zM920 791h1v2h-1zM921 788h1v3h-1zM922 785h1v3h-1zM923 783h1v2h-1zM924 782h1v1h-1zM925 780h1v2h-1zM926 778h1v2h-1zM927 777h1v1h-1zM928 777h1v2h-1zM929 778h1v1h-1zM930 778h1v1h-1zM931 779h1v1h-1zM932 779h1v1h-1zM933 776h1v3h-1zM934 773h1v3h-1zM935 771h1v2h-1zM936 768h1v3h-1zM937 764h1v4h-1zM938 758h1v6h-1zM939 753h1v5h-1zM940 747h1v6h-1zM941 742h1v5h-1zM942 737h1v5h-1zM943 732h1v5h-1zM944 727h1v5h-1zM945 722h1v5h-1zM946 718h1v4h-1zM947 714h1v4h-1zM948 711h1v3h-1zM949 707h1v4h-1zM950 704h1v3h-1zM951 701h1v3h-1zM952 698h1v3h-1zM953 695h1v3h-1zM954 692h1v3h-1zM955 689h1v3h-1zM956 686h1v3h-1zM957 683h1v3h-1zM958 680h1v3h-1zM959 678h1v2h-1zM960 675h1v3h-1zM961 672h1v3h-1zM962 671h1v2h-1zM963 669h1v2h-1zM964 668h1v1h-1zM965 666h1v2h-1zM966 664h1v2h-1zM967 663h1v2h-1zM968 662h1v2h-1zM969 661h1v2h-1zM970 661h1v1h-1zM971 660h1v1h-1zM972 659h1v1h-1zM973 659h1v1h-1zM974 658h1v1h-1zM975 658h1v1h-1zM976 657h1v2h-1zM977 657h1v1h-1zM978 657h1v1h-1zM979 656h1v1h-1zM980 656h1v1h-1zM981 657h1v2h-1zM982 659h1v1h-1zM983 660h1v2h-1zM984 662h1v1h-1zM985 663h1v2h-1zM986 664h1v2h-1zM987 666h1v1h-1zM988 667h1v2h-1zM989 669h1v1h-1zM990 670h1v1h-1zM991 668h1v2h-1zM992 667h1v2h-1zM993 666h1v1h-1zM994 664h1v2h-1zM995 662h1v2h-1zM996 660h1v2h-1zM997 657h1v3h-1zM998 655h1v2h-1zM999 652h1v3h-1zM1000 650h1v2h-1zM1001 647h1v3h-1zM1002 645h1v2h-1zM1003 643h1v2h-1zM1004 640h1v3h-1zM1005 638h1v2h-1zM1006 638h1v1h-1zM1007 638h1v1h-1zM1008 638h1v1h-1zM1009 638h1v1h-1zM1010 638h1v2h-1zM1011 639h1v1h-1zM1012 639h1v1h-1zM1013 639h1v1h-1zM1014 639h1v1h-1zM1015 639h1v1h-1zM1016 640h1v1h-1zM1017 640h1v1h-1zM1018 640h1v1h-1zM1019 640h1v1h-1zM1020 639h1v2h-1zM1021 639h1v1h-1zM1022 638h1v2h-1zM1023 638h1v1h-1zM1024 637h1v1h-1zM1025 637h1v1h-1zM1026 635h1v2h-1zM1027 634h1v2h-1zM1028 633h1v1h-1zM1029 631h1v2h-1zM1030 630h1v2h-1zM1031 629h1v1h-1zM1032 627h1v2h-1zM1033 626h1v2h-1zM1034 625h1v1h-1zM1035 624h1v1h-1zM1036 624h1v1h-1zM1037 624h1v1h-1zM1038 625h1v1h-1zM1039 625h1v3h-1zM1040 628h1v3h-1zM1041 631h1v3h-1zM1042 634h1v5h-1zM1043 639h1v5h-1zM1044 644h1v5h-1zM1045 649h1v5h-1zM1046 654h1v5h-1zM1047 659h1v5h-1zM1048 664h1v6h-1zM1049 670h1v6h-1zM1050 676h1v6h-1zM1051 682h1v6h-1zM1052 688h1v6h-1zM1053 694h1v6h-1zM1054 700h1v4h-1zM1055 704h1v5h-1zM1056 709h1v4h-1zM1057 713h1v5h-1zM1058 718h1v4h-1zM1059 722h1v4h-1zM1060 726h1v3h-1zM1061 729h1v4h-1zM1062 733h1v4h-1zM1063 737h1v3h-1zM1064 740h1v3h-1zM1065 743h1v3h-1zM1066 746h1v3h-1zM1067 749h1v3h-1zM1068 752h1v3h-1zM1069 755h1v3h-1zM1070 758h1v2h-1zM1071 760h1v2h-1zM1072 762h1v3h-1zM1073 765h1v2h-1zM1074 767h1v2h-1zM1075 769h1v2h-1zM1076 771h1v2h-1zM1077 773h1v3h-1zM1078 776h1v3h-1zM1079 778h1v1h-1zM1080 779h1v1h-1zM1081 779h1v2h-1zM1082 780h1v2h-1zM1083 780h1v1h-1zM1084 779h1v1h-1zM1085 778h1v1h-1zM1086 776h1v2h-1zM1087 775h1v2h-1zM1088 772h1v3h-1zM1089 769h1v3h-1zM1090 767h1v2h-1zM1091 764h1v3h-1zM1092 761h1v3h-1zM1093 758h1v3h-1zM1094 755h1v3h-1zM1095 752h1v3h-1zM1096 749h1v3h-1zM1097 744h1v5h-1zM1098 738h1v6h-1zM1099 733h1v5h-1zM1100 728h1v5h-1zM1101 723h1v5h-1zM1102 719h1v4h-1zM1103 714h1v5h-1zM1104 710h1v4h-1zM1105 706h1v4h-1zM1106 702h1v4h-1zM1107 698h1v4h-1zM1108 695h1v3h-1zM1109 692h1v3h-1zM1110 689h1v3h-1zM1111 686h1v3h-1zM1112 684h1v2h-1zM1113 682h1v2h-1zM1114 680h1v2h-1zM1115 678h1v3h-1zM1116 678h1v1h-1zM1117 677h1v2h-1zM1118 677h1v1h-1zM1119 676h1v1h-1zM1120 675h1v2h-1zM1121 675h1v1h-1zM1122 674h1v2h-1zM1123 672h1v2h-1zM1124 669h1v3h-1zM1125 667h1v2h-1zM1126 666h1v1h-1zM1127 667h1v2h-1zM1128 669h1v3h-1zM1129 672h1v2h-1zM1130 674h1v3h-1zM1131 676h1v3h-1zM1132 679h1v3h-1zM1133 682h1v3h-1zM1134 685h1v3h-1zM1135 688h1v4h-1zM1136 691h1v1h-1zM1137 692h1v1h-1zM1138 693h1v1h-1zM1139 694h1v1h-1zM1140 694h1v2h-1zM1141 695h1v2h-1zM1142 697h1v2h-1zM1143 699h1v2h-1zM1144 700h1v2h-1zM1145 702h1v2h-1zM1146 704h1v5h-1zM1147 709h1v5h-1zM1148 714h1v7h-1zM1149 721h1v10h-1zM1150 731h1v4h-1zM1151 735h1v3h-1zM1152 738h1v2h-1zM1153 740h1v2h-1zM1154 742h1v3h-1zM1155 744h1v3h-1zM1156 747h1v2h-1zM1157 749h1v2h-1zM1158 751h1v3h-1zM1159 754h1v3h-1zM1160 755h1v2h-1zM1161 755h1v1h-1zM1162 754h1v2h-1zM1163 754h1v1h-1zM1164 753h1v2h-1zM1165 753h1v1h-1zM1166 752h1v2h-1zM1167 752h1v1h-1zM1168 751h1v2h-1zM1169 751h1v1h-1zM1170 751h1v1h-1zM1171 752h1v1h-1zM1172 753h1v2h-1zM1173 754h1v2h-1zM1174 755h1v2h-1zM1175 756h1v2h-1zM1176 753h1v3h-1zM1177 750h1v3h-1zM1178 747h1v3h-1zM1179 744h1v3h-1zM1180 741h1v3h-1zM1181 737h1v4h-1zM1182 733h1v4h-1zM1183 730h1v3h-1zM1184 728h1v2h-1zM1185 728h1v1h-1zM1186 727h1v1h-1zM1187 726h1v2h-1zM1188 726h1v1h-1zM1189 725h1v1h-1zM1190 725h1v1h-1zM1191 724h1v1h-1zM1192 724h1v1h-1zM1193 723h1v2h-1zM1194 721h1v3h-1zM1195 716h1v5h-1zM1196 712h1v4h-1zM1197 707h1v5h-1zM1198 703h1v4h-1zM1199 702h1v2h-1zM1200 700h1v2h-1zM1201 698h1v2h-1zM1202 697h1v2h-1zM1203 695h1v2h-1zM1204 694h1v1h-1zM1205 692h1v2h-1zM1206 691h1v2h-1zM1207 690h1v2h-1zM1208 689h1v1h-1zM1209 688h1v1h-1zM1210 688h1v2h-1zM1211 689h1v2h-1zM1212 690h1v2h-1zM1213 691h1v2h-1zM1214 692h1v2h-1zM1215 694h1v1h-1zM1216 695h1v1h-1zM1217 696h1v1h-1zM1218 697h1v1h-1zM1219 696h1v2h-1zM1220 696h1v1h-1zM1221 695h1v1h-1zM1222 694h1v2h-1zM1223 694h1v1h-1zM1224 694h1v1h-1zM1225 695h1v1h-1zM1226 695h1v2h-1zM1227 696h1v1h-1zM1228 696h1v2h-1zM1229 698h1v2h-1zM1230 700h1v2h-1zM1231 702h1v2h-1zM1232 704h1v2h-1zM1233 706h1v2h-1zM1234 707h1v2h-1zM1235 708h1v2h-1zM1236 710h1v1h-1zM1237 711h1v2h-1zM1238 712h1v2h-1zM1239 711h1v2h-1zM1240 709h1v2h-1zM1241 707h1v2h-1zM1242 705h1v2h-1zM1243 703h1v2h-1zM1244 702h1v2h-1zM1245 701h1v2h-1zM1246 700h1v2h-1zM1247 699h1v2h-1zM1248 697h1v3h-1zM1249 694h1v3h-1zM1250 691h1v3h-1zM1251 688h1v3h-1zM1252 685h1v3h-1zM1253 681h1v4h-1zM1254 677h1v4h-1zM1255 672h1v5h-1zM1256 668h1v4h-1zM1257 664h1v4h-1zM1258 659h1v5h-1zM1259 654h1v5h-1zM1260 648h1v6h-1zM1261 643h1v5h-1zM1262 638h1v5h-1zM1263 633h1v5h-1zM1264 628h1v5h-1zM1265 621h1v7h-1zM1266 614h1v7h-1zM1267 608h1v6h-1zM1268 604h1v4h-1zM1269 599h1v5h-1zM1270 595h1v4h-1zM1271 590h1v5h-1zM1272 587h1v3h-1zM1273 584h1v3h-1zM1274 582h1v2h-1zM1275 579h1v3h-1zM1276 577h1v2h-1zM1277 574h1v3h-1zM1278 570h1v4h-1zM1279 567h1v3h-1zM1280 564h1v3h-1zM1281 561h1v3h-1zM1282 558h1v3h-1zM1283 555h1v3h-1zM1284 553h1v2h-1zM1285 550h1v3h-1zM1286 549h1v1h-1zM1287 550h1v2h-1zM1288 552h1v1h-1zM1289 553h1v2h-1zM1290 555h1v1h-1zM1291 556h1v3h-1zM1292 559h1v4h-1zM1293 563h1v3h-1zM1294 566h1v5h-1zM1295 571h1v4h-1zM1296 575h1v5h-1zM1297 580h1v5h-1zM1298 585h1v4h-1zM1299 589h1v6h-1zM1300 595h1v5h-1zM1301 600h1v6h-1zM1302 606h1v5h-1zM1303 611h1v6h-1zM1304 617h1v4h-1zM1305 621h1v4h-1zM1306 625h1v5h-1zM1307 630h1v5h-1zM1308 635h1v5h-1zM1309 640h1v6h-1zM1310 646h1v6h-1zM1311 652h1v7h-1zM1312 659h1v7h-1zM1313 666h1v6h-1zM1314 672h1v6h-1zM1315 678h1v3h-1zM1316 681h1v3h-1zM1317 684h1v4h-1zM1318 688h1v3h-1zM1319 691h1v4h-1zM1320 695h1v1h-1zM1321 696h1v2h-1zM1322 698h1v2h-1zM1323 700h1v2h-1zM1324 702h1v1h-1zM1325 703h1v2h-1zM1326 705h1v1h-1zM1327 706h1v1h-1zM1328 707h1v2h-1zM1329 708h1v2h-1zM1330 710h1v1h-1zM1331 711h1v2h-1zM1332 712h1v2h-1zM1333 714h1v1h-1zM1334 715h1v2h-1zM1335 716h1v2h-1zM1336 715h1v2h-1zM1337 715h1v1h-1zM1338 714h1v1h-1zM1339 713h1v1h-1zM1340 711h1v2h-1zM1341 709h1v2h-1zM1342 707h1v2h-1zM1343 705h1v2h-1zM1344 702h1v3h-1zM1345 697h1v5h-1zM1346 690h1v7h-1zM1347 684h1v6h-1zM1348 677h1v7h-1zM1349 675h1v3h-1zM1350 672h1v3h-1zM1351 670h1v2h-1zM1352 667h1v3h-1zM1353 664h1v3h-1zM1354 662h1v2h-1zM1355 660h1v2h-1zM1356 657h1v3h-1zM1357 655h1v2h-1zM1358 653h1v2h-1zM1359 651h1v2h-1zM1360 651h1v1h-1zM1361 650h1v1h-1zM1362 649h1v1h-1zM1363 648h1v2h-1zM1364 647h1v2h-1zM1365 648h1v1h-1zM1366 648h1v1h-1zM1367 649h1v1h-1zM1368 649h1v1h-1zM1369 650h1v1h-1zM1370 650h1v1h-1zM1371 651h1v1h-1zM1372 651h1v1h-1zM1373 652h1v1h-1zM1374 652h1v1h-1zM1375 653h1v1h-1zM1376 653h1v1h-1zM1377 654h1v1h-1zM1378 654h1v1h-1zM1379 655h1v1h-1zM1380 655h1v1h-1zM1381 654h1v1h-1zM1382 653h1v2h-1zM1383 653h1v1h-1zM1384 653h1v1h-1zM1385 653h1v1h-1zM1386 653h1v1h-1zM1387 652h1v1h-1zM1388 652h1v1h-1zM1389 652h1v1h-1zM1390 650h1v2h-1zM1391 649h1v1h-1zM1392 647h1v2h-1zM1393 646h1v2h-1zM1394 648h1v5h-1zM1395 653h1v4h-1zM1396 657h1v5h-1zM1397 662h1v5h-1zM1398 666h1v5h-1zM1399 671h1v4h-1zM1400 675h1v4h-1zM1401 679h1v5h-1zM1402 684h1v4h-1zM1403 688h1v4h-1zM1404 692h1v6h-1zM1405 698h1v5h-1zM1406 703h1v5h-1zM1407 708h1v5h-1zM1408 713h1v5h-1zM1409 718h1v5h-1zM1410 723h1v5h-1zM1411 728h1v5h-1zM1412 733h1v3h-1zM1413 736h1v3h-1zM1414 739h1v2h-1zM1415 741h1v3h-1zM1416 744h1v2h-1zM1417 746h1v3h-1zM1418 749h1v2h-1zM1419 751h1v3h-1zM1420 754h1v2h-1zM1421 756h1v3h-1zM1422 759h1v2h-1zM1423 761h1v3h-1zM1424 764h1v2h-1zM1425 766h1v3h-1zM1426 769h1v2h-1zM1427 771h1v3h-1zM1428 774h1v5h-1zM1429 779h1v5h-1zM1430 784h1v5h-1zM1431 789h1v5h-1zM1432 793h1v5h-1zM1433 798h1v4h-1zM1434 802h1v4h-1zM1435 806h1v4h-1zM1436 810h1v5h-1zM1437 814h1v3h-1zM1438 817h1v3h-1zM1439 820h1v4h-1zM1440 824h1v3h-1zM1441 827h1v3h-1zM1442 830h1v3h-1zM1443 830h1v2h-1zM1444 828h1v2h-1zM1445 826h1v2h-1zM1446 824h1v2h-1zM1447 822h1v2h-1zM1448 820h1v2h-1zM1449 818h1v2h-1zM1450 816h1v2h-1zM1451 814h1v2h-1zM1452 810h1v5h-1zM1453 803h1v7h-1zM1454 796h1v7h-1zM1455 789h1v7h-1zM1456 782h1v7h-1zM1457 774h1v8h-1zM1458 766h1v8h-1zM1459 758h1v8h-1zM1460 750h1v8h-1zM1461 744h1v6h-1zM1462 737h1v7h-1zM1463 731h1v6h-1zM1464 725h1v6h-1zM1465 718h1v7h-1zM1466 713h1v5h-1zM1467 708h1v5h-1zM1468 703h1v5h-1zM1469 698h1v5h-1zM1470 693h1v5h-1zM1471 690h1v4h-1zM1472 686h1v4h-1zM1473 682h1v4h-1zM1474 678h1v4h-1zM1475 674h1v4h-1zM1476 668h1v6h-1zM1477 660h1v8h-1zM1478 652h1v8h-1zM1479 644h1v8h-1zM1480 638h1v6h-1zM1481 632h1v6h-1zM1482 626h1v6h-1zM1483 620h1v6h-1zM1484 614h1v6h-1zM1485 608h1v6h-1zM1486 605h1v3h-1zM1487 602h1v3h-1zM1488 599h1v3h-1zM1489 595h1v4h-1zM1490 591h1v4h-1zM1491 589h1v3h-1zM1492 587h1v2h-1zM1493 584h1v3h-1zM1494 581h1v3h-1zM1495 578h1v3h-1zM1496 575h1v3h-1zM1497 572h1v3h-1zM1498 569h1v3h-1zM1499 566h1v3h-1zM1500 564h1v3h-1zM1501 567h1v3h-1zM1502 570h1v4h-1zM1503 574h1v4h-1zM1504 578h1v4h-1zM1505 582h1v5h-1zM1506 587h1v5h-1zM1507 592h1v6h-1zM1508 598h1v5h-1zM1509 603h1v6h-1zM1510 609h1v5h-1zM1511 614h1v6h-1zM1512 620h1v5h-1zM1513 625h1v4h-1zM1514 629h1v3h-1zM1515 632h1v3h-1zM1516 635h1v4h-1zM1517 639h1v5h-1zM1518 644h1v6h-1zM1519 650h1v5h-1zM1520 655h1v5h-1zM1521 660h1v5h-1zM1522 665h1v6h-1zM1523 671h1v7h-1zM1524 678h1v6h-1zM1525 684h1v6h-1zM1526 690h1v7h-1zM1527 697h1v6h-1zM1528 703h1v7h-1zM1529 710h1v7h-1zM1530 717h1v7h-1zM1531 724h1v7h-1zM1532 731h1v6h-1zM1533 737h1v5h-1zM1534 742h1v5h-1zM1535 747h1v5h-1zM1536 752h1v6h-1zM1537 758h1v5h-1zM1538 763h1v5h-1zM1539 768h1v4h-1zM1540 772h1v5h-1zM1541 777h1v4h-1zM1542 781h1v5h-1zM1543 786h1v4h-1zM1544 790h1v4h-1zM1545 794h1v5h-1zM1546 799h1v4h-1zM1547 803h1v4h-1zM1548 807h1v4h-1zM1549 810h1v2h-1zM1550 811h1v1h-1zM1551 812h1v1h-1zM1552 812h1v1h-1zM1553 813h1v1h-1zM1554 813h1v2h-1zM1555 814h1v1h-1zM1556 814h1v2h-1zM1557 815h1v1h-1zM1558 816h1v1h-1zM1559 814h1v2h-1zM1560 812h1v2h-1zM1561 809h1v3h-1zM1562 807h1v2h-1zM1563 804h1v3h-1zM1564 800h1v4h-1zM1565 797h1v3h-1zM1566 793h1v4h-1zM1567 790h1v3h-1zM1568 786h1v4h-1zM1569 780h1v6h-1zM1570 774h1v6h-1zM1571 768h1v6h-1zM1572 762h1v6h-1zM1573 756h1v6h-1zM1574 751h1v5h-1zM1575 745h1v6h-1zM1576 739h1v6h-1zM1577 734h1v5h-1zM1578 728h1v6h-1zM1579 721h1v7h-1zM1580 714h1v7h-1zM1581 707h1v7h-1zM1582 700h1v7h-1zM1583 693h1v7h-1zM1584 686h1v7h-1zM1585 678h1v8h-1zM1586 671h1v7h-1zM1587 665h1v6h-1zM1588 660h1v5h-1zM1589 656h1v4h-1zM1590 652h1v4h-1zM1591 647h1v5h-1zM1592 643h1v4h-1zM1593 640h1v3h-1zM1594 637h1v3h-1zM1595 634h1v3h-1zM1596 631h1v3h-1zM1597 628h1v3h-1zM1598 623h1v5h-1zM1599 618h1v5h-1zM1600 613h1v5h-1zM1601 607h1v6h-1zM1602 601h1v6h-1zM1603 594h1v7h-1zM1604 588h1v6h-1zM1605 581h1v7h-1zM1606 576h1v5h-1z"/></g>
<g shape-rendering="crispEdges"><rect x="22" y="15" width="5" height="5" fill="#fff"/><rect x="24" y="14" width="1" height="1" fill="#fff"/><rect x="24" y="20" width="1" height="1" fill="#fff"/><rect x="21" y="17" width="1" height="1" fill="#fff"/><rect x="27" y="17" width="1" height="1" fill="#fff"/><rect x="21" y="14" width="1" height="1" fill="#fff"/><rect x="27" y="14" width="1" height="1" fill="#fff"/><rect x="21" y="20" width="1" height="1" fill="#fff"/><rect x="27" y="20" width="1" height="1" fill="#fff"/><rect x="188" y="14" width="2" height="8" fill="#fff"/><rect x="186" y="17" width="6" height="2" fill="#fff"/><rect x="373" y="14" width="2" height="8" fill="#fff"/><rect x="371" y="17" width="6" height="2" fill="#fff"/><rect x="956" y="14" width="1" height="8" fill="#fff"/><rect x="955" y="15" width="3" height="6" fill="#fff"/><rect x="954" y="16" width="5" height="1" fill="#fff"/><rect x="954" y="19" width="5" height="1" fill="#fff"/><rect x="1061" y="15" width="5" height="5" fill="#fff"/><rect x="1063" y="14" width="1" height="1" fill="#fff"/><rect x="1063" y="20" width="1" height="1" fill="#fff"/><rect x="1060" y="17" width="1" height="1" fill="#fff"/><rect x="1066" y="17" width="1" height="1" fill="#fff"/><rect x="1060" y="14" width="1" height="1" fill="#fff"/><rect x="1066" y="14" width="1" height="1" fill="#fff"/><rect x="1060" y="20" width="1" height="1" fill="#fff"/><rect x="1066" y="20" width="1" height="1" fill="#fff"/><rect x="1348" y="14" width="2" height="8" fill="#fff"/><rect x="1346" y="17" width="6" height="2" fill="#fff"/><rect x="1552" y="14" width="2" height="8" fill="#fff"/><rect x="1550" y="17" width="6" height="2" fill="#fff"/><polygon points="20,465.5 26,462 26,469" fill="#ff00ff"/><polygon points="1059,465.5 1065,462 1065,469" fill="#ff00ff"/></g>
<defs><linearGradient id="wm" x1="0" y1="0" x2="0" y2="1"><stop offset="0" stop-color="#f0381a"/><stop offset="1" stop-color="#ff2200"/></linearGradient></defs>
<rect x="1465" y="421" width="151" height="50" fill="url(#wm)"/>
<text x="1473" y="443.5" font-family="'Liberation Sans','Noto Sans CJK SC',sans-serif" font-weight="bold" font-size="15.5" fill="#ffff00" textLength="46" lengthAdjust="spacingAndGlyphs">股道边</text>
<text x="1521" y="442" font-family="'Liberation Sans','Noto Sans CJK SC',sans-serif" font-weight="bold" font-size="11" fill="#ffa800" textLength="89" lengthAdjust="spacingAndGlyphs">指标公式量化资源</text>
<text x="1473" y="461" font-family="'Liberation Sans',sans-serif" font-weight="bold" font-size="18" fill="#ffffff" textLength="138" lengthAdjust="spacingAndGlyphs">www.de6688.com</text>
<g fill="#ff0000" shape-rendering="crispEdges"><rect x="-2" y="418" width="2" height="2"/><rect x="101" y="422" width="2" height="2"/><rect x="140" y="400" width="2" height="2"/><rect x="159" y="410" width="2" height="2"/><rect x="159" y="410" width="2" height="2"/><rect x="174" y="416" width="2" height="2"/><rect x="188" y="440" width="2" height="2"/><rect x="280" y="450" width="2" height="2"/><rect x="285" y="451" width="2" height="2"/><rect x="309" y="427" width="2" height="2"/><rect x="319" y="373" width="2" height="2"/><rect x="363" y="382" width="2" height="2"/><rect x="415" y="399" width="2" height="2"/><rect x="408" y="395" width="2" height="2"/><rect x="408" y="396" width="2" height="2"/><rect x="470" y="383" width="2" height="2"/><rect x="470" y="383" width="2" height="2"/><rect x="582" y="303" width="2" height="2"/><rect x="591" y="328" width="2" height="2"/><rect x="658" y="333" width="2" height="2"/><rect x="635" y="383" width="2" height="2"/><rect x="756" y="254" width="2" height="2"/><rect x="746" y="279" width="2" height="2"/><rect x="810" y="143" width="2" height="2"/><rect x="878" y="197" width="2" height="2"/><rect x="882" y="207" width="2" height="2"/><rect x="916" y="350" width="2" height="2"/><rect x="921" y="370" width="2" height="2"/><rect x="1047" y="282" width="2" height="2"/><rect x="1052" y="288" width="2" height="2"/><rect x="1062" y="292" width="2" height="2"/><rect x="1114" y="288" width="2" height="2"/><rect x="1141" y="287" width="2" height="2"/><rect x="1163" y="310" width="2" height="2"/><rect x="1159" y="324" width="2" height="2"/><rect x="1212" y="312" width="2" height="2"/><rect x="1305" y="281" width="2" height="2"/><rect x="1454" y="236" width="2" height="2"/><rect x="1421" y="255" width="2" height="2"/><rect x="1529" y="195" width="2" height="2"/><rect x="1518" y="205" width="2" height="2"/><rect x="1543" y="182" width="2" height="2"/><rect x="1585" y="125" width="2" height="2"/></g>
<defs><filter id="crisp" x="0" y="0" width="100%" height="100%" filterUnits="userSpaceOnUse" color-interpolation-filters="sRGB"><feComponentTransfer><feFuncA type="discrete" tableValues="0 0 0 1 1 1 1"/></feComponentTransfer></filter></defs>
<g font-family="'Liberation Sans','Noto Sans CJK SC',sans-serif" font-size="12" filter="url(#crisp)"><text x="0" y="13.3" fill="#c0c0c0" textLength="57" lengthAdjust="spacing">★东华测试</text><text x="58" y="13.3" fill="#ff5454" textLength="24" lengthAdjust="spacing">日线</text><text x="89" y="13.3" fill="#c0c0c0" textLength="48" lengthAdjust="spacing">猎人抓板</text><text x="142.5" y="13.3" fill="#ff0000" textLength="94" lengthAdjust="spacing">猎人见底: 0.000,</text><text x="241.5" y="13.3" fill="#ff00ff" textLength="94" lengthAdjust="spacing">猎人短进: 0.000,</text><text x="341" y="13.3" fill="#0000ff" textLength="100" lengthAdjust="spacing">猎人均线6: 52.425</text><text x="447" y="13.3" fill="#ff3030" font-family="DejaVu Sans,sans-serif" font-size="13" text-anchor="middle">↑</text><text x="450.3" y="13.3" fill="#0000ff">,</text><text x="459" y="13.3" fill="#ff00ff" textLength="36" lengthAdjust="spacing">52.425</text><text x="500.5" y="13.3" fill="#ff3030" font-family="DejaVu Sans,sans-serif" font-size="13" text-anchor="middle">↑</text><text x="503.5" y="13.3" fill="#ff00ff">,</text><text x="512.5" y="13.3" fill="#ffffff" textLength="83" lengthAdjust="spacing">趋势线: 49.754</text><text x="601.5" y="13.3" fill="#ff3030" font-family="DejaVu Sans,sans-serif" font-size="13" text-anchor="middle">↑</text><text x="604.6" y="13.3" fill="#fff">,</text><text x="614" y="13.3" fill="#ff0000" textLength="107.5" lengthAdjust="spacing">牛熊分界线: 46.756</text><text x="726.6" y="13.3" fill="#ff3030" font-family="DejaVu Sans,sans-serif" font-size="13" text-anchor="middle">↑</text><text x="729.7" y="13.3" fill="#ff0000">,</text><text x="0" y="480.5" fill="#c0c0c0" textLength="47" lengthAdjust="spacing">底部黑马</text><text x="53" y="480.5" fill="#ffff00" textLength="94" lengthAdjust="spacing">十天能量: 46.008</text><text x="153.4" y="480.5" fill="#ff3030" font-family="DejaVu Sans,sans-serif" font-size="13" text-anchor="middle">↑</text><text x="157.3" y="480.5" fill="#ffff00">,</text><text x="166" y="480.5" fill="#ffff00" textLength="56" lengthAdjust="spacing">暴: 0.000,</text><text x="229" y="480.5" fill="#ff00ff" textLength="82" lengthAdjust="spacing">可能板: 50.000</text><text x="317.6" y="480.5" fill="#ff3030" font-family="DejaVu Sans,sans-serif" font-size="13" text-anchor="middle">↑</text><text x="321.4" y="480.5" fill="#ff00ff">,</text><text x="330" y="480.5" fill="#00ff00" textLength="85" lengthAdjust="spacing">超强线: 40.000,</text><text x="423" y="480.5" fill="#c0c0c0" textLength="77" lengthAdjust="spacing">底线: -40.000</text><text x="-1" y="430.5" fill="#ff00ff" textLength="23" lengthAdjust="spacing">短进</text><text x="102" y="435.0" fill="#ff00ff" textLength="23" lengthAdjust="spacing">短进</text><text x="141" y="412.6" fill="#ff0000">见</text><text x="165.5" y="412.6" fill="#ff0000">底</text><text x="160" y="422.7" fill="#ff0000">见</text><text x="184.8" y="422.7" fill="#ff0000">底</text><text x="160" y="423.0" fill="#ff00ff" textLength="23" lengthAdjust="spacing">短进</text><text x="175" y="428.8" fill="#ff00ff" textLength="23" lengthAdjust="spacing">短进</text><text x="189" y="453.4" fill="#ff00ff" textLength="23" lengthAdjust="spacing">短进</text><text x="281" y="463.3" fill="#ff0000">见</text><text x="305.5" y="463.3" fill="#ff0000">底</text><text x="286" y="464.2" fill="#ff00ff" textLength="23" lengthAdjust="spacing">短进</text><text x="293" y="439.6" fill="#ffff00" textLength="35" lengthAdjust="spacing">抓板去</text><text x="302" y="386.0" fill="#ffff00" textLength="35" lengthAdjust="spacing">抓板去</text><text x="363.5" y="394.5" fill="#ff00ff" textLength="23" lengthAdjust="spacing">短进</text><text x="399" y="412.2" fill="#ffff00" textLength="35" lengthAdjust="spacing">抓板去</text><text x="409" y="408.3" fill="#ff0000">见</text><text x="433" y="408.3" fill="#ff0000">底</text><text x="409" y="408.5" fill="#ff00ff" textLength="23" lengthAdjust="spacing">短进</text><text x="453.2" y="396.2" fill="#ffff00" textLength="35" lengthAdjust="spacing">抓板去</text><text x="471" y="396.0" fill="#ff00ff" textLength="23" lengthAdjust="spacing">短进</text><text x="583" y="316.0" fill="#ff00ff" textLength="23" lengthAdjust="spacing">短进</text><text x="592" y="341.0" fill="#ff00ff" textLength="23" lengthAdjust="spacing">短进</text><text x="641.5" y="346.3" fill="#ffff00" textLength="35" lengthAdjust="spacing">抓板去</text><text x="636" y="396.4" fill="#ff00ff" textLength="23" lengthAdjust="spacing">短进</text><text x="739.4" y="267.5" fill="#ffff00" textLength="35" lengthAdjust="spacing">抓板去</text><text x="746.7" y="291.6" fill="#ff00ff" textLength="23" lengthAdjust="spacing">短进</text><text x="811" y="156.4" fill="#ff00ff" textLength="23" lengthAdjust="spacing">短进</text><text x="879.3" y="210.0" fill="#ff0000">见</text><text x="903.4" y="210.0" fill="#ff0000">底</text><text x="883.2" y="220.2" fill="#ff00ff" textLength="23" lengthAdjust="spacing">短进</text><text x="917.2" y="363.2" fill="#ff00ff" textLength="23" lengthAdjust="spacing">短进</text><text x="904" y="382.6" fill="#ffff00" textLength="35" lengthAdjust="spacing">抓板去</text><text x="1047.9" y="295.5" fill="#ff00ff" textLength="23" lengthAdjust="spacing">短进</text><text x="1053" y="301.5" fill="#ff0000">见</text><text x="1077.4" y="301.0" fill="#ff0000">底</text><text x="1063" y="304.9" fill="#ff00ff" textLength="23" lengthAdjust="spacing">短进</text><text x="1115.3" y="300.6" fill="#ff0000">见</text><text x="1140" y="300.6" fill="#ff0000">底</text><text x="1141.8" y="300.0" fill="#ff00ff" textLength="23" lengthAdjust="spacing">短进</text><text x="1147" y="323.0" fill="#ffff00" textLength="35" lengthAdjust="spacing">抓板去</text><text x="1159.6" y="337.0" fill="#ff00ff" textLength="23" lengthAdjust="spacing">短进</text><text x="1212.8" y="325.5" fill="#ff00ff" textLength="23" lengthAdjust="spacing">短进</text><text x="1305.9" y="294.2" fill="#ff00ff" textLength="23" lengthAdjust="spacing">短进</text><text x="1437.7" y="249.0" fill="#ffff00" textLength="35" lengthAdjust="spacing">抓板去</text><text x="1421.8" y="268.3" fill="#ff00ff" textLength="23" lengthAdjust="spacing">短进</text><text x="1529.6" y="208.0" fill="#ff00ff" textLength="23" lengthAdjust="spacing">短进</text><text x="1519" y="218.4" fill="#ff00ff" textLength="23" lengthAdjust="spacing">短进</text><text x="1544.2" y="194.6" fill="#ff0000">见</text><text x="1568" y="195.4" fill="#ff0000">底</text><text x="1569" y="138.3" fill="#ffff00" textLength="35" lengthAdjust="spacing">抓板去</text><text x="311" y="460.5" fill="#ffffff" textLength="29" lengthAdjust="spacing">27.42</text><text x="791" y="23.5" fill="#ffffff" textLength="29" lengthAdjust="spacing">56.40</text></g>
<path d="M296.5 456.5H311M296.5 456.5l3.5-3.5M296.5 456.5l3.5 3.5" stroke="#fff" stroke-width="1" fill="none" shape-rendering="crispEdges"/>
<path d="M777.5 15.5L791 19.5M777.5 15.5l2-2M777.5 15.5l3 3.5" stroke="#fff" stroke-width="1" fill="none" shape-rendering="crispEdges"/>
<text x="19.5" y="35.2" font-family="'Liberation Serif','Noto Serif CJK SC',serif" font-size="18" fill="#ff0000" filter="url(#crisp)" textLength="436.5" lengthAdjust="spacing">白线上面要关注，红线上面是买点，买错也要买。</text>
</svg></body></html>
